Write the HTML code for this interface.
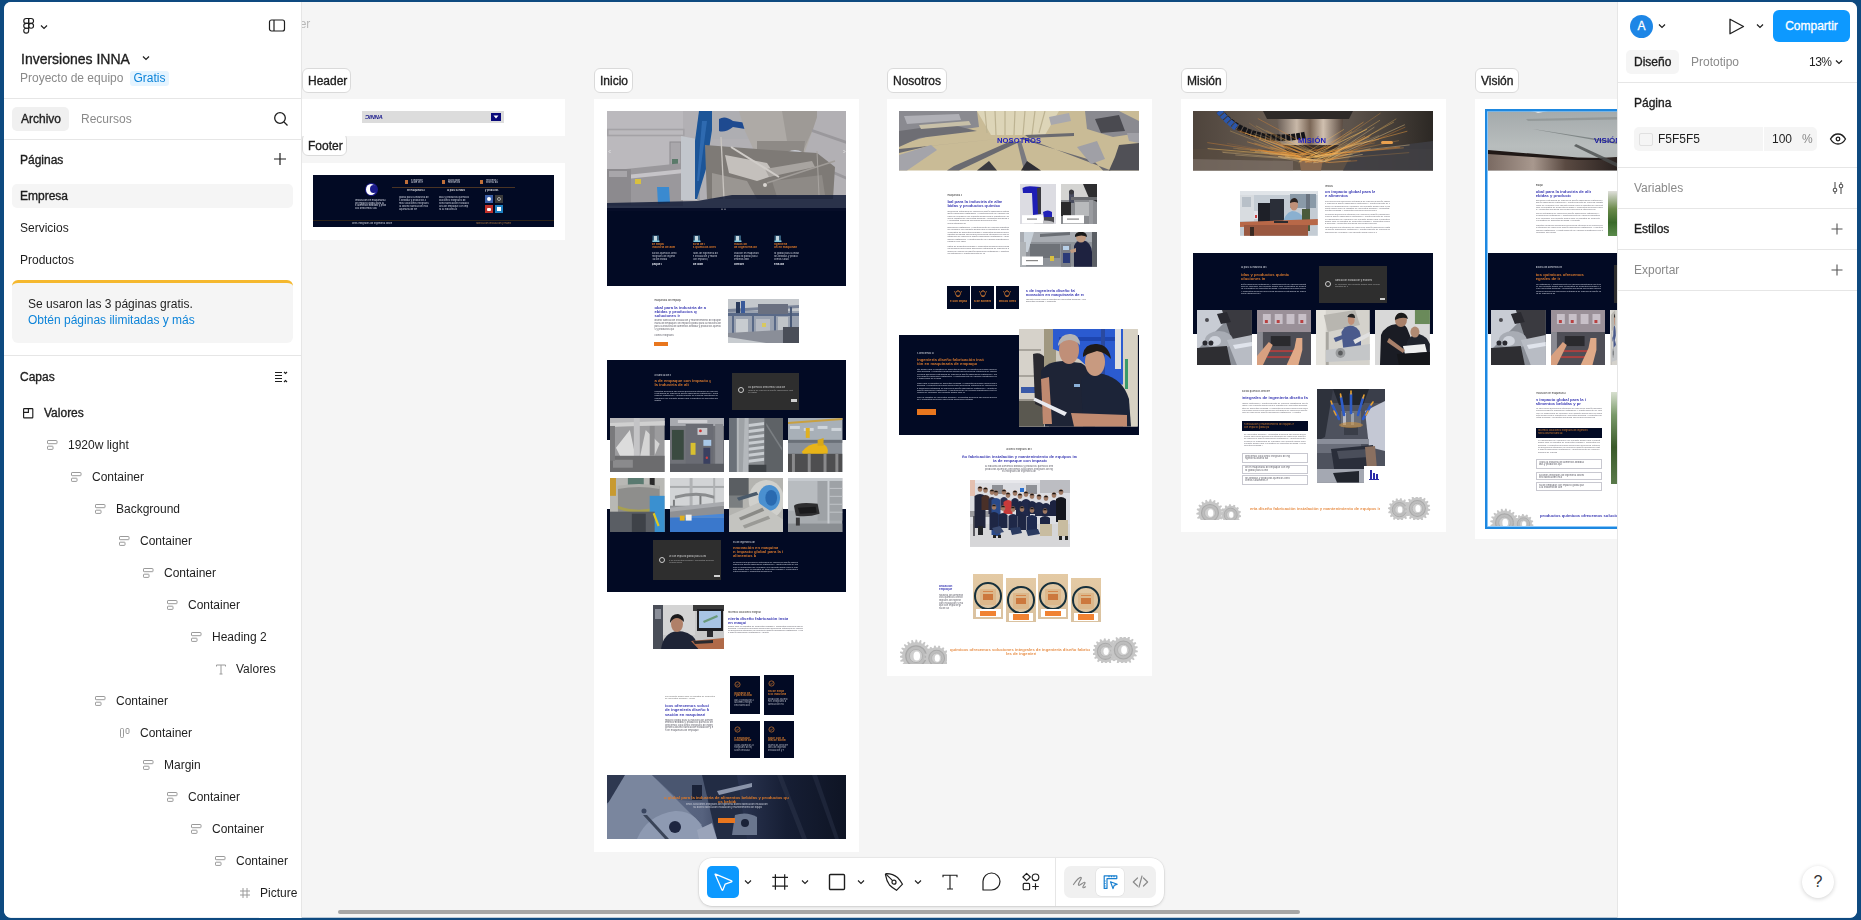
<!DOCTYPE html>
<html><head><meta charset="utf-8">
<style>
*{box-sizing:border-box;margin:0;padding:0}
html,body{width:1861px;height:920px;overflow:hidden;background:#0e4a80;font-family:"Liberation Sans",sans-serif;color:#1e1e1e}
.abs{position:absolute}
#win{position:absolute;left:0;top:0;width:1861px;height:920px;background:#f5f5f5;clip-path:inset(2px 4px 2.2px 4px round 7px)}
#left{position:absolute;left:0;top:0;width:302px;height:920px;background:#fff;border-right:1px solid #e6e6e6}
#right{position:absolute;left:1617px;top:0;width:244px;height:920px;background:#fff;border-left:1px solid #e6e6e6}
.t{position:absolute;white-space:nowrap;font-size:12px;line-height:16px;will-change:transform}
.sb{font-weight:normal!important;-webkit-text-stroke:0.35px currentColor}
.hl{position:absolute;height:1px;background:#e6e6e6}
.lab{position:absolute;height:25px;background:#fff;border:1px solid #d9d9d9;border-radius:6px;font-size:12px;font-weight:bold;line-height:23px;padding:0 6px;color:#222}
.frame{position:absolute;background:#fff;overflow:hidden}
.nv{position:absolute;background:#020b26}
.ph{position:absolute}
</style></head><body>
<div id="win">
<!-- canvas content -->
<div id="canvas" class="abs" style="left:0;top:0;width:1861px;height:920px;will-change:transform">
<div class="t" style="left:271.0px;top:18.0px;font-size:12px;line-height:13.8px;color:#b8b8b8;">Header</div>
<div class="abs" style="left:302px;top:68.4px;width:49px;height:24.39999999999999px;background:#fff;border:1px solid #dadada;border-radius:6px"></div>
<div class="t sb" style="left:308px;top:73.9px;font-size:12px;line-height:14px;color:#1e1e1e">Header</div>
<div class="abs" style="left:302px;top:133px;width:45px;height:23px;background:#fff;border:1px solid #dadada;border-radius:6px"></div>
<div class="t sb" style="left:308px;top:138.5px;font-size:12px;line-height:14px;color:#1e1e1e">Footer</div>
<div class="abs" style="left:594px;top:68.4px;width:39px;height:24.39999999999999px;background:#fff;border:1px solid #dadada;border-radius:6px"></div>
<div class="t sb" style="left:600px;top:73.9px;font-size:12px;line-height:14px;color:#1e1e1e">Inicio</div>
<div class="abs" style="left:887px;top:68.4px;width:60px;height:24.39999999999999px;background:#fff;border:1px solid #dadada;border-radius:6px"></div>
<div class="t sb" style="left:893px;top:73.9px;font-size:12px;line-height:14px;color:#1e1e1e">Nosotros</div>
<div class="abs" style="left:1181px;top:68.4px;width:46px;height:24.39999999999999px;background:#fff;border:1px solid #dadada;border-radius:6px"></div>
<div class="t sb" style="left:1187px;top:73.9px;font-size:12px;line-height:14px;color:#1e1e1e">Misión</div>
<div class="abs" style="left:1475px;top:68.4px;width:44px;height:24.39999999999999px;background:#fff;border:1px solid #dadada;border-radius:6px"></div>
<div class="t sb" style="left:1481px;top:73.9px;font-size:12px;line-height:14px;color:#1e1e1e">Visión</div>
<div class="abs" style="left:302.0px;top:98.7px;width:263.0px;height:37.3px;background:#fff;"></div>
<div class="abs" style="left:302.0px;top:163.0px;width:263.0px;height:77.0px;background:#fff;"></div>
<div class="abs" style="left:594.0px;top:98.7px;width:264.5px;height:753.1px;background:#fff;"></div>
<div class="abs" style="left:887.0px;top:98.7px;width:265.0px;height:577.3px;background:#fff;"></div>
<div class="abs" style="left:1181.0px;top:98.7px;width:265.0px;height:433.3px;background:#fff;"></div>
<div class="abs" style="left:1475.0px;top:98.7px;width:142.0px;height:440.3px;background:#fff;"></div>
<div class="abs" style="left:362.0px;top:111.0px;width:142.0px;height:12.0px;background:#dcdcdc;"></div>
<div class="t" style="left:365.0px;top:114.0px;font-size:6px;line-height:6.9px;color:#1a1a8c;font-weight:bold;letter-spacing:-0.3px"><i>ƆINNA</i></div>
<div class="abs" style="left:491.0px;top:113.0px;width:10.0px;height:8.0px;background:#0a0a7a;"></div>
<svg class="abs" style="left:493px;top:115px" width="6" height="4" viewBox="0 0 6 4"><path d="M0.5 0.5h5L3 3.5z" fill="#fff"/></svg>
<div class="abs" style="left:313.4px;top:175.2px;width:240.2px;height:52.1px;background:#020a24;"></div>
<div class="abs" style="left:365px;top:183px;width:12.5px;height:13px;border-radius:50%;background:#1a1a8a"></div><div class="abs" style="left:365.5px;top:184px;width:10px;height:11px;border-radius:50%;background:#fff"></div>
<div class="abs" style="left:369.5px;top:185px;width:7px;height:8px;border-radius:50%;background:#1a1a8a"></div>
<div class="abs" style="left:355.0px;top:198.9px;width:31.0px;height:3.12px;overflow:hidden;white-space:nowrap;font-size:2.60px;line-height:3.12px;font-weight:normal;color:#d8dce8;opacity:1.00">Innovación en maquinaria de empaque con impacto global para la industria de alimentos bebidas y productos químicos ofrecemos soluciones integrales de ingeniería</div>
<div class="abs" style="left:355.0px;top:201.5px;width:29.4px;height:3.12px;overflow:hidden;white-space:nowrap;font-size:2.60px;line-height:3.12px;font-weight:normal;color:#d8dce8;opacity:1.00">on impacto global para la industria de alimentos bebidas y productos químicos ofrecemos soluciones integrales de ingeniería diseño fabricación instalación y man</div>
<div class="abs" style="left:355.0px;top:204.1px;width:31.0px;height:3.12px;overflow:hidden;white-space:nowrap;font-size:2.60px;line-height:3.12px;font-weight:normal;color:#d8dce8;opacity:1.00">e alimentos bebidas y productos químicos ofrecemos soluciones integrales de ingeniería diseño fabricación instalación y mantenimiento de equipos industriales co</div>
<div class="abs" style="left:355.0px;top:206.7px;width:21.7px;height:3.12px;overflow:hidden;white-space:nowrap;font-size:2.60px;line-height:3.12px;font-weight:normal;color:#d8dce8;opacity:1.00">cos ofrecemos soluciones integrales de ingeniería diseño fabricación instalación y mantenimiento de equipos industriales con tecnología de vanguardia calidad ce</div>
<div class="abs" style="left:405.0px;top:180.0px;width:3.0px;height:4.0px;background:#c0703a;"></div>
<div class="abs" style="left:411.0px;top:178.9px;width:12.0px;height:3.12px;overflow:hidden;white-space:nowrap;font-size:2.60px;line-height:3.12px;font-weight:normal;color:#d8dce8;opacity:1.00">e ingeniería diseño fabricación instalación y mantenimiento de equipos industriales con tecnología de vanguardia calidad certificada y un equipo comprometido co</div>
<div class="abs" style="left:411.0px;top:181.4px;width:12.0px;height:3.12px;overflow:hidden;white-space:nowrap;font-size:2.60px;line-height:3.12px;font-weight:normal;color:#d8dce8;opacity:1.00">ación en maquinaria de empaque con impacto global para la industria de alimentos bebidas y productos químicos ofrecemos soluciones integrales de ingeniería dise</div>
<div class="abs" style="left:442.0px;top:180.0px;width:3.0px;height:4.0px;background:#c0703a;"></div>
<div class="abs" style="left:448.0px;top:178.9px;width:12.0px;height:3.12px;overflow:hidden;white-space:nowrap;font-size:2.60px;line-height:3.12px;font-weight:normal;color:#d8dce8;opacity:1.00">pacto global para la industria de alimentos bebidas y productos químicos ofrecemos soluciones integrales de ingeniería diseño fabricación instalación y mantenim</div>
<div class="abs" style="left:448.0px;top:181.4px;width:12.0px;height:3.12px;overflow:hidden;white-space:nowrap;font-size:2.60px;line-height:3.12px;font-weight:normal;color:#d8dce8;opacity:1.00">mentos bebidas y productos químicos ofrecemos soluciones integrales de ingeniería diseño fabricación instalación y mantenimiento de equipos industriales con tec</div>
<div class="abs" style="left:480.0px;top:180.0px;width:3.0px;height:4.0px;background:#c0703a;"></div>
<div class="abs" style="left:486.0px;top:178.9px;width:12.0px;height:3.12px;overflow:hidden;white-space:nowrap;font-size:2.60px;line-height:3.12px;font-weight:normal;color:#d8dce8;opacity:1.00">frecemos soluciones integrales de ingeniería diseño fabricación instalación y mantenimiento de equipos industriales con tecnología de vanguardia calidad certifi</div>
<div class="abs" style="left:486.0px;top:181.4px;width:12.0px;height:3.12px;overflow:hidden;white-space:nowrap;font-size:2.60px;line-height:3.12px;font-weight:normal;color:#d8dce8;opacity:1.00">eniería diseño fabricación instalación y mantenimiento de equipos industriales con tecnología de vanguardia calidad certificada y un equipo comprometido con la </div>
<div class="abs" style="left:392.0px;top:187.3px;width:123.0px;height:0.5px;background:#4a3424;"></div>
<div class="abs" style="left:407.0px;top:188.9px;width:18.0px;height:3.12px;overflow:hidden;white-space:nowrap;font-size:2.60px;line-height:3.12px;font-weight:normal;color:#ffffff;opacity:1.00"> en maquinaria de empaque con impacto global para la industria de alimentos bebidas y productos químicos ofrecemos soluciones integrales de ingeniería diseño fa</div>
<div class="abs" style="left:399.0px;top:195.9px;width:30.0px;height:3.12px;overflow:hidden;white-space:nowrap;font-size:2.60px;line-height:3.12px;font-weight:normal;color:#d8dce8;opacity:0.95"> global para la industria de alimentos bebidas y productos químicos ofrecemos soluciones integrales de ingeniería diseño fabricación instalación y mantenimiento</div>
<div class="abs" style="left:399.0px;top:198.9px;width:27.0px;height:3.12px;overflow:hidden;white-space:nowrap;font-size:2.60px;line-height:3.12px;font-weight:normal;color:#d8dce8;opacity:0.95">s bebidas y productos químicos ofrecemos soluciones integrales de ingeniería diseño fabricación instalación y mantenimiento de equipos industriales con tecnolog</div>
<div class="abs" style="left:399.0px;top:201.9px;width:30.0px;height:3.12px;overflow:hidden;white-space:nowrap;font-size:2.60px;line-height:3.12px;font-weight:normal;color:#d8dce8;opacity:0.95">mos soluciones integrales de ingeniería diseño fabricación instalación y mantenimiento de equipos industriales con tecnología de vanguardia calidad certificada </div>
<div class="abs" style="left:399.0px;top:204.9px;width:28.5px;height:3.12px;overflow:hidden;white-space:nowrap;font-size:2.60px;line-height:3.12px;font-weight:normal;color:#d8dce8;opacity:0.95">ía diseño fabricación instalación y mantenimiento de equipos industriales con tecnología de vanguardia calidad certificada y un equipo comprometido con la produ</div>
<div class="abs" style="left:399.0px;top:207.9px;width:18.0px;height:3.12px;overflow:hidden;white-space:nowrap;font-size:2.60px;line-height:3.12px;font-weight:normal;color:#d8dce8;opacity:0.95">aquinaria de empaque con impacto global para la industria de alimentos bebidas y productos químicos ofrecemos soluciones integrales de ingeniería diseño fabrica</div>
<div class="abs" style="left:447.0px;top:188.9px;width:18.0px;height:3.12px;overflow:hidden;white-space:nowrap;font-size:2.60px;line-height:3.12px;font-weight:normal;color:#ffffff;opacity:1.00">al para la industria de alimentos bebidas y productos químicos ofrecemos soluciones integrales de ingeniería diseño fabricación instalación y mantenimiento de e</div>
<div class="abs" style="left:439.0px;top:195.9px;width:30.0px;height:3.12px;overflow:hidden;white-space:nowrap;font-size:2.60px;line-height:3.12px;font-weight:normal;color:#d8dce8;opacity:0.95">idas y productos químicos ofrecemos soluciones integrales de ingeniería diseño fabricación instalación y mantenimiento de equipos industriales con tecnología de</div>
<div class="abs" style="left:439.0px;top:198.9px;width:27.0px;height:3.12px;overflow:hidden;white-space:nowrap;font-size:2.60px;line-height:3.12px;font-weight:normal;color:#d8dce8;opacity:0.95">oluciones integrales de ingeniería diseño fabricación instalación y mantenimiento de equipos industriales con tecnología de vanguardia calidad certificada y un </div>
<div class="abs" style="left:439.0px;top:201.9px;width:30.0px;height:3.12px;overflow:hidden;white-space:nowrap;font-size:2.60px;line-height:3.12px;font-weight:normal;color:#d8dce8;opacity:0.95">seño fabricación instalación y mantenimiento de equipos industriales con tecnología de vanguardia calidad certificada y un equipo comprometido con la productivi</div>
<div class="abs" style="left:439.0px;top:204.9px;width:28.5px;height:3.12px;overflow:hidden;white-space:nowrap;font-size:2.60px;line-height:3.12px;font-weight:normal;color:#d8dce8;opacity:0.95">aria de empaque con impacto global para la industria de alimentos bebidas y productos químicos ofrecemos soluciones integrales de ingeniería diseño fabricación </div>
<div class="abs" style="left:439.0px;top:207.9px;width:18.0px;height:3.12px;overflow:hidden;white-space:nowrap;font-size:2.60px;line-height:3.12px;font-weight:normal;color:#d8dce8;opacity:0.95">ra la industria de alimentos bebidas y productos químicos ofrecemos soluciones integrales de ingeniería diseño fabricación instalación y mantenimiento de equipo</div>
<div class="abs" style="left:485.0px;top:188.9px;width:14.0px;height:3.12px;overflow:hidden;white-space:nowrap;font-size:2.60px;line-height:3.12px;font-weight:normal;color:#ffffff;opacity:1.00">y productos químicos ofrecemos soluciones integrales de ingeniería diseño fabricación instalación y mantenimiento de equipos industriales con tecnología de vang</div>
<div class="abs" style="left:485.0px;top:195.0px;width:8.0px;height:8.0px;background:#3b5fa8;"></div>
<div class="abs" style="left:495.0px;top:195.0px;width:8.0px;height:8.0px;background:#3a3a3a;"></div>
<div class="abs" style="left:485.0px;top:205.0px;width:8.0px;height:8.0px;background:#c0302a;"></div>
<div class="abs" style="left:495.0px;top:205.0px;width:8.0px;height:8.0px;background:#1d7fc0;"></div>
<div class="abs" style="left:487px;top:197px;width:4px;height:4px;border-radius:50%;background:#fff"></div><div class="abs" style="left:497px;top:197px;width:4px;height:4px;border-radius:50%;border:1px solid #aaa"></div><div class="abs" style="left:487px;top:207.5px;width:4px;height:3px;border-radius:1px;background:#fff"></div><div class="abs" style="left:497px;top:207px;width:4px;height:4px;background:#fff"></div>
<div class="abs" style="left:313.4px;top:219.5px;width:240.2px;height:0.4px;background:#2e2418;"></div>
<div class="abs" style="left:352.0px;top:221.9px;width:40.0px;height:3.12px;overflow:hidden;white-space:nowrap;font-size:2.60px;line-height:3.12px;font-weight:normal;color:#d8dce8;opacity:0.95">ones integrales de ingeniería diseño fabricación instalación y mantenimiento de equipos industriales con tecnología de vanguardia calidad certificada y un equip</div>
<div class="abs" style="left:476.0px;top:221.9px;width:35.0px;height:3.12px;overflow:hidden;white-space:nowrap;font-size:2.60px;line-height:3.12px;font-weight:normal;color:#b07a40;opacity:0.95">fabricación instalación y mantenimiento de equipos industriales con tecnología de vanguardia calidad certificada y un equipo comprometido con la productividad d</div>
<svg class="abs" style="left:606.6px;top:111px;filter:blur(.3px)" width="239.8" height="100" viewBox="0 0 239.8 100" preserveAspectRatio="none">
<rect width="240" height="100" fill="#b2b0b4"/>
<rect x="0" y="0" width="76" height="60" fill="#bbb9bd"/>
<rect x="0.8" y="18.5" width="76" height="6" fill="none" stroke="#a4a2a6" stroke-width="1.6"/>
<rect x="63" y="31" width="11" height="24" fill="#a9a7ab" stroke="#8e8c90" stroke-width="1"/>
<rect x="65" y="48" width="6" height="6" fill="#5a7a6a"/>
<path d="M0 60 L76 52 L76 95 L0 95Z" fill="#9a989c"/>
<path d="M0 66 L77 58 L77 62 L0 70Z" fill="#c6c4c8"/>
<rect x="0" y="58" width="24" height="36" fill="#8c8a8e"/><rect x="2" y="60" width="18" height="6" fill="#a8a6aa"/>
<rect x="28" y="68" width="6" height="5" fill="#d8c040"/>
<path d="M50 76 L62 76 L63 92 L51 93Z" fill="#3a8ad0"/>
<path d="M74 25 L90 28 L92 89 L74 89Z" fill="#c2c6cc"/><path d="M88 28 L92 29 L93 89 L90 89Z" fill="#9ea2a8"/>
<path d="M92 0 L108 0 L99 58 L90 88 L88 88 L88 30Z" fill="#1c5598"/>
<path d="M95 10 L100 10 L92 70 L90 70Z" fill="#3a78c0" opacity=".6"/>
<rect x="105" y="0" width="37" height="28" fill="#aeaeb2"/>
<path d="M112 8 Q118 4 126 10 L140 12 L138 18 L126 16 Q118 22 112 20Z" fill="#1e4a90"/>
<path d="M132 0 L212 0 L206 18 L196 46 L150 46 L138 20Z" fill="#aeaaa6"/><path d="M175 0 L212 0 L206 18 L196 40 L180 30Z" fill="#9e9a96"/>
<path d="M150 30 L198 30 L196 46 L150 46Z" fill="#8e8a86"/>
<ellipse cx="188" cy="46" rx="10" ry="7" fill="#c8cad2"/>
<rect x="210" y="0" width="30" height="86" fill="#b2b0b4"/>
<path d="M205 18 L240 30 L240 33 L205 21Z" fill="#9a989c"/><path d="M215 55 L240 66 L240 69 L215 58Z" fill="#9a989c"/>
<path d="M98 34 L150 38 L210 42 L228 56 L226 88 L100 88Z" fill="#7e7a76"/>
<path d="M118 44 L160 52 L168 64 L150 70 L122 62Z" fill="#c4c0bc"/>
<path d="M158 58 L205 50 L208 56 L162 66Z" fill="#a8a4a0"/>
<path d="M105 62 L140 70 L150 88 L105 88Z" fill="#9a9692"/>
<path d="M165 70 L215 64 L218 84 L170 86Z" fill="#8e8a86"/>
<path d="M114 26 L117 88" stroke="#c8c4c0" stroke-width="1.3"/>
<path d="M124 36 L172 66" stroke="#d0ccc8" stroke-width="2"/>
<path d="M160 72 L228 50" stroke="#a09c98" stroke-width="1.4"/>
<path d="M210 40 L212 84" stroke="#a8a4a0" stroke-width="1"/>
<circle cx="158" cy="74" r="2" fill="#d8d4d0"/>
<path d="M0 92 L90 90 L125 84 L240 84 L240 100 L0 100Z" fill="#0c1632" opacity=".82"/>
<rect x="0" y="97" width="240" height="3" fill="#060d28"/>
<circle cx="115" cy="98.2" r=".6" fill="#ccc"/><circle cx="118" cy="98.2" r=".6" fill="#ccc"/>
<path d="M3.5 39 l-1.5 1.5 1.5 1.5M236.5 39 l1.5 1.5 -1.5 1.5" stroke="#eee" stroke-width=".8" fill="none"/>
</svg>
<div class="abs" style="left:606.6px;top:210.7px;width:239.8px;height:75.0px;background:#020a24;"></div>
<svg class="abs" style="left:651.6px;top:234.5px" width="8" height="7.5" viewBox="0 0 8 7.5"><rect x="0.5" y="0.5" width="6.5" height="6.5" fill="#6ab8d8" opacity=".5"/><rect x="2" y="1" width="3" height="5.5" fill="#e8f4f8" opacity=".8"/><rect x="0.5" y="5.5" width="7" height="1.5" fill="#7fc7dc"/></svg>
<div class="abs" style="left:651.6px;top:243.2px;width:12.7px;height:3.60px;overflow:hidden;white-space:nowrap;font-size:3.00px;line-height:3.60px;font-weight:bold;color:#e07a28;opacity:1.00">de empaque con impacto global para la industria de alimentos bebidas y productos químicos ofrecemos soluciones integrales de ingeniería diseño fabricación insta</div>
<div class="abs" style="left:651.6px;top:246.0px;width:23.0px;height:3.60px;overflow:hidden;white-space:nowrap;font-size:3.00px;line-height:3.60px;font-weight:bold;color:#e07a28;opacity:1.00"> industria de alimentos bebidas y productos químicos ofrecemos soluciones integrales de ingeniería diseño fabricación instalación y mantenimiento de equipos ind</div>
<div class="abs" style="left:651.6px;top:252.2px;width:25.0px;height:3.12px;overflow:hidden;white-space:nowrap;font-size:2.60px;line-height:3.12px;font-weight:normal;color:#c8ccd8;opacity:1.00">ductos químicos ofrecemos soluciones integrales de ingeniería diseño fabricación instalación y mantenimiento de equipos industriales con tecnología de vanguardi</div>
<div class="abs" style="left:651.6px;top:255.0px;width:23.8px;height:3.12px;overflow:hidden;white-space:nowrap;font-size:2.60px;line-height:3.12px;font-weight:normal;color:#c8ccd8;opacity:1.00">integrales de ingeniería diseño fabricación instalación y mantenimiento de equipos industriales con tecnología de vanguardia calidad certificada y un equipo com</div>
<div class="abs" style="left:651.6px;top:257.8px;width:15.0px;height:3.12px;overflow:hidden;white-space:nowrap;font-size:2.60px;line-height:3.12px;font-weight:normal;color:#c8ccd8;opacity:1.00">cación instalación y mantenimiento de equipos industriales con tecnología de vanguardia calidad certificada y un equipo comprometido con la productividad de su </div>
<div class="abs" style="left:651.6px;top:262.8px;width:10.0px;height:3.60px;overflow:hidden;white-space:nowrap;font-size:3.00px;line-height:3.60px;font-weight:bold;color:#e8ecf4;opacity:1.00">paque con impacto global para la industria de alimentos bebidas y productos químicos ofrecemos soluciones integrales de ingeniería diseño fabricación instalació</div>
<svg class="abs" style="left:692.8px;top:234.5px" width="8" height="7.5" viewBox="0 0 8 7.5"><rect x="0.5" y="0.5" width="6.5" height="6.5" fill="#6ab8d8" opacity=".5"/><rect x="2" y="1" width="3" height="5.5" fill="#e8f4f8" opacity=".8"/><rect x="0.5" y="5.5" width="7" height="1.5" fill="#7fc7dc"/></svg>
<div class="abs" style="left:692.8px;top:243.2px;width:12.7px;height:3.60px;overflow:hidden;white-space:nowrap;font-size:3.00px;line-height:3.60px;font-weight:bold;color:#e07a28;opacity:1.00">stria de alimentos bebidas y productos químicos ofrecemos soluciones integrales de ingeniería diseño fabricación instalación y mantenimiento de equipos industri</div>
<div class="abs" style="left:692.8px;top:246.0px;width:23.0px;height:3.60px;overflow:hidden;white-space:nowrap;font-size:3.00px;line-height:3.60px;font-weight:bold;color:#e07a28;opacity:1.00">s químicos ofrecemos soluciones integrales de ingeniería diseño fabricación instalación y mantenimiento de equipos industriales con tecnología de vanguardia cal</div>
<div class="abs" style="left:692.8px;top:252.2px;width:25.0px;height:3.12px;overflow:hidden;white-space:nowrap;font-size:2.60px;line-height:3.12px;font-weight:normal;color:#c8ccd8;opacity:1.00">rales de ingeniería diseño fabricación instalación y mantenimiento de equipos industriales con tecnología de vanguardia calidad certificada y un equipo comprome</div>
<div class="abs" style="left:692.8px;top:255.0px;width:23.8px;height:3.12px;overflow:hidden;white-space:nowrap;font-size:2.60px;line-height:3.12px;font-weight:normal;color:#c8ccd8;opacity:1.00">n instalación y mantenimiento de equipos industriales con tecnología de vanguardia calidad certificada y un equipo comprometido con la productividad de su plant</div>
<div class="abs" style="left:692.8px;top:257.8px;width:15.0px;height:3.12px;overflow:hidden;white-space:nowrap;font-size:2.60px;line-height:3.12px;font-weight:normal;color:#c8ccd8;opacity:1.00"> con impacto global para la industria de alimentos bebidas y productos químicos ofrecemos soluciones integrales de ingeniería diseño fabricación instalación y m</div>
<div class="abs" style="left:692.8px;top:262.8px;width:10.0px;height:3.60px;overflow:hidden;white-space:nowrap;font-size:3.00px;line-height:3.60px;font-weight:bold;color:#e8ecf4;opacity:1.00"> de alimentos bebidas y productos químicos ofrecemos soluciones integrales de ingeniería diseño fabricación instalación y mantenimiento de equipos industriales </div>
<svg class="abs" style="left:734px;top:234.5px" width="8" height="7.5" viewBox="0 0 8 7.5"><rect x="0.5" y="0.5" width="6.5" height="6.5" fill="#6ab8d8" opacity=".5"/><rect x="2" y="1" width="3" height="5.5" fill="#e8f4f8" opacity=".8"/><rect x="0.5" y="5.5" width="7" height="1.5" fill="#7fc7dc"/></svg>
<div class="abs" style="left:734.0px;top:243.2px;width:12.7px;height:3.60px;overflow:hidden;white-space:nowrap;font-size:3.00px;line-height:3.60px;font-weight:bold;color:#e07a28;opacity:1.00">micos ofrecemos soluciones integrales de ingeniería diseño fabricación instalación y mantenimiento de equipos industriales con tecnología de vanguardia calidad </div>
<div class="abs" style="left:734.0px;top:246.0px;width:23.0px;height:3.60px;overflow:hidden;white-space:nowrap;font-size:3.00px;line-height:3.60px;font-weight:bold;color:#e07a28;opacity:1.00"> de ingeniería diseño fabricación instalación y mantenimiento de equipos industriales con tecnología de vanguardia calidad certificada y un equipo comprometido </div>
<div class="abs" style="left:734.0px;top:252.2px;width:25.0px;height:3.12px;overflow:hidden;white-space:nowrap;font-size:2.60px;line-height:3.12px;font-weight:normal;color:#c8ccd8;opacity:1.00">ovación en maquinaria de empaque con impacto global para la industria de alimentos bebidas y productos químicos ofrecemos soluciones integrales de ingeniería di</div>
<div class="abs" style="left:734.0px;top:255.0px;width:23.8px;height:3.12px;overflow:hidden;white-space:nowrap;font-size:2.60px;line-height:3.12px;font-weight:normal;color:#c8ccd8;opacity:1.00">impacto global para la industria de alimentos bebidas y productos químicos ofrecemos soluciones integrales de ingeniería diseño fabricación instalación y manten</div>
<div class="abs" style="left:734.0px;top:257.8px;width:15.0px;height:3.12px;overflow:hidden;white-space:nowrap;font-size:2.60px;line-height:3.12px;font-weight:normal;color:#c8ccd8;opacity:1.00">limentos bebidas y productos químicos ofrecemos soluciones integrales de ingeniería diseño fabricación instalación y mantenimiento de equipos industriales con t</div>
<div class="abs" style="left:734.0px;top:262.8px;width:10.0px;height:3.60px;overflow:hidden;white-space:nowrap;font-size:3.00px;line-height:3.60px;font-weight:bold;color:#e8ecf4;opacity:1.00"> ofrecemos soluciones integrales de ingeniería diseño fabricación instalación y mantenimiento de equipos industriales con tecnología de vanguardia calidad certi</div>
<svg class="abs" style="left:774px;top:234.5px" width="8" height="7.5" viewBox="0 0 8 7.5"><rect x="0.5" y="0.5" width="6.5" height="6.5" fill="#6ab8d8" opacity=".5"/><rect x="2" y="1" width="3" height="5.5" fill="#e8f4f8" opacity=".8"/><rect x="0.5" y="5.5" width="7" height="1.5" fill="#7fc7dc"/></svg>
<div class="abs" style="left:774.0px;top:243.2px;width:12.7px;height:3.60px;overflow:hidden;white-space:nowrap;font-size:3.00px;line-height:3.60px;font-weight:bold;color:#e07a28;opacity:1.00">ngeniería diseño fabricación instalación y mantenimiento de equipos industriales con tecnología de vanguardia calidad certificada y un equipo comprometido con l</div>
<div class="abs" style="left:774.0px;top:246.0px;width:23.0px;height:3.60px;overflow:hidden;white-space:nowrap;font-size:3.00px;line-height:3.60px;font-weight:bold;color:#e07a28;opacity:1.00">ón en maquinaria de empaque con impacto global para la industria de alimentos bebidas y productos químicos ofrecemos soluciones integrales de ingeniería diseño </div>
<div class="abs" style="left:774.0px;top:252.2px;width:25.0px;height:3.12px;overflow:hidden;white-space:nowrap;font-size:2.60px;line-height:3.12px;font-weight:normal;color:#c8ccd8;opacity:1.00">to global para la industria de alimentos bebidas y productos químicos ofrecemos soluciones integrales de ingeniería diseño fabricación instalación y mantenimien</div>
<div class="abs" style="left:774.0px;top:255.0px;width:23.8px;height:3.12px;overflow:hidden;white-space:nowrap;font-size:2.60px;line-height:3.12px;font-weight:normal;color:#c8ccd8;opacity:1.00">tos bebidas y productos químicos ofrecemos soluciones integrales de ingeniería diseño fabricación instalación y mantenimiento de equipos industriales con tecnol</div>
<div class="abs" style="left:774.0px;top:257.8px;width:15.0px;height:3.12px;overflow:hidden;white-space:nowrap;font-size:2.60px;line-height:3.12px;font-weight:normal;color:#c8ccd8;opacity:1.00">cemos soluciones integrales de ingeniería diseño fabricación instalación y mantenimiento de equipos industriales con tecnología de vanguardia calidad certificad</div>
<div class="abs" style="left:774.0px;top:262.8px;width:10.0px;height:3.60px;overflow:hidden;white-space:nowrap;font-size:3.00px;line-height:3.60px;font-weight:bold;color:#e8ecf4;opacity:1.00">ería diseño fabricación instalación y mantenimiento de equipos industriales con tecnología de vanguardia calidad certificada y un equipo comprometido con la pro</div>
<div class="abs" style="left:654.4px;top:299.4px;width:27.0px;height:3.12px;overflow:hidden;white-space:nowrap;font-size:2.60px;line-height:3.12px;font-weight:normal;color:#333;opacity:1.00"> maquinaria de empaque con impacto global para la industria de alimentos bebidas y productos químicos ofrecemos soluciones integrales de ingeniería diseño fabri</div>
<div class="abs" style="left:654.4px;top:304.5px;width:52.0px;height:5.04px;overflow:hidden;white-space:nowrap;font-size:4.20px;line-height:5.04px;font-weight:bold;color:#3a3ab4;opacity:1.00">obal para la industria de alimentos bebidas y productos químicos ofrecemos soluciones integrales de ingeniería diseño fabricación instalación y mantenimiento de</div>
<div class="abs" style="left:654.4px;top:308.8px;width:42.6px;height:5.04px;overflow:hidden;white-space:nowrap;font-size:4.20px;line-height:5.04px;font-weight:bold;color:#3a3ab4;opacity:1.00">ebidas y productos químicos ofrecemos soluciones integrales de ingeniería diseño fabricación instalación y mantenimiento de equipos industriales con tecnología </div>
<div class="abs" style="left:654.4px;top:313.1px;width:26.0px;height:5.04px;overflow:hidden;white-space:nowrap;font-size:4.20px;line-height:5.04px;font-weight:bold;color:#3a3ab4;opacity:1.00"> soluciones integrales de ingeniería diseño fabricación instalación y mantenimiento de equipos industriales con tecnología de vanguardia calidad certificada y u</div>
<div class="abs" style="left:654.4px;top:319.4px;width:67.0px;height:3.12px;overflow:hidden;white-space:nowrap;font-size:2.60px;line-height:3.12px;font-weight:normal;color:#62626c;opacity:1.00">diseño fabricación instalación y mantenimiento de equipos industriales con tecnología de vanguardia calidad certificada y un equipo comprometido con la producti</div>
<div class="abs" style="left:654.4px;top:322.4px;width:67.0px;height:3.12px;overflow:hidden;white-space:nowrap;font-size:2.60px;line-height:3.12px;font-weight:normal;color:#62626c;opacity:1.00">inaria de empaque con impacto global para la industria de alimentos bebidas y productos químicos ofrecemos soluciones integrales de ingeniería diseño fabricació</div>
<div class="abs" style="left:654.4px;top:325.4px;width:67.0px;height:3.12px;overflow:hidden;white-space:nowrap;font-size:2.60px;line-height:3.12px;font-weight:normal;color:#62626c;opacity:1.00">para la industria de alimentos bebidas y productos químicos ofrecemos soluciones integrales de ingeniería diseño fabricación instalación y mantenimiento de equi</div>
<div class="abs" style="left:654.4px;top:328.4px;width:20.1px;height:3.12px;overflow:hidden;white-space:nowrap;font-size:2.60px;line-height:3.12px;font-weight:normal;color:#62626c;opacity:1.00">s y productos químicos ofrecemos soluciones integrales de ingeniería diseño fabricación instalación y mantenimiento de equipos industriales con tecnología de va</div>
<div class="abs" style="left:654.4px;top:333.7px;width:20.0px;height:3.12px;overflow:hidden;white-space:nowrap;font-size:2.60px;line-height:3.12px;font-weight:normal;color:#62626c;opacity:1.00">ciones integrales de ingeniería diseño fabricación instalación y mantenimiento de equipos industriales con tecnología de vanguardia calidad certificada y un equ</div>
<div class="abs" style="left:654.4px;top:341.5px;width:14.1px;height:4.8px;background:#e8761e;"></div>
<svg class="abs" style="left:728px;top:298.7px;filter:blur(.3px)" width="71.4" height="44.3" viewBox="0 0 71.4 44.3" preserveAspectRatio="none"><rect width="71.4" height="44.3" fill="#9aa2b0"/><rect width="71.4" height="12" fill="#c4c8cc"/>
<path d="M0 10 L71.4 6 L71.4 9 L0 13Z" fill="#7a8498"/>
<rect x="8" y="3" width="4" height="12" fill="#2a3a5a"/><rect x="13" y="2" width="4" height="13" fill="#3a5a9a"/>
<rect x="0" y="14" width="71.4" height="3" fill="#5a6a88"/>
<rect x="4" y="15" width="2" height="25" fill="#5a6a88"/><rect x="24" y="15" width="2" height="25" fill="#5a6a88"/><rect x="46" y="10" width="2" height="30" fill="#5a6a88"/><rect x="62" y="8" width="2" height="32" fill="#4a5a78"/>
<rect x="30" y="5" width="30" height="10" fill="#6a7080"/>
<rect x="8" y="20" width="12" height="14" fill="#c8ccd0"/><rect x="28" y="20" width="14" height="16" fill="#b8bcc4"/><rect x="50" y="18" width="10" height="18" fill="#c0c4c8"/>
<rect x="34" y="24" width="4" height="4" fill="#d8c860"/>
<path d="M0 34 L71.4 30 L71.4 44.3 L0 44.3Z" fill="#8a8e98"/><path d="M0 38 L40 44.3 L0 44.3Z" fill="#c8ccd0"/>
<rect x="55" y="28" width="16" height="16" fill="#4a4e58"/></svg>
<div class="abs" style="left:606.6px;top:360.0px;width:239.8px;height:80.4px;background:#020a24;"></div>
<div class="abs" style="left:654.4px;top:373.6px;width:17.0px;height:3.12px;overflow:hidden;white-space:nowrap;font-size:2.60px;line-height:3.12px;font-weight:normal;color:#d8dce4;opacity:1.00">o fabricación instalación y mantenimiento de equipos industriales con tecnología de vanguardia calidad certificada y un equipo comprometido con la productividad</div>
<div class="abs" style="left:654.4px;top:377.5px;width:57.0px;height:5.04px;overflow:hidden;white-space:nowrap;font-size:4.20px;line-height:5.04px;font-weight:bold;color:#d8782e;opacity:1.00">a de empaque con impacto global para la industria de alimentos bebidas y productos químicos ofrecemos soluciones integrales de ingeniería diseño fabricación ins</div>
<div class="abs" style="left:654.4px;top:381.7px;width:34.2px;height:5.04px;overflow:hidden;white-space:nowrap;font-size:4.20px;line-height:5.04px;font-weight:bold;color:#d8782e;opacity:1.00">la industria de alimentos bebidas y productos químicos ofrecemos soluciones integrales de ingeniería diseño fabricación instalación y mantenimiento de equipos i</div>
<div class="abs" style="left:654.4px;top:389.6px;width:64.0px;height:2.76px;overflow:hidden;white-space:nowrap;font-size:2.30px;line-height:2.76px;font-weight:normal;color:#d4d8e4;opacity:1.00">roductos químicos ofrecemos soluciones integrales de ingeniería diseño fabricación instalación y mantenimiento de equipos industriales con tecnología de vanguar</div>
<div class="abs" style="left:654.4px;top:391.9px;width:64.0px;height:2.76px;overflow:hidden;white-space:nowrap;font-size:2.30px;line-height:2.76px;font-weight:normal;color:#d4d8e4;opacity:1.00">s integrales de ingeniería diseño fabricación instalación y mantenimiento de equipos industriales con tecnología de vanguardia calidad certificada y un equipo c</div>
<div class="abs" style="left:654.4px;top:394.2px;width:64.0px;height:2.76px;overflow:hidden;white-space:nowrap;font-size:2.30px;line-height:2.76px;font-weight:normal;color:#d4d8e4;opacity:1.00">ricación instalación y mantenimiento de equipos industriales con tecnología de vanguardia calidad certificada y un equipo comprometido con la productividad de s</div>
<div class="abs" style="left:654.4px;top:396.5px;width:64.0px;height:2.76px;overflow:hidden;white-space:nowrap;font-size:2.30px;line-height:2.76px;font-weight:normal;color:#d4d8e4;opacity:1.00">empaque con impacto global para la industria de alimentos bebidas y productos químicos ofrecemos soluciones integrales de ingeniería diseño fabricación instalac</div>
<div class="abs" style="left:654.4px;top:398.8px;width:6.4px;height:2.76px;overflow:hidden;white-space:nowrap;font-size:2.30px;line-height:2.76px;font-weight:normal;color:#d4d8e4;opacity:1.00">dustria de alimentos bebidas y productos químicos ofrecemos soluciones integrales de ingeniería diseño fabricación instalación y mantenimiento de equipos indust</div>
<div class="abs" style="left:732.0px;top:372.6px;width:67.4px;height:37.0px;background:#2e2e2e;"></div>
<div class="abs" style="left:738px;top:387px;width:6px;height:6px;border-radius:50%;border:1px solid #ccc"></div>
<div class="abs" style="left:747.5px;top:385.9px;width:37.0px;height:3.12px;overflow:hidden;white-space:nowrap;font-size:2.60px;line-height:3.12px;font-weight:normal;color:#d0d0d0;opacity:1.00">tos químicos ofrecemos soluciones integrales de ingeniería diseño fabricación instalación y mantenimiento de equipos industriales con tecnología de vanguardia c</div>
<div class="abs" style="left:747.5px;top:389.1px;width:45.0px;height:2.76px;overflow:hidden;white-space:nowrap;font-size:2.30px;line-height:2.76px;font-weight:normal;color:#a8a8a8;opacity:1.00">egrales de ingeniería diseño fabricación instalación y mantenimiento de equipos industriales con tecnología de vanguardia calidad certificada y un equipo compro</div>
<div class="abs" style="left:747.5px;top:391.3px;width:9.0px;height:2.76px;overflow:hidden;white-space:nowrap;font-size:2.30px;line-height:2.76px;font-weight:normal;color:#a8a8a8;opacity:1.00">ión instalación y mantenimiento de equipos industriales con tecnología de vanguardia calidad certificada y un equipo comprometido con la productividad de su pla</div>
<div class="abs" style="left:791.0px;top:398.5px;width:6.0px;height:3.8px;background:#d0d0d0;"></div>
<svg class="abs" style="left:610px;top:417.7px;filter:blur(.3px)" width="54.6" height="54.7" viewBox="0 0 55 55" preserveAspectRatio="none"><rect width="100%" height="100%" fill="#9c9c9e"/><rect y="0" width="55" height="8" fill="#b8b8ba"/>
<path d="M0 5 L55 3 L55 7 L0 9Z" fill="#d0d0d0"/>
<path d="M6 30 L20 12 L26 40 L12 42Z" fill="#dcdcdc"/><path d="M30 40 L36 12 L50 26 L44 40Z" fill="#d4d4d4"/>
<rect x="24" y="0" width="6" height="55" fill="#c4c4c6"/><rect x="40" y="8" width="5" height="30" fill="#8a8a8c"/>
<rect x="0" y="38" width="55" height="17" fill="#6c6c6e"/><rect x="3" y="42" width="20" height="8" fill="#8a8a8c"/>
<rect x="0" y="8" width="5" height="35" fill="#7a7a7c"/></svg>
<svg class="abs" style="left:670px;top:417.7px;filter:blur(.3px)" width="54" height="54.7" viewBox="0 0 55 55" preserveAspectRatio="none"><rect width="100%" height="100%" fill="#707278"/><rect width="55" height="8" fill="#a8aab0"/>
<rect x="8" y="2" width="30" height="3" fill="#d0d0d4"/>
<rect x="2" y="12" width="12" height="30" fill="#3a4a40"/>
<rect x="16" y="6" width="28" height="49" fill="#6a6c74"/>
<rect x="28" y="10" width="10" height="7" fill="#c8c8cc"/><circle cx="31" cy="13" r="1.4" fill="#d03030"/>
<rect x="34" y="22" width="8" height="6" fill="#a8c8e8"/>
<rect x="21" y="25" width="5" height="12" fill="#d8c030"/>
<rect x="34" y="30" width="7" height="18" fill="#3a4060"/><circle cx="37.5" cy="40" r="1.2" fill="#d04040"/>
<rect x="46" y="6" width="8" height="49" fill="#8a8c92"/>
<rect x="0" y="46" width="55" height="9" fill="#5a5c62"/></svg>
<svg class="abs" style="left:729px;top:417.7px;filter:blur(.3px)" width="54" height="54.7" viewBox="0 0 55 55" preserveAspectRatio="none"><rect width="100%" height="100%" fill="#8a8e92"/><rect x="0" y="0" width="8" height="55" fill="#6a7078"/>
<rect x="8" y="0" width="12" height="55" fill="#b4b8bc"/><path d="M10 0 L16 0 L14 55 L10 55Z" fill="#9ea2a6"/>
<g fill="#c8ccd0"><path d="M20 6 L36 4 L36 7 L20 9Z"/><path d="M20 12 L36 10 L36 13 L20 15Z"/><path d="M20 18 L36 16 L36 19 L20 21Z"/><path d="M20 24 L36 22 L36 25 L20 27Z"/><path d="M20 30 L36 28 L36 31 L20 33Z"/><path d="M20 36 L36 34 L36 37 L20 39Z"/><path d="M20 42 L36 40 L36 43 L20 45Z"/></g>
<rect x="36" y="0" width="19" height="55" fill="#5e6266"/><path d="M38 5 L54 30 L54 33 L38 8Z" fill="#7a7e82"/>
<rect x="20" y="47" width="18" height="8" fill="#3e4246"/></svg>
<svg class="abs" style="left:788.4px;top:417.7px;filter:blur(.3px)" width="54.3" height="54.7" viewBox="0 0 55 55" preserveAspectRatio="none"><rect width="100%" height="100%" fill="#8a9098"/><rect width="55" height="22" fill="#a8b0b8"/>
<path d="M0 4 L55 0 L55 2 L0 6Z" fill="#c8a040"/>
<g fill="#d0d6dc"><rect x="2" y="8" width="10" height="3"/><rect x="16" y="10" width="10" height="3"/><rect x="30" y="8" width="10" height="3"/><rect x="44" y="10" width="10" height="3"/></g>
<rect x="18" y="10" width="4" height="10" fill="#e0b020"/>
<rect x="0" y="22" width="55" height="3" fill="#6a7078"/>
<path d="M14 34 Q22 24 34 26 Q42 28 40 36 L16 38Z" fill="#e8b418"/><path d="M30 22 L36 20 L36 28 L30 28Z" fill="#d8a818"/>
<rect x="0" y="36" width="55" height="19" fill="#4e4e50"/>
<g fill="#8a8a8c"><rect x="4" y="36" width="3" height="19"/><rect x="20" y="36" width="3" height="19"/><rect x="36" y="36" width="3" height="19"/><rect x="48" y="36" width="3" height="19"/></g></svg>
<div class="abs" style="left:606.6px;top:509.0px;width:239.8px;height:82.7px;background:#020a24;"></div>
<svg class="abs" style="left:610px;top:477.9px;filter:blur(.3px)" width="54.6" height="54.5" viewBox="0 0 55 55" preserveAspectRatio="none"><rect width="100%" height="100%" fill="#b8b8b4"/><rect x="0" y="0" width="6" height="18" fill="#c89a30"/><rect x="18" y="0" width="16" height="10" fill="#5a7a70"/>
<rect x="40" y="0" width="5" height="8" fill="#2a2a2a"/>
<rect x="8" y="8" width="42" height="28" fill="#8e8e8c"/><path d="M8 8 Q29 4 50 8 L50 11 Q29 7 8 11Z" fill="#b0b0ac"/>
<path d="M8 28 Q29 36 50 28 L50 31 Q29 39 8 31Z" fill="#a8a050"/>
<rect x="40" y="18" width="15" height="37" fill="#3a90d0"/>
<rect x="0" y="34" width="45" height="21" fill="#5a5e64"/><rect x="22" y="36" width="14" height="19" fill="#3e4248"/>
<path d="M45 35 L50 48 L48 49 L43 36Z" fill="#e0c820"/></svg>
<svg class="abs" style="left:670px;top:477.9px;filter:blur(.3px)" width="54" height="54.5" viewBox="0 0 55 55" preserveAspectRatio="none"><rect width="100%" height="100%" fill="#d2d4d6"/><rect x="0" y="8" width="55" height="2" fill="#a8aaac"/>
<rect x="20" y="0" width="3" height="40" fill="#b0b2b4"/><rect x="44" y="0" width="2" height="40" fill="#b0b2b4"/>
<path d="M5 18 Q28 12 45 18 L45 21 Q28 15 5 21Z" fill="#8a8c8e"/>
<rect x="3" y="22" width="2" height="20" fill="#7a7c7e"/><rect x="30" y="18" width="2" height="24" fill="#7a7c7e"/>
<rect x="0" y="28" width="55" height="14" fill="#8e9094"/><path d="M0 30 L55 24 L55 28 L0 34Z" fill="#a8aaae"/>
<rect x="0" y="40" width="55" height="15" fill="#3a78cc"/><path d="M0 40 L55 36 L55 40Z" fill="#4a88d8"/>
<rect x="10" y="38" width="5" height="5" fill="#e0b020"/><rect x="16" y="37" width="6" height="6" fill="#f0f0f0"/></svg>
<svg class="abs" style="left:729px;top:477.9px;filter:blur(.3px)" width="54" height="54.5" viewBox="0 0 55 55" preserveAspectRatio="none"><rect width="100%" height="100%" fill="#b4b4b0"/><rect x="0" y="0" width="20" height="18" fill="#5a5e62"/>
<rect x="0" y="18" width="14" height="12" fill="#7a7e80"/>
<ellipse cx="38" cy="22" rx="18" ry="20" fill="#d0d0cc"/><ellipse cx="41" cy="20" rx="11" ry="13" fill="#4a90d0"/><ellipse cx="43" cy="20" rx="6" ry="8" fill="#2a6ab0"/>
<path d="M8 20 L28 14 L30 17 L10 23Z" fill="#4a5a6a"/>
<path d="M0 38 L30 25 L55 42 L55 55 L0 55Z" fill="#c4c4c0"/>
<path d="M10 40 L34 30 L36 33 L12 43Z" fill="#8a8a86"/><path d="M14 48 L40 38 L42 41 L16 51Z" fill="#9a9a96"/></svg>
<svg class="abs" style="left:788.4px;top:477.9px;filter:blur(.3px)" width="54.3" height="54.5" viewBox="0 0 55 55" preserveAspectRatio="none"><rect width="100%" height="100%" fill="#a8acb0"/><rect x="0" y="0" width="55" height="3" fill="#c8ccd0"/>
<rect x="0" y="3" width="30" height="30" fill="#b8bcc0"/><rect x="30" y="3" width="25" height="40" fill="#9ea2a6"/>
<rect x="40" y="3" width="2" height="52" fill="#c8ccd0"/><g fill="#c0c4c8"><rect x="42" y="10" width="13" height="1"/><rect x="42" y="18" width="13" height="1"/><rect x="42" y="26" width="13" height="1"/><rect x="42" y="34" width="13" height="1"/></g>
<path d="M6 28 Q10 24 30 26 L32 36 Q20 40 8 38Z" fill="#2e2e30"/><path d="M10 30 L28 29 L29 35 L12 36Z" fill="#1a1a1c"/>
<rect x="0" y="46" width="55" height="9" fill="#8a8e92"/><rect x="8" y="40" width="4" height="8" fill="#3a3a3c"/></svg>
<div class="abs" style="left:653.0px;top:540.0px;width:68.0px;height:39.8px;background:#2e2e2e;"></div>
<div class="abs" style="left:659px;top:557px;width:6px;height:6px;border-radius:50%;border:1px solid #ccc"></div>
<div class="abs" style="left:668.5px;top:554.9px;width:37.0px;height:3.12px;overflow:hidden;white-space:nowrap;font-size:2.60px;line-height:3.12px;font-weight:normal;color:#d0d0d0;opacity:1.00">ue con impacto global para la industria de alimentos bebidas y productos químicos ofrecemos soluciones integrales de ingeniería diseño fabricación instalación y</div>
<div class="abs" style="left:668.5px;top:559.1px;width:45.0px;height:2.76px;overflow:hidden;white-space:nowrap;font-size:2.30px;line-height:2.76px;font-weight:normal;color:#a8a8a8;opacity:1.00">ia de alimentos bebidas y productos químicos ofrecemos soluciones integrales de ingeniería diseño fabricación instalación y mantenimiento de equipos industriale</div>
<div class="abs" style="left:668.5px;top:561.3px;width:13.5px;height:2.76px;overflow:hidden;white-space:nowrap;font-size:2.30px;line-height:2.76px;font-weight:normal;color:#a8a8a8;opacity:1.00">uímicos ofrecemos soluciones integrales de ingeniería diseño fabricación instalación y mantenimiento de equipos industriales con tecnología de vanguardia calida</div>
<div class="abs" style="left:714.0px;top:574.5px;width:6.0px;height:2.8px;background:#d0d0d0;"></div>
<div class="abs" style="left:733.0px;top:540.9px;width:22.0px;height:3.12px;overflow:hidden;white-space:nowrap;font-size:2.60px;line-height:3.12px;font-weight:normal;color:#d8dce4;opacity:1.00">es de ingeniería diseño fabricación instalación y mantenimiento de equipos industriales con tecnología de vanguardia calidad certificada y un equipo comprometid</div>
<div class="abs" style="left:733.0px;top:545.0px;width:45.0px;height:5.04px;overflow:hidden;white-space:nowrap;font-size:4.20px;line-height:5.04px;font-weight:bold;color:#d8782e;opacity:1.00">nnovación en maquinaria de empaque con impacto global para la industria de alimentos bebidas y productos químicos ofrecemos soluciones integrales de ingeniería </div>
<div class="abs" style="left:733.0px;top:549.2px;width:50.0px;height:5.04px;overflow:hidden;white-space:nowrap;font-size:4.20px;line-height:5.04px;font-weight:bold;color:#d8782e;opacity:1.00">n impacto global para la industria de alimentos bebidas y productos químicos ofrecemos soluciones integrales de ingeniería diseño fabricación instalación y mant</div>
<div class="abs" style="left:733.0px;top:553.4px;width:22.5px;height:5.04px;overflow:hidden;white-space:nowrap;font-size:4.20px;line-height:5.04px;font-weight:bold;color:#d8782e;opacity:1.00"> alimentos bebidas y productos químicos ofrecemos soluciones integrales de ingeniería diseño fabricación instalación y mantenimiento de equipos industriales con</div>
<div class="abs" style="left:733.0px;top:561.1px;width:65.0px;height:2.76px;overflow:hidden;white-space:nowrap;font-size:2.30px;line-height:2.76px;font-weight:normal;color:#d4d8e4;opacity:1.00">os ofrecemos soluciones integrales de ingeniería diseño fabricación instalación y mantenimiento de equipos industriales con tecnología de vanguardia calidad cer</div>
<div class="abs" style="left:733.0px;top:563.3px;width:65.0px;height:2.76px;overflow:hidden;white-space:nowrap;font-size:2.30px;line-height:2.76px;font-weight:normal;color:#d4d8e4;opacity:1.00"> ingeniería diseño fabricación instalación y mantenimiento de equipos industriales con tecnología de vanguardia calidad certificada y un equipo comprometido con</div>
<div class="abs" style="left:733.0px;top:565.5px;width:65.0px;height:2.76px;overflow:hidden;white-space:nowrap;font-size:2.30px;line-height:2.76px;font-weight:normal;color:#d4d8e4;opacity:1.00">ción en maquinaria de empaque con impacto global para la industria de alimentos bebidas y productos químicos ofrecemos soluciones integrales de ingeniería diseñ</div>
<div class="abs" style="left:733.0px;top:567.7px;width:65.0px;height:2.76px;overflow:hidden;white-space:nowrap;font-size:2.30px;line-height:2.76px;font-weight:normal;color:#d4d8e4;opacity:1.00">acto global para la industria de alimentos bebidas y productos químicos ofrecemos soluciones integrales de ingeniería diseño fabricación instalación y mantenimi</div>
<div class="abs" style="left:733.0px;top:569.9px;width:39.0px;height:2.76px;overflow:hidden;white-space:nowrap;font-size:2.30px;line-height:2.76px;font-weight:normal;color:#d4d8e4;opacity:1.00">entos bebidas y productos químicos ofrecemos soluciones integrales de ingeniería diseño fabricación instalación y mantenimiento de equipos industriales con tecn</div>
<svg class="abs" style="left:653px;top:604.8px;filter:blur(.3px)" width="71.4" height="44.5" viewBox="0 0 71.4 44.5" preserveAspectRatio="none"><rect width="71.4" height="44.5" fill="#c8c8c8"/><rect x="0" y="0" width="10" height="44.5" fill="#4a4e58"/>
<rect x="10" y="0" width="32" height="30" fill="#d4d4d4"/><rect x="2" y="4" width="6" height="10" fill="#8a8e98"/>
<rect x="40" y="0" width="31.4" height="6" fill="#3a3a3a"/>
<rect x="44" y="4" width="26" height="22" fill="#1e1e22"/><rect x="46" y="6" width="22" height="17" fill="#a8c4e4"/><path d="M50 16 L64 10 L65 12 L51 18Z" fill="#6a9a7a"/>
<rect x="54" y="26" width="6" height="6" fill="#2a2a2e"/>
<path d="M8 44.5 Q10 28 24 26 Q36 26 42 34 L46 44.5Z" fill="#1e2436"/>
<ellipse cx="24" cy="19" rx="6" ry="8" fill="#b08068"/><path d="M17 16 Q18 9 25 9 Q31 10 31 17 Q27 13 24 13 Q20 13 17 18Z" fill="#1a1a1c"/>
<path d="M38 36 L71.4 33 L71.4 44.5 L46 44.5Z" fill="#b06a48"/>
<path d="M40 36 L60 35 L60 38 L42 39Z" fill="#2a2a2e"/></svg>
<div class="abs" style="left:728.0px;top:611.4px;width:33.0px;height:3.12px;overflow:hidden;white-space:nowrap;font-size:2.60px;line-height:3.12px;font-weight:normal;color:#333;opacity:1.00">recemos soluciones integrales de ingeniería diseño fabricación instalación y mantenimiento de equipos industriales con tecnología de vanguardia calidad certific</div>
<div class="abs" style="left:728.0px;top:615.5px;width:60.0px;height:5.04px;overflow:hidden;white-space:nowrap;font-size:4.20px;line-height:5.04px;font-weight:bold;color:#3a3ab4;opacity:1.00">niería diseño fabricación instalación y mantenimiento de equipos industriales con tecnología de vanguardia calidad certificada y un equipo comprometido con la p</div>
<div class="abs" style="left:728.0px;top:619.7px;width:18.0px;height:5.04px;overflow:hidden;white-space:nowrap;font-size:4.20px;line-height:5.04px;font-weight:bold;color:#3a3ab4;opacity:1.00">en maquinaria de empaque con impacto global para la industria de alimentos bebidas y productos químicos ofrecemos soluciones integrales de ingeniería diseño fab</div>
<div class="abs" style="left:728.0px;top:624.6px;width:75.0px;height:2.76px;overflow:hidden;white-space:nowrap;font-size:2.30px;line-height:2.76px;font-weight:normal;color:#62626c;opacity:1.00">global para la industria de alimentos bebidas y productos químicos ofrecemos soluciones integrales de ingeniería diseño fabricación instalación y mantenimiento </div>
<div class="abs" style="left:728.0px;top:626.8px;width:75.0px;height:2.76px;overflow:hidden;white-space:nowrap;font-size:2.30px;line-height:2.76px;font-weight:normal;color:#62626c;opacity:1.00"> bebidas y productos químicos ofrecemos soluciones integrales de ingeniería diseño fabricación instalación y mantenimiento de equipos industriales con tecnologí</div>
<div class="abs" style="left:728.0px;top:629.0px;width:75.0px;height:2.76px;overflow:hidden;white-space:nowrap;font-size:2.30px;line-height:2.76px;font-weight:normal;color:#62626c;opacity:1.00">os soluciones integrales de ingeniería diseño fabricación instalación y mantenimiento de equipos industriales con tecnología de vanguardia calidad certificada y</div>
<div class="abs" style="left:728.0px;top:631.2px;width:41.2px;height:2.76px;overflow:hidden;white-space:nowrap;font-size:2.30px;line-height:2.76px;font-weight:normal;color:#62626c;opacity:1.00">a diseño fabricación instalación y mantenimiento de equipos industriales con tecnología de vanguardia calidad certificada y un equipo comprometido con la produc</div>
<div class="abs" style="left:730.3px;top:675.9px;width:29.6px;height:37.8px;background:#020a24;"></div>
<svg class="abs" style="left:733.8px;top:680.9px" width="7" height="7" viewBox="0 0 7 7" fill="none" stroke="#d07830" stroke-width=".7"><circle cx="3.5" cy="3.5" r="2.6"/><path d="M2 3.5l1 1 2-2"/></svg>
<div class="abs" style="left:734.3px;top:691.7px;width:16.2px;height:3.60px;overflow:hidden;white-space:nowrap;font-size:3.00px;line-height:3.60px;font-weight:bold;color:#d0782e;opacity:1.00">quinaria de empaque con impacto global para la industria de alimentos bebidas y productos químicos ofrecemos soluciones integrales de ingeniería diseño fabricac</div>
<div class="abs" style="left:734.3px;top:694.2px;width:18.0px;height:3.60px;overflow:hidden;white-space:nowrap;font-size:3.00px;line-height:3.60px;font-weight:bold;color:#d0782e;opacity:1.00">l para la industria de alimentos bebidas y productos químicos ofrecemos soluciones integrales de ingeniería diseño fabricación instalación y mantenimiento de eq</div>
<div class="abs" style="left:734.3px;top:698.8px;width:20.0px;height:3.12px;overflow:hidden;white-space:nowrap;font-size:2.60px;line-height:3.12px;font-weight:normal;color:#b0b4c0;opacity:1.00">das y productos químicos ofrecemos soluciones integrales de ingeniería diseño fabricación instalación y mantenimiento de equipos industriales con tecnología de </div>
<div class="abs" style="left:734.3px;top:701.3px;width:18.0px;height:3.12px;overflow:hidden;white-space:nowrap;font-size:2.60px;line-height:3.12px;font-weight:normal;color:#b0b4c0;opacity:1.00">luciones integrales de ingeniería diseño fabricación instalación y mantenimiento de equipos industriales con tecnología de vanguardia calidad certificada y un e</div>
<div class="abs" style="left:734.3px;top:703.8px;width:16.0px;height:3.12px;overflow:hidden;white-space:nowrap;font-size:2.60px;line-height:3.12px;font-weight:normal;color:#b0b4c0;opacity:1.00">eño fabricación instalación y mantenimiento de equipos industriales con tecnología de vanguardia calidad certificada y un equipo comprometido con la productivid</div>
<div class="abs" style="left:764.0px;top:674.6px;width:29.6px;height:40.8px;background:#020a24;"></div>
<svg class="abs" style="left:767.5px;top:679.6px" width="7" height="7" viewBox="0 0 7 7" fill="none" stroke="#d07830" stroke-width=".7"><circle cx="3.5" cy="3.5" r="2.6"/><path d="M2 3.5l1 1 2-2"/></svg>
<div class="abs" style="left:768.0px;top:690.4px;width:16.2px;height:3.60px;overflow:hidden;white-space:nowrap;font-size:3.00px;line-height:3.60px;font-weight:bold;color:#d0782e;opacity:1.00">ria de empaque con impacto global para la industria de alimentos bebidas y productos químicos ofrecemos soluciones integrales de ingeniería diseño fabricación i</div>
<div class="abs" style="left:768.0px;top:692.9px;width:18.0px;height:3.60px;overflow:hidden;white-space:nowrap;font-size:3.00px;line-height:3.60px;font-weight:bold;color:#d0782e;opacity:1.00">a la industria de alimentos bebidas y productos químicos ofrecemos soluciones integrales de ingeniería diseño fabricación instalación y mantenimiento de equipos</div>
<div class="abs" style="left:768.0px;top:697.5px;width:20.0px;height:3.12px;overflow:hidden;white-space:nowrap;font-size:2.60px;line-height:3.12px;font-weight:normal;color:#b0b4c0;opacity:1.00"> productos químicos ofrecemos soluciones integrales de ingeniería diseño fabricación instalación y mantenimiento de equipos industriales con tecnología de vangu</div>
<div class="abs" style="left:768.0px;top:700.0px;width:18.0px;height:3.12px;overflow:hidden;white-space:nowrap;font-size:2.60px;line-height:3.12px;font-weight:normal;color:#b0b4c0;opacity:1.00">nes integrales de ingeniería diseño fabricación instalación y mantenimiento de equipos industriales con tecnología de vanguardia calidad certificada y un equipo</div>
<div class="abs" style="left:768.0px;top:702.5px;width:16.0px;height:3.12px;overflow:hidden;white-space:nowrap;font-size:2.60px;line-height:3.12px;font-weight:normal;color:#b0b4c0;opacity:1.00">abricación instalación y mantenimiento de equipos industriales con tecnología de vanguardia calidad certificada y un equipo comprometido con la productividad de</div>
<div class="abs" style="left:730.3px;top:720.9px;width:29.6px;height:37.4px;background:#020a24;"></div>
<svg class="abs" style="left:733.8px;top:725.9px" width="7" height="7" viewBox="0 0 7 7" fill="none" stroke="#d07830" stroke-width=".7"><circle cx="3.5" cy="3.5" r="2.6"/><path d="M2 3.5l1 1 2-2"/></svg>
<div class="abs" style="left:734.3px;top:736.7px;width:16.2px;height:3.60px;overflow:hidden;white-space:nowrap;font-size:3.00px;line-height:3.60px;font-weight:bold;color:#d0782e;opacity:1.00">e empaque con impacto global para la industria de alimentos bebidas y productos químicos ofrecemos soluciones integrales de ingeniería diseño fabricación instal</div>
<div class="abs" style="left:734.3px;top:739.2px;width:18.0px;height:3.60px;overflow:hidden;white-space:nowrap;font-size:3.00px;line-height:3.60px;font-weight:bold;color:#d0782e;opacity:1.00">industria de alimentos bebidas y productos químicos ofrecemos soluciones integrales de ingeniería diseño fabricación instalación y mantenimiento de equipos indu</div>
<div class="abs" style="left:734.3px;top:743.8px;width:20.0px;height:3.12px;overflow:hidden;white-space:nowrap;font-size:2.60px;line-height:3.12px;font-weight:normal;color:#b0b4c0;opacity:1.00">uctos químicos ofrecemos soluciones integrales de ingeniería diseño fabricación instalación y mantenimiento de equipos industriales con tecnología de vanguardia</div>
<div class="abs" style="left:734.3px;top:746.3px;width:18.0px;height:3.12px;overflow:hidden;white-space:nowrap;font-size:2.60px;line-height:3.12px;font-weight:normal;color:#b0b4c0;opacity:1.00">ntegrales de ingeniería diseño fabricación instalación y mantenimiento de equipos industriales con tecnología de vanguardia calidad certificada y un equipo comp</div>
<div class="abs" style="left:734.3px;top:748.8px;width:16.0px;height:3.12px;overflow:hidden;white-space:nowrap;font-size:2.60px;line-height:3.12px;font-weight:normal;color:#b0b4c0;opacity:1.00">ación instalación y mantenimiento de equipos industriales con tecnología de vanguardia calidad certificada y un equipo comprometido con la productividad de su p</div>
<div class="abs" style="left:764.0px;top:721.0px;width:29.6px;height:37.3px;background:#020a24;"></div>
<svg class="abs" style="left:767.5px;top:726.0px" width="7" height="7" viewBox="0 0 7 7" fill="none" stroke="#d07830" stroke-width=".7"><circle cx="3.5" cy="3.5" r="2.6"/><path d="M2 3.5l1 1 2-2"/></svg>
<div class="abs" style="left:768.0px;top:736.8px;width:16.2px;height:3.60px;overflow:hidden;white-space:nowrap;font-size:3.00px;line-height:3.60px;font-weight:bold;color:#d0782e;opacity:1.00">aque con impacto global para la industria de alimentos bebidas y productos químicos ofrecemos soluciones integrales de ingeniería diseño fabricación instalación</div>
<div class="abs" style="left:768.0px;top:739.3px;width:18.0px;height:3.60px;overflow:hidden;white-space:nowrap;font-size:3.00px;line-height:3.60px;font-weight:bold;color:#d0782e;opacity:1.00">tria de alimentos bebidas y productos químicos ofrecemos soluciones integrales de ingeniería diseño fabricación instalación y mantenimiento de equipos industria</div>
<div class="abs" style="left:768.0px;top:743.9px;width:20.0px;height:3.12px;overflow:hidden;white-space:nowrap;font-size:2.60px;line-height:3.12px;font-weight:normal;color:#b0b4c0;opacity:1.00"> químicos ofrecemos soluciones integrales de ingeniería diseño fabricación instalación y mantenimiento de equipos industriales con tecnología de vanguardia cali</div>
<div class="abs" style="left:768.0px;top:746.4px;width:18.0px;height:3.12px;overflow:hidden;white-space:nowrap;font-size:2.60px;line-height:3.12px;font-weight:normal;color:#b0b4c0;opacity:1.00">ales de ingeniería diseño fabricación instalación y mantenimiento de equipos industriales con tecnología de vanguardia calidad certificada y un equipo compromet</div>
<div class="abs" style="left:768.0px;top:748.9px;width:16.0px;height:3.12px;overflow:hidden;white-space:nowrap;font-size:2.60px;line-height:3.12px;font-weight:normal;color:#b0b4c0;opacity:1.00"> instalación y mantenimiento de equipos industriales con tecnología de vanguardia calidad certificada y un equipo comprometido con la productividad de su planta</div>
<div class="abs" style="left:665.0px;top:695.1px;width:50.0px;height:2.76px;overflow:hidden;white-space:nowrap;font-size:2.30px;line-height:2.76px;font-weight:normal;color:#666;opacity:0.95">con impacto global para la industria de alimentos bebidas y productos químicos ofrecemos soluciones integrales de ingeniería diseño fabricación instalación y ma</div>
<div class="abs" style="left:665.0px;top:696.7px;width:30.0px;height:2.76px;overflow:hidden;white-space:nowrap;font-size:2.30px;line-height:2.76px;font-weight:normal;color:#666;opacity:0.95">de alimentos bebidas y productos químicos ofrecemos soluciones integrales de ingeniería diseño fabricación instalación y mantenimiento de equipos industriales c</div>
<div class="abs" style="left:665.0px;top:703.2px;width:44.0px;height:5.04px;overflow:hidden;white-space:nowrap;font-size:4.20px;line-height:5.04px;font-weight:bold;color:#3a3ab4;opacity:1.00">icos ofrecemos soluciones integrales de ingeniería diseño fabricación instalación y mantenimiento de equipos industriales con tecnología de vanguardia calidad c</div>
<div class="abs" style="left:665.0px;top:707.4px;width:44.0px;height:5.04px;overflow:hidden;white-space:nowrap;font-size:4.20px;line-height:5.04px;font-weight:bold;color:#3a3ab4;opacity:1.00">de ingeniería diseño fabricación instalación y mantenimiento de equipos industriales con tecnología de vanguardia calidad certificada y un equipo comprometido c</div>
<div class="abs" style="left:665.0px;top:711.6px;width:39.6px;height:5.04px;overflow:hidden;white-space:nowrap;font-size:4.20px;line-height:5.04px;font-weight:bold;color:#3a3ab4;opacity:1.00">vación en maquinaria de empaque con impacto global para la industria de alimentos bebidas y productos químicos ofrecemos soluciones integrales de ingeniería dis</div>
<div class="abs" style="left:665.0px;top:718.9px;width:48.0px;height:3.12px;overflow:hidden;white-space:nowrap;font-size:2.60px;line-height:3.12px;font-weight:normal;color:#62626c;opacity:1.00">mpacto global para la industria de alimentos bebidas y productos químicos ofrecemos soluciones integrales de ingeniería diseño fabricación instalación y manteni</div>
<div class="abs" style="left:665.0px;top:721.3px;width:48.0px;height:3.12px;overflow:hidden;white-space:nowrap;font-size:2.60px;line-height:3.12px;font-weight:normal;color:#62626c;opacity:1.00">imentos bebidas y productos químicos ofrecemos soluciones integrales de ingeniería diseño fabricación instalación y mantenimiento de equipos industriales con te</div>
<div class="abs" style="left:665.0px;top:723.7px;width:48.0px;height:3.12px;overflow:hidden;white-space:nowrap;font-size:2.60px;line-height:3.12px;font-weight:normal;color:#62626c;opacity:1.00">ofrecemos soluciones integrales de ingeniería diseño fabricación instalación y mantenimiento de equipos industriales con tecnología de vanguardia calidad certif</div>
<div class="abs" style="left:665.0px;top:726.1px;width:48.0px;height:3.12px;overflow:hidden;white-space:nowrap;font-size:2.60px;line-height:3.12px;font-weight:normal;color:#62626c;opacity:1.00">geniería diseño fabricación instalación y mantenimiento de equipos industriales con tecnología de vanguardia calidad certificada y un equipo comprometido con la</div>
<div class="abs" style="left:665.0px;top:728.5px;width:33.6px;height:3.12px;overflow:hidden;white-space:nowrap;font-size:2.60px;line-height:3.12px;font-weight:normal;color:#62626c;opacity:1.00">n en maquinaria de empaque con impacto global para la industria de alimentos bebidas y productos químicos ofrecemos soluciones integrales de ingeniería diseño f</div>
<svg class="abs" style="left:606.8px;top:774.8px;filter:blur(.3px)" width="239.4" height="64" viewBox="0 0 239.4 64" preserveAspectRatio="none">
<defs><linearGradient id="bn1" x1="0" y1="0" x2="1" y2="0"><stop offset="0" stop-color="#63708c"/><stop offset=".4" stop-color="#56627e"/><stop offset=".55" stop-color="#2a3450"/><stop offset=".75" stop-color="#161e34"/><stop offset="1" stop-color="#0e1424"/></linearGradient></defs>
<rect width="239.4" height="64" fill="url(#bn1)"/>
<path d="M0 0 L18 0 L18 22 L0 28Z" fill="#2e3850"/>
<path d="M18 0 L45 0 L95 50 L60 64 L0 64 L0 30Z" fill="#7a869e"/>
<path d="M45 0 L108 0 L105 28 L72 25Z" fill="#4a5670"/>
<path d="M30 64 Q40 40 68 36 Q92 35 100 64Z" fill="#8e9ab2"/>
<circle cx="68" cy="52" r="6" fill="#1e2640"/><circle cx="37" cy="36" r="2.5" fill="#3a4660"/>
<path d="M36 40 L58 64 L62 64 L40 40Z" fill="#3a4458"/>
<path d="M85 10 L95 10 L95 25 L85 25Z" fill="#1a2238"/>
<path d="M95 0 L130 0 L140 64 L110 64Z" fill="#222c44"/>
<path d="M110 16 L145 8 L145 12 L112 20Z" fill="#8a94aa"/>
<path d="M128 40 Q140 36 150 42 L150 60 L125 60Z" fill="#6a768e"/>
<circle cx="138" cy="48" r="4" fill="#1a2238"/>
<path d="M90 55 L105 48 L110 64 L92 64Z" fill="#9aa4ba"/>
<path d="M170 0 L175 0 L200 64 L195 64Z" fill="#2a3248" opacity=".6"/>
<path d="M205 0 L210 0 L232 64 L228 64Z" fill="#2a3248" opacity=".5"/>
</svg>
<div class="abs" style="left:664.0px;top:794.5px;width:125.0px;height:5.04px;overflow:hidden;white-space:nowrap;font-size:4.20px;line-height:5.04px;font-weight:bold;color:#e07a28;opacity:1.00">o global para la industria de alimentos bebidas y productos químicos ofrecemos soluciones integrales de ingeniería diseño fabricación instalación y mantenimient</div>
<div class="abs" style="left:718.0px;top:798.8px;width:18.0px;height:5.04px;overflow:hidden;white-space:nowrap;font-size:4.20px;line-height:5.04px;font-weight:bold;color:#e07a28;opacity:1.00">os bebidas y productos químicos ofrecemos soluciones integrales de ingeniería diseño fabricación instalación y mantenimiento de equipos industriales con tecnolo</div>
<div class="abs" style="left:686.0px;top:803.4px;width:82.0px;height:3.12px;overflow:hidden;white-space:nowrap;font-size:2.60px;line-height:3.12px;font-weight:normal;color:#c8ccd8;opacity:1.00">emos soluciones integrales de ingeniería diseño fabricación instalación y mantenimiento de equipos industriales con tecnología de vanguardia calidad certificada</div>
<div class="abs" style="left:693.0px;top:805.7px;width:69.0px;height:3.12px;overflow:hidden;white-space:nowrap;font-size:2.60px;line-height:3.12px;font-weight:normal;color:#c8ccd8;opacity:1.00">ría diseño fabricación instalación y mantenimiento de equipos industriales con tecnología de vanguardia calidad certificada y un equipo comprometido con la prod</div>
<div class="abs" style="left:718.0px;top:817.6px;width:17.0px;height:5.4px;background:#e8761e;"></div>
<svg class="abs" style="left:899.4px;top:111px;filter:blur(.3px)" width="239.9" height="59.5" viewBox="0 0 239.9 59.5" preserveAspectRatio="none">
<rect width="240" height="59.5" fill="#c9bb96"/>
<path d="M0 0 L78 0 L80 16 L40 22 L0 34Z" fill="#8a8a90"/>
<path d="M5 5 L60 3 L62 9 L8 13Z" fill="#b0b0b6"/>
<path d="M0 20 L50 13 L78 20 L20 27 L0 36Z" fill="#6e6e74"/>
<path d="M20 14 L70 10 L72 14 L22 18Z" fill="#c8c0a8"/>
<path d="M78 0 L160 0 L146 24 L92 24Z" fill="#ddd5b8"/>
<path d="M86 0 L88 22 M96 0 L97 24 M106 0 L106 24 M116 0 L115 24 M126 0 L124 24 M136 0 L133 24 M146 0 L140 22" stroke="#bdb392" stroke-width="1.2"/>
<path d="M118 26 L0 38 L0 42 L30 35Z" fill="#6a6a70"/>
<path d="M0 44 L32 34 L38 39 L8 59.5 L0 59.5Z" fill="#a4a4aa"/>
<path d="M112 30 L55 55 L48 59.5 L60 59.5 L118 32Z" fill="#6a6a70"/>
<path d="M90 50 L78 59.5 L98 59.5Z" fill="#3a3a40"/>
<path d="M118 30 L125 59.5 L131 59.5 L122 30Z" fill="#7a7a80"/>
<path d="M128 50 L122 59.5 L142 59.5Z" fill="#2e2e34"/>
<path d="M122 28 L195 50 L204 59.5 L212 59.5 L124 26Z" fill="#6a6a70"/>
<path d="M178 36 L198 30 L206 48 L192 53Z" fill="#a0a0a6"/>
<path d="M126 24 L175 22 L175 25 L130 27Z" fill="#6a6a70"/>
<path d="M150 6 L170 2 L172 10 L152 14Z" fill="#a8a8ae"/>
<path d="M186 0 L220 0 L240 10 L240 22 L214 26 L188 18Z" fill="#8a8a90"/>
<path d="M196 8 L220 4 L226 20 L202 22Z" fill="#4a4a50"/>
<path d="M220 34 L240 32 L240 59.5 L210 59.5 L216 46Z" fill="#505056"/>
<path d="M228 22 L240 22 L240 32 L230 30Z" fill="#a0a0a6"/>
</svg>
<div class="t" style="left:996.5px;top:136.5px;font-size:7.6px;line-height:8.7px;color:#1c1cc0;font-weight:bold;letter-spacing:0.1px">NOSOTROS</div>
<div class="abs" style="left:947.4px;top:194.4px;width:15.0px;height:3.12px;overflow:hidden;white-space:nowrap;font-size:2.60px;line-height:3.12px;font-weight:normal;color:#333;opacity:1.00">maquinaria de empaque con impacto global para la industria de alimentos bebidas y productos químicos ofrecemos soluciones integrales de ingeniería diseño fabric</div>
<div class="abs" style="left:947.4px;top:198.5px;width:55.0px;height:5.04px;overflow:hidden;white-space:nowrap;font-size:4.20px;line-height:5.04px;font-weight:bold;color:#3a3ab4;opacity:1.00">bal para la industria de alimentos bebidas y productos químicos ofrecemos soluciones integrales de ingeniería diseño fabricación instalación y mantenimiento de </div>
<div class="abs" style="left:947.4px;top:202.8px;width:52.2px;height:5.04px;overflow:hidden;white-space:nowrap;font-size:4.20px;line-height:5.04px;font-weight:bold;color:#3a3ab4;opacity:1.00">bidas y productos químicos ofrecemos soluciones integrales de ingeniería diseño fabricación instalación y mantenimiento de equipos industriales con tecnología d</div>
<div class="abs" style="left:947.4px;top:210.1px;width:62.0px;height:2.76px;overflow:hidden;white-space:nowrap;font-size:2.30px;line-height:2.76px;font-weight:normal;color:#62626c;opacity:1.00">soluciones integrales de ingeniería diseño fabricación instalación y mantenimiento de equipos industriales con tecnología de vanguardia calidad certificada y un</div>
<div class="abs" style="left:947.4px;top:212.4px;width:62.0px;height:2.76px;overflow:hidden;white-space:nowrap;font-size:2.30px;line-height:2.76px;font-weight:normal;color:#62626c;opacity:1.00">iseño fabricación instalación y mantenimiento de equipos industriales con tecnología de vanguardia calidad certificada y un equipo comprometido con la productiv</div>
<div class="abs" style="left:947.4px;top:214.7px;width:62.0px;height:2.76px;overflow:hidden;white-space:nowrap;font-size:2.30px;line-height:2.76px;font-weight:normal;color:#62626c;opacity:1.00">naria de empaque con impacto global para la industria de alimentos bebidas y productos químicos ofrecemos soluciones integrales de ingeniería diseño fabricación</div>
<div class="abs" style="left:947.4px;top:217.0px;width:62.0px;height:2.76px;overflow:hidden;white-space:nowrap;font-size:2.30px;line-height:2.76px;font-weight:normal;color:#62626c;opacity:1.00">ara la industria de alimentos bebidas y productos químicos ofrecemos soluciones integrales de ingeniería diseño fabricación instalación y mantenimiento de equip</div>
<div class="abs" style="left:947.4px;top:219.3px;width:49.6px;height:2.76px;overflow:hidden;white-space:nowrap;font-size:2.30px;line-height:2.76px;font-weight:normal;color:#62626c;opacity:1.00"> y productos químicos ofrecemos soluciones integrales de ingeniería diseño fabricación instalación y mantenimiento de equipos industriales con tecnología de van</div>
<div class="abs" style="left:947.4px;top:221.6px;width:18.6px;height:2.76px;overflow:hidden;white-space:nowrap;font-size:2.30px;line-height:2.76px;font-weight:normal;color:#62626c;opacity:1.00">iones integrales de ingeniería diseño fabricación instalación y mantenimiento de equipos industriales con tecnología de vanguardia calidad certificada y un equi</div>
<div class="abs" style="left:947.4px;top:226.1px;width:62.0px;height:2.76px;overflow:hidden;white-space:nowrap;font-size:2.30px;line-height:2.76px;font-weight:normal;color:#62626c;opacity:1.00"> fabricación instalación y mantenimiento de equipos industriales con tecnología de vanguardia calidad certificada y un equipo comprometido con la productividad </div>
<div class="abs" style="left:947.4px;top:228.4px;width:62.0px;height:2.76px;overflow:hidden;white-space:nowrap;font-size:2.30px;line-height:2.76px;font-weight:normal;color:#62626c;opacity:1.00"> de empaque con impacto global para la industria de alimentos bebidas y productos químicos ofrecemos soluciones integrales de ingeniería diseño fabricación inst</div>
<div class="abs" style="left:947.4px;top:230.7px;width:62.0px;height:2.76px;overflow:hidden;white-space:nowrap;font-size:2.30px;line-height:2.76px;font-weight:normal;color:#62626c;opacity:1.00">a industria de alimentos bebidas y productos químicos ofrecemos soluciones integrales de ingeniería diseño fabricación instalación y mantenimiento de equipos in</div>
<div class="abs" style="left:947.4px;top:233.0px;width:62.0px;height:2.76px;overflow:hidden;white-space:nowrap;font-size:2.30px;line-height:2.76px;font-weight:normal;color:#62626c;opacity:1.00">oductos químicos ofrecemos soluciones integrales de ingeniería diseño fabricación instalación y mantenimiento de equipos industriales con tecnología de vanguard</div>
<div class="abs" style="left:947.4px;top:235.3px;width:62.0px;height:2.76px;overflow:hidden;white-space:nowrap;font-size:2.30px;line-height:2.76px;font-weight:normal;color:#62626c;opacity:1.00"> integrales de ingeniería diseño fabricación instalación y mantenimiento de equipos industriales con tecnología de vanguardia calidad certificada y un equipo co</div>
<div class="abs" style="left:947.4px;top:237.6px;width:62.0px;height:2.76px;overflow:hidden;white-space:nowrap;font-size:2.30px;line-height:2.76px;font-weight:normal;color:#62626c;opacity:1.00">icación instalación y mantenimiento de equipos industriales con tecnología de vanguardia calidad certificada y un equipo comprometido con la productividad de su</div>
<div class="abs" style="left:947.4px;top:239.9px;width:18.6px;height:2.76px;overflow:hidden;white-space:nowrap;font-size:2.30px;line-height:2.76px;font-weight:normal;color:#62626c;opacity:1.00">mpaque con impacto global para la industria de alimentos bebidas y productos químicos ofrecemos soluciones integrales de ingeniería diseño fabricación instalaci</div>
<div class="abs" style="left:947.4px;top:245.1px;width:62.0px;height:2.76px;overflow:hidden;white-space:nowrap;font-size:2.30px;line-height:2.76px;font-weight:normal;color:#62626c;opacity:1.00">ustria de alimentos bebidas y productos químicos ofrecemos soluciones integrales de ingeniería diseño fabricación instalación y mantenimiento de equipos industr</div>
<div class="abs" style="left:947.4px;top:247.4px;width:62.0px;height:2.76px;overflow:hidden;white-space:nowrap;font-size:2.30px;line-height:2.76px;font-weight:normal;color:#62626c;opacity:1.00">os químicos ofrecemos soluciones integrales de ingeniería diseño fabricación instalación y mantenimiento de equipos industriales con tecnología de vanguardia ca</div>
<div class="abs" style="left:947.4px;top:249.7px;width:62.0px;height:2.76px;overflow:hidden;white-space:nowrap;font-size:2.30px;line-height:2.76px;font-weight:normal;color:#62626c;opacity:1.00">grales de ingeniería diseño fabricación instalación y mantenimiento de equipos industriales con tecnología de vanguardia calidad certificada y un equipo comprom</div>
<div class="abs" style="left:947.4px;top:252.0px;width:37.2px;height:2.76px;overflow:hidden;white-space:nowrap;font-size:2.30px;line-height:2.76px;font-weight:normal;color:#62626c;opacity:1.00">ón instalación y mantenimiento de equipos industriales con tecnología de vanguardia calidad certificada y un equipo comprometido con la productividad de su plan</div>
<svg class="abs" style="left:1020.1px;top:183.6px;filter:blur(.3px)" width="36.3" height="40.9" viewBox="0 0 36.3 40.9" preserveAspectRatio="none"><rect width="36.3" height="40.9" fill="#dcdce2"/>
<path d="M2.5 4 Q6 1.5 14 2.5 L20 3 L21 30 L13 31 L12 9 L3 9Z" fill="#1e1eb4"/><path d="M17 4 L21 3 L21 30 L18 30Z" fill="#3a3a40"/>
<path d="M23 28 Q28 25 32 28 L32 33 L24 34Z" fill="#2222b8"/><rect x="24" y="33" width="10" height="6" fill="#4a4a50"/>
<ellipse cx="24" cy="39" rx="10" ry="2.5" fill="#c0c0c4"/>
<rect x="2" y="31.2" width="21" height="8.2" fill="#fff"/><rect x="7" y="34.5" width="10" height="1.2" fill="#888"/></svg>
<svg class="abs" style="left:1061px;top:183.6px;filter:blur(.3px)" width="36.2" height="40.9" viewBox="0 0 36.2 40.9" preserveAspectRatio="none"><rect width="36.2" height="40.9" fill="#8a8c90"/><rect width="36.2" height="16" fill="#d4d4d2"/>
<path d="M22 0 L36.2 0 L36.2 18 L28 14Z" fill="#2e2e30"/><rect x="8" y="7" width="5" height="12" fill="#4a4e60"/><ellipse cx="10.5" cy="8" rx="2.5" ry="2.5" fill="#3a3a3e"/>
<rect x="10" y="13" width="26.2" height="3" fill="#6a6c70"/>
<rect x="0" y="18" width="10" height="14" fill="#2a2a2c"/><rect x="14" y="18" width="14" height="14" fill="#b8babc"/><rect x="28" y="16" width="4" height="25" fill="#9a9ca0"/>
<rect x="2" y="31.2" width="21" height="8.2" fill="#fff"/><rect x="6" y="34.5" width="12" height="1.2" fill="#888"/></svg>
<svg class="abs" style="left:1020.1px;top:232.1px;filter:blur(.3px)" width="77.1" height="34.8" viewBox="0 0 77.1 34.8" preserveAspectRatio="none"><rect width="77.1" height="34.8" fill="#8e9298"/><rect width="77.1" height="10" fill="#a8acb2"/>
<path d="M4 0 L14 0 L8 20 L4 20Z" fill="#c8d0d8"/><path d="M20 2 L50 0 L50 3 L20 5Z" fill="#6a6e74"/>
<rect x="10" y="12" width="30" height="14" fill="#6e7278"/><rect x="0" y="10" width="6" height="24.8" fill="#b0b4b8"/>
<rect x="41" y="12" width="10" height="22.8" fill="#7a7e86"/><rect x="43" y="14" width="6" height="4" fill="#b8d0e8"/><rect x="43" y="21" width="7" height="10" fill="#2a3a78"/>
<rect x="30" y="24" width="4" height="5" fill="#d8c040"/>
<path d="M54 34.8 L54 14 Q56 8 63 8 Q71 10 72 20 L72 34.8Z" fill="#1e2240"/><ellipse cx="61" cy="5" rx="5" ry="5.5" fill="#c09a80"/><path d="M55 3 Q57 -1 63 0 Q67 1 67 5 Q62 2 55 5Z" fill="#1a1a1a"/>
<path d="M50 18 L56 16 L56 20 L51 21Z" fill="#c09a80"/><rect x="72" y="0" width="5.1" height="34.8" fill="#5a5e64"/>
<rect x="2" y="24.5" width="21" height="8.5" fill="#fff"/><rect x="6" y="28" width="12" height="1.2" fill="#888"/></svg>
<div class="abs" style="left:947.0px;top:286.0px;width:22.8px;height:22.7px;background:#020a24;"></div>
<svg class="abs" style="left:954.4px;top:290px" width="8" height="8" viewBox="0 0 8 8" fill="none" stroke="#d07830" stroke-width=".8"><circle cx="4" cy="3.5" r="2.5"/><path d="M2.5 6.5h3M4 1v-1M1 2l-1-.5M7 2l1-.5"/></svg>
<div class="abs" style="left:950.0px;top:300.3px;width:16.8px;height:3.60px;overflow:hidden;white-space:nowrap;font-size:3.00px;line-height:3.60px;font-weight:bold;color:#e08030;opacity:1.00">e con impacto global para la industria de alimentos bebidas y productos químicos ofrecemos soluciones integrales de ingeniería diseño fabricación instalación y </div>
<div class="abs" style="left:971.0px;top:286.0px;width:23.4px;height:22.7px;background:#020a24;"></div>
<svg class="abs" style="left:978.7px;top:290px" width="8" height="8" viewBox="0 0 8 8" fill="none" stroke="#d07830" stroke-width=".8"><circle cx="4" cy="3.5" r="2.5"/><path d="M2.5 6.5h3M4 1v-1M1 2l-1-.5M7 2l1-.5"/></svg>
<div class="abs" style="left:974.0px;top:300.3px;width:17.4px;height:3.60px;overflow:hidden;white-space:nowrap;font-size:3.00px;line-height:3.60px;font-weight:bold;color:#e08030;opacity:1.00">a de alimentos bebidas y productos químicos ofrecemos soluciones integrales de ingeniería diseño fabricación instalación y mantenimiento de equipos industriales</div>
<div class="abs" style="left:995.7px;top:286.0px;width:23.0px;height:22.7px;background:#020a24;"></div>
<svg class="abs" style="left:1003.2px;top:290px" width="8" height="8" viewBox="0 0 8 8" fill="none" stroke="#d07830" stroke-width=".8"><circle cx="4" cy="3.5" r="2.5"/><path d="M2.5 6.5h3M4 1v-1M1 2l-1-.5M7 2l1-.5"/></svg>
<div class="abs" style="left:998.7px;top:300.3px;width:17.0px;height:3.60px;overflow:hidden;white-space:nowrap;font-size:3.00px;line-height:3.60px;font-weight:bold;color:#e08030;opacity:1.00">ímicos ofrecemos soluciones integrales de ingeniería diseño fabricación instalación y mantenimiento de equipos industriales con tecnología de vanguardia calidad</div>
<div class="abs" style="left:1025.7px;top:288.0px;width:49.3px;height:5.04px;overflow:hidden;white-space:nowrap;font-size:4.20px;line-height:5.04px;font-weight:bold;color:#3a3ab4;opacity:1.00">s de ingeniería diseño fabricación instalación y mantenimiento de equipos industriales con tecnología de vanguardia calidad certificada y un equipo comprometido</div>
<div class="abs" style="left:1025.7px;top:292.2px;width:58.0px;height:5.04px;overflow:hidden;white-space:nowrap;font-size:4.20px;line-height:5.04px;font-weight:bold;color:#3a3ab4;opacity:1.00">novación en maquinaria de empaque con impacto global para la industria de alimentos bebidas y productos químicos ofrecemos soluciones integrales de ingeniería d</div>
<div class="abs" style="left:1025.7px;top:298.1px;width:60.0px;height:2.76px;overflow:hidden;white-space:nowrap;font-size:2.30px;line-height:2.76px;font-weight:normal;color:#62626c;opacity:1.00"> impacto global para la industria de alimentos bebidas y productos químicos ofrecemos soluciones integrales de ingeniería diseño fabricación instalación y mante</div>
<div class="abs" style="left:1025.7px;top:300.4px;width:30.0px;height:2.76px;overflow:hidden;white-space:nowrap;font-size:2.30px;line-height:2.76px;font-weight:normal;color:#62626c;opacity:1.00">alimentos bebidas y productos químicos ofrecemos soluciones integrales de ingeniería diseño fabricación instalación y mantenimiento de equipos industriales con </div>
<div class="abs" style="left:899.4px;top:335.0px;width:239.9px;height:100.0px;background:#020a24;"></div>
<svg class="abs" style="left:1019.4px;top:329px;filter:blur(.3px)" width="118.7" height="97.5" viewBox="0 0 118.7 97.5" preserveAspectRatio="none">
<rect width="118.7" height="97.5" fill="#cfcac0"/>
<rect x="0" y="0" width="30" height="97.5" fill="#d6d2ca"/>
<rect x="0" y="20" width="22" height="2" fill="#a8a49c"/><rect x="0" y="46" width="22" height="2" fill="#a8a49c"/><rect x="0" y="70" width="22" height="2" fill="#9a968e"/>
<rect x="0" y="72" width="25" height="25.5" fill="#5a5850"/>
<rect x="2" y="58" width="18" height="6" fill="#3a5aa8"/>
<path d="M14 25 Q22 22 27 30 L27 80 L16 75Z" fill="#2a2a30"/>
<rect x="25" y="0" width="12" height="40" fill="#a09880"/>
<path d="M34 0 L106 0 L106 55 L90 58 L60 30 L34 20Z" fill="#2b5bd0"/>
<path d="M40 8 L100 8 L100 12 L40 12Z" fill="#1e46b0"/>
<rect x="82" y="0" width="4" height="70" fill="#2a4aa0"/>
<rect x="104" y="0" width="14.7" height="97.5" fill="#d8d2c4"/>
<rect x="106" y="30" width="3" height="30" fill="#3a9a6a"/>
<rect x="96" y="0" width="6" height="40" fill="#e0e0e0"/>
<path d="M22 42 Q28 32 45 32 L62 34 Q74 40 76 60 L76 97.5 L26 97.5 L22 70Z" fill="#1e2436"/>
<path d="M22 50 L30 48 L33 95 L24 95Z" fill="#c08a70"/>
<ellipse cx="50" cy="21" rx="10" ry="14" fill="#c08f78"/>
<path d="M39 15 Q42 4 52 5 Q61 6 61 16 Q56 11 50 11 Q44 11 39 17Z" fill="#b4b4b4"/>
<path d="M62 50 Q70 42 84 45 Q104 50 110 70 L112 97.5 L64 97.5Z" fill="#1c2438"/>
<ellipse cx="76" cy="33" rx="10" ry="14" fill="#c89a80"/>
<path d="M64 25 Q66 14 78 15 Q90 16 92 30 Q86 23 78 22 Q70 24 64 28Z" fill="#1e1a18"/>
<path d="M52 84 L108 86 L108 97.5 L55 97.5Z" fill="#c08a70"/>
<path d="M15.6 68.5 L48 83.5 L45.6 87 L14.4 71.5Z" fill="#e8eaf0"/>
<path d="M55 55 l6 0 l0 3 l-6 0z" fill="#8ab0d8"/>
</svg>
<div class="abs" style="left:917.0px;top:352.4px;width:17.0px;height:3.12px;overflow:hidden;white-space:nowrap;font-size:2.60px;line-height:3.12px;font-weight:normal;color:#d8dce4;opacity:1.00">s ofrecemos soluciones integrales de ingeniería diseño fabricación instalación y mantenimiento de equipos industriales con tecnología de vanguardia calidad cert</div>
<div class="abs" style="left:917.0px;top:356.5px;width:67.0px;height:5.04px;overflow:hidden;white-space:nowrap;font-size:4.20px;line-height:5.04px;font-weight:bold;color:#d8782e;opacity:1.00">ingeniería diseño fabricación instalación y mantenimiento de equipos industriales con tecnología de vanguardia calidad certificada y un equipo comprometido con </div>
<div class="abs" style="left:917.0px;top:360.8px;width:60.3px;height:5.04px;overflow:hidden;white-space:nowrap;font-size:4.20px;line-height:5.04px;font-weight:bold;color:#d8782e;opacity:1.00">ión en maquinaria de empaque con impacto global para la industria de alimentos bebidas y productos químicos ofrecemos soluciones integrales de ingeniería diseño</div>
<div class="abs" style="left:917.0px;top:368.1px;width:80.0px;height:2.76px;overflow:hidden;white-space:nowrap;font-size:2.30px;line-height:2.76px;font-weight:normal;color:#d4d8e4;opacity:1.00">cto global para la industria de alimentos bebidas y productos químicos ofrecemos soluciones integrales de ingeniería diseño fabricación instalación y mantenimie</div>
<div class="abs" style="left:917.0px;top:370.4px;width:80.0px;height:2.76px;overflow:hidden;white-space:nowrap;font-size:2.30px;line-height:2.76px;font-weight:normal;color:#d4d8e4;opacity:1.00">ntos bebidas y productos químicos ofrecemos soluciones integrales de ingeniería diseño fabricación instalación y mantenimiento de equipos industriales con tecno</div>
<div class="abs" style="left:917.0px;top:372.7px;width:80.0px;height:2.76px;overflow:hidden;white-space:nowrap;font-size:2.30px;line-height:2.76px;font-weight:normal;color:#d4d8e4;opacity:1.00">ecemos soluciones integrales de ingeniería diseño fabricación instalación y mantenimiento de equipos industriales con tecnología de vanguardia calidad certifica</div>
<div class="abs" style="left:917.0px;top:375.0px;width:80.0px;height:2.76px;overflow:hidden;white-space:nowrap;font-size:2.30px;line-height:2.76px;font-weight:normal;color:#d4d8e4;opacity:1.00">iería diseño fabricación instalación y mantenimiento de equipos industriales con tecnología de vanguardia calidad certificada y un equipo comprometido con la pr</div>
<div class="abs" style="left:917.0px;top:377.3px;width:24.0px;height:2.76px;overflow:hidden;white-space:nowrap;font-size:2.30px;line-height:2.76px;font-weight:normal;color:#d4d8e4;opacity:1.00">n maquinaria de empaque con impacto global para la industria de alimentos bebidas y productos químicos ofrecemos soluciones integrales de ingeniería diseño fabr</div>
<div class="abs" style="left:917.0px;top:382.1px;width:80.0px;height:2.76px;overflow:hidden;white-space:nowrap;font-size:2.30px;line-height:2.76px;font-weight:normal;color:#d4d8e4;opacity:1.00">lobal para la industria de alimentos bebidas y productos químicos ofrecemos soluciones integrales de ingeniería diseño fabricación instalación y mantenimiento d</div>
<div class="abs" style="left:917.0px;top:384.4px;width:80.0px;height:2.76px;overflow:hidden;white-space:nowrap;font-size:2.30px;line-height:2.76px;font-weight:normal;color:#d4d8e4;opacity:1.00">bebidas y productos químicos ofrecemos soluciones integrales de ingeniería diseño fabricación instalación y mantenimiento de equipos industriales con tecnología</div>
<div class="abs" style="left:917.0px;top:386.7px;width:80.0px;height:2.76px;overflow:hidden;white-space:nowrap;font-size:2.30px;line-height:2.76px;font-weight:normal;color:#d4d8e4;opacity:1.00">s soluciones integrales de ingeniería diseño fabricación instalación y mantenimiento de equipos industriales con tecnología de vanguardia calidad certificada y </div>
<div class="abs" style="left:917.0px;top:389.0px;width:80.0px;height:2.76px;overflow:hidden;white-space:nowrap;font-size:2.30px;line-height:2.76px;font-weight:normal;color:#d4d8e4;opacity:1.00"> diseño fabricación instalación y mantenimiento de equipos industriales con tecnología de vanguardia calidad certificada y un equipo comprometido con la product</div>
<div class="abs" style="left:917.0px;top:391.3px;width:48.0px;height:2.76px;overflow:hidden;white-space:nowrap;font-size:2.30px;line-height:2.76px;font-weight:normal;color:#d4d8e4;opacity:1.00">uinaria de empaque con impacto global para la industria de alimentos bebidas y productos químicos ofrecemos soluciones integrales de ingeniería diseño fabricaci</div>
<div class="abs" style="left:917.0px;top:396.1px;width:80.0px;height:2.76px;overflow:hidden;white-space:nowrap;font-size:2.30px;line-height:2.76px;font-weight:normal;color:#d4d8e4;opacity:1.00"> para la industria de alimentos bebidas y productos químicos ofrecemos soluciones integrales de ingeniería diseño fabricación instalación y mantenimiento de equ</div>
<div class="abs" style="left:917.0px;top:398.4px;width:56.0px;height:2.76px;overflow:hidden;white-space:nowrap;font-size:2.30px;line-height:2.76px;font-weight:normal;color:#d4d8e4;opacity:1.00">as y productos químicos ofrecemos soluciones integrales de ingeniería diseño fabricación instalación y mantenimiento de equipos industriales con tecnología de v</div>
<div class="abs" style="left:917.0px;top:409.0px;width:18.6px;height:6.0px;background:#e8761e;"></div>
<div class="abs" style="left:1006.0px;top:448.2px;width:26.0px;height:3.12px;overflow:hidden;white-space:nowrap;font-size:2.60px;line-height:3.12px;font-weight:normal;color:#333;opacity:1.00">uciones integrales de ingeniería diseño fabricación instalación y mantenimiento de equipos industriales con tecnología de vanguardia calidad certificada y un eq</div>
<div class="abs" style="left:962.0px;top:453.5px;width:115.0px;height:5.04px;overflow:hidden;white-space:nowrap;font-size:4.20px;line-height:5.04px;font-weight:bold;color:#3a3ab4;opacity:1.00">ño fabricación instalación y mantenimiento de equipos industriales con tecnología de vanguardia calidad certificada y un equipo comprometido con la productivida</div>
<div class="abs" style="left:993.0px;top:457.7px;width:54.0px;height:5.04px;overflow:hidden;white-space:nowrap;font-size:4.20px;line-height:5.04px;font-weight:bold;color:#3a3ab4;opacity:1.00">ia de empaque con impacto global para la industria de alimentos bebidas y productos químicos ofrecemos soluciones integrales de ingeniería diseño fabricación in</div>
<div class="abs" style="left:1002px;top:459.5px;width:0;height:0"></div>
<div class="abs" style="left:985.0px;top:465.4px;width:68.0px;height:3.12px;overflow:hidden;white-space:nowrap;font-size:2.60px;line-height:3.12px;font-weight:normal;color:#62626c;opacity:1.00"> la industria de alimentos bebidas y productos químicos ofrecemos soluciones integrales de ingeniería diseño fabricación instalación y mantenimiento de equipos </div>
<div class="abs" style="left:985.0px;top:467.9px;width:68.0px;height:3.12px;overflow:hidden;white-space:nowrap;font-size:2.60px;line-height:3.12px;font-weight:normal;color:#62626c;opacity:1.00">productos químicos ofrecemos soluciones integrales de ingeniería diseño fabricación instalación y mantenimiento de equipos industriales con tecnología de vangua</div>
<div class="abs" style="left:1002.0px;top:470.4px;width:34.0px;height:3.12px;overflow:hidden;white-space:nowrap;font-size:2.60px;line-height:3.12px;font-weight:normal;color:#62626c;opacity:1.00">es integrales de ingeniería diseño fabricación instalación y mantenimiento de equipos industriales con tecnología de vanguardia calidad certificada y un equipo </div>
<svg class="abs" style="left:969.5px;top:480px;filter:blur(.3px)" width="100" height="66.8" viewBox="0 0 100 66.8" preserveAspectRatio="none"><rect width="100" height="66.8" fill="#dcdde2"/>
<rect x="70" y="0" width="30" height="13" fill="#bcbdc2"/><rect x="0" y="0" width="70" height="3" fill="#e8e8ec"/>
<rect x="22" y="5" width="11" height="9" fill="#8e9096"/><rect x="56" y="5" width="11" height="9" fill="#8e9096"/>
<rect x="50" y="8" width="4" height="4" fill="#2a70d0"/><rect x="0" y="0" width="5" height="16" fill="#e4c0b0"/>
<rect x="0" y="44" width="100" height="22.8" fill="#d6d6d8"/>
<rect x="0" y="31" width="20" height="6" fill="#9a9a9e"/><rect x="3" y="36" width="2" height="20" fill="#5a5a60"/>
<path d="M4.5 48 L4.5 16 Q10 12 15.5 16 L15.5 48Z" fill="#20243a"/><path d="M11.5 30 L11.5 17 Q15.5 13 19.5 17 L19.5 30Z" fill="#4a3028"/><path d="M18.5 34 L18.5 19 Q22 15 25.5 19 L25.5 34Z" fill="#2a2e48"/><path d="M21.5 55 L21.5 20 Q26 16 30.5 20 L30.5 55Z" fill="#2a4a8a"/><path d="M30.5 30 L30.5 19 Q34 15 37.5 19 L37.5 30Z" fill="#2a3050"/><path d="M33.5 34 L33.5 22 Q38 18 42.5 22 L42.5 34Z" fill="#c83a3a"/><path d="M41.5 30 L41.5 20 Q45 16 48.5 20 L48.5 30Z" fill="#1e2644"/><path d="M46.0 36 L46.0 23 Q50 19 54.0 23 L54.0 36Z" fill="#1e2644"/><path d="M52.0 36 L52.0 21 Q56 17 60.0 21 L60.0 36Z" fill="#20284a"/><path d="M58.0 34 L58.0 23 Q62 19 66.0 23 L66.0 34Z" fill="#1e2644"/><path d="M65.0 36 L65.0 24 Q69 20 73.0 24 L73.0 36Z" fill="#222a48"/><path d="M72.0 36 L72.0 25 Q76 21 80.0 25 L80.0 36Z" fill="#1e2644"/><path d="M80.0 36 L80.0 22 Q84 18 88.0 22 L88.0 36Z" fill="#1c2240"/><path d="M86.0 42 L86.0 19 Q91 15 96.0 19 L96.0 42Z" fill="#15161e"/>
<rect x="24" y="40" width="6" height="16" fill="#2a4a8a"/><rect x="23" y="55" width="3" height="3" fill="#222"/><rect x="28" y="55" width="3" height="3" fill="#222"/>
<path d="M19.5 50 L19.5 34 Q24 30 28.5 34 L28.5 50Z" fill="#1e2644"/><path d="M28.5 48 L28.5 35 Q33 31 37.5 35 L37.5 48Z" fill="#1e2644"/><path d="M38.5 50 L38.5 36 Q43 32 47.5 36 L47.5 50Z" fill="#1f2848"/><path d="M47.5 50 L47.5 36 Q52 32 56.5 36 L56.5 50Z" fill="#1e2644"/><path d="M57.0 52 L57.0 37 Q62 33 67.0 37 L67.0 52Z" fill="#1e2a50"/><path d="M70.0 52 L70.0 38 Q75 34 80.0 38 L80.0 52Z" fill="#1e2644"/>
<path d="M22 48 L30 46 L34 52 L26 54Z" fill="#3a4a70"/><path d="M40 48 L50 47 L52 53 L42 55Z" fill="#2a3a60"/><path d="M56 50 L68 49 L70 54 L58 56Z" fill="#2a3a60"/>
<rect x="70" y="44" width="12" height="12" fill="#c8bca0"/><rect x="88" y="40" width="10" height="16" fill="#c8bca0"/><rect x="89" y="56" width="3" height="4" fill="#222"/><rect x="95" y="56" width="3" height="4" fill="#222"/>
<rect x="8" y="46" width="5" height="9" fill="#222428"/>
<ellipse cx="10" cy="9" rx="2.3" ry="2.8" fill="#a07a64"/><path d="M7.7 8.2 Q10 5.4 12.3 8.2Z" fill="#1a1614"/><ellipse cx="15.5" cy="10" rx="2.3" ry="2.8" fill="#a07a64"/><path d="M13.2 9.2 Q15.5 6.4 17.8 9.2Z" fill="#1a1614"/><ellipse cx="22" cy="12" rx="2.3" ry="2.8" fill="#a07a64"/><path d="M19.7 11.2 Q22 8.4 24.3 11.2Z" fill="#1a1614"/><ellipse cx="26" cy="13" rx="2.3" ry="2.8" fill="#a07a64"/><path d="M23.7 12.2 Q26 9.4 28.3 12.2Z" fill="#1a1614"/><ellipse cx="34" cy="12" rx="2.3" ry="2.8" fill="#a07a64"/><path d="M31.7 11.2 Q34 8.4 36.3 11.2Z" fill="#1a1614"/><ellipse cx="38" cy="15" rx="2.3" ry="2.8" fill="#a07a64"/><path d="M35.7 14.2 Q38 11.4 40.3 14.2Z" fill="#1a1614"/><ellipse cx="45" cy="13" rx="2.3" ry="2.8" fill="#a07a64"/><path d="M42.7 12.2 Q45 9.4 47.3 12.2Z" fill="#1a1614"/><ellipse cx="50" cy="16" rx="2.3" ry="2.8" fill="#a07a64"/><path d="M47.7 15.2 Q50 12.4 52.3 15.2Z" fill="#1a1614"/><ellipse cx="56" cy="14" rx="2.3" ry="2.8" fill="#a07a64"/><path d="M53.7 13.2 Q56 10.4 58.3 13.2Z" fill="#1a1614"/><ellipse cx="62" cy="16" rx="2.3" ry="2.8" fill="#a07a64"/><path d="M59.7 15.2 Q62 12.4 64.3 15.2Z" fill="#1a1614"/><ellipse cx="69" cy="17" rx="2.3" ry="2.8" fill="#a07a64"/><path d="M66.7 16.2 Q69 13.4 71.3 16.2Z" fill="#1a1614"/><ellipse cx="76" cy="18" rx="2.3" ry="2.8" fill="#a07a64"/><path d="M73.7 17.2 Q76 14.4 78.3 17.2Z" fill="#1a1614"/><ellipse cx="84" cy="15" rx="2.3" ry="2.8" fill="#a07a64"/><path d="M81.7 14.2 Q84 11.4 86.3 14.2Z" fill="#1a1614"/><ellipse cx="91" cy="12" rx="2.3" ry="2.8" fill="#a07a64"/><path d="M88.7 11.2 Q91 8.4 93.3 11.2Z" fill="#1a1614"/><ellipse cx="24" cy="27" rx="2.3" ry="2.8" fill="#a07a64"/><path d="M21.7 26.2 Q24 23.4 26.3 26.2Z" fill="#1a1614"/><ellipse cx="33" cy="28" rx="2.3" ry="2.8" fill="#a07a64"/><path d="M30.7 27.2 Q33 24.4 35.3 27.2Z" fill="#1a1614"/><ellipse cx="43" cy="29" rx="2.3" ry="2.8" fill="#a07a64"/><path d="M40.7 28.2 Q43 25.4 45.3 28.2Z" fill="#1a1614"/><ellipse cx="52" cy="29" rx="2.3" ry="2.8" fill="#a07a64"/><path d="M49.7 28.2 Q52 25.4 54.3 28.2Z" fill="#1a1614"/><ellipse cx="62" cy="30" rx="2.3" ry="2.8" fill="#a07a64"/><path d="M59.7 29.2 Q62 26.4 64.3 29.2Z" fill="#1a1614"/><ellipse cx="75" cy="31" rx="2.3" ry="2.8" fill="#a07a64"/><path d="M72.7 30.2 Q75 27.4 77.3 30.2Z" fill="#1a1614"/>
</svg>
<div class="abs" style="left:939.0px;top:584.8px;width:14.0px;height:3.60px;overflow:hidden;white-space:nowrap;font-size:3.00px;line-height:3.60px;font-weight:bold;color:#3a3ab4;opacity:1.00">bricación instalación y mantenimiento de equipos industriales con tecnología de vanguardia calidad certificada y un equipo comprometido con la productividad de </div>
<div class="abs" style="left:939.0px;top:587.8px;width:14.0px;height:3.60px;overflow:hidden;white-space:nowrap;font-size:3.00px;line-height:3.60px;font-weight:bold;color:#3a3ab4;opacity:1.00"> empaque con impacto global para la industria de alimentos bebidas y productos químicos ofrecemos soluciones integrales de ingeniería diseño fabricación instala</div>
<div class="abs" style="left:939.0px;top:593.5px;width:24.0px;height:3.12px;overflow:hidden;white-space:nowrap;font-size:2.60px;line-height:3.12px;font-weight:normal;color:#62626c;opacity:1.00">ndustria de alimentos bebidas y productos químicos ofrecemos soluciones integrales de ingeniería diseño fabricación instalación y mantenimiento de equipos indus</div>
<div class="abs" style="left:939.0px;top:596.2px;width:24.0px;height:3.12px;overflow:hidden;white-space:nowrap;font-size:2.60px;line-height:3.12px;font-weight:normal;color:#62626c;opacity:1.00">ctos químicos ofrecemos soluciones integrales de ingeniería diseño fabricación instalación y mantenimiento de equipos industriales con tecnología de vanguardia </div>
<div class="abs" style="left:939.0px;top:598.9px;width:21.6px;height:3.12px;overflow:hidden;white-space:nowrap;font-size:2.60px;line-height:3.12px;font-weight:normal;color:#62626c;opacity:1.00">tegrales de ingeniería diseño fabricación instalación y mantenimiento de equipos industriales con tecnología de vanguardia calidad certificada y un equipo compr</div>
<div class="abs" style="left:939.0px;top:601.6px;width:24.0px;height:3.12px;overflow:hidden;white-space:nowrap;font-size:2.60px;line-height:3.12px;font-weight:normal;color:#62626c;opacity:1.00">ción instalación y mantenimiento de equipos industriales con tecnología de vanguardia calidad certificada y un equipo comprometido con la productividad de su pl</div>
<div class="abs" style="left:939.0px;top:604.3px;width:21.6px;height:3.12px;overflow:hidden;white-space:nowrap;font-size:2.60px;line-height:3.12px;font-weight:normal;color:#62626c;opacity:1.00">que con impacto global para la industria de alimentos bebidas y productos químicos ofrecemos soluciones integrales de ingeniería diseño fabricación instalación </div>
<div class="abs" style="left:939.0px;top:607.0px;width:9.6px;height:3.12px;overflow:hidden;white-space:nowrap;font-size:2.60px;line-height:3.12px;font-weight:normal;color:#62626c;opacity:1.00">ria de alimentos bebidas y productos químicos ofrecemos soluciones integrales de ingeniería diseño fabricación instalación y mantenimiento de equipos industrial</div>
<div class="abs" style="left:973px;top:574px;width:30.0px;height:45.0px;background:linear-gradient(180deg,#e4caa4,#dac2a0)"></div>
<div class="abs" style="left:980.0px;top:589.0px;width:16.0px;height:15.5px;background:#dcb88c;"></div>
<div class="abs" style="left:983.0px;top:594.0px;width:10.0px;height:6.0px;background:#c8682a;opacity:.8"></div>
<div class="abs" style="left:983.0px;top:590.5px;width:10.0px;height:1.7px;background:#d07030;opacity:.7"></div>
<div class="abs" style="left:974.2px;top:582.2px;width:27.6px;height:27.6px;border-radius:50%;border:2.7px solid #16303c"></div>
<div class="abs" style="left:975.5px;top:609.3px;width:25.0px;height:8.2px;background:#fff;"></div>
<div class="abs" style="left:979.8px;top:610.6px;width:16.4px;height:5.5px;background:#f08232;"></div>
<div class="abs" style="left:1006px;top:578px;width:29.6px;height:44.4px;background:linear-gradient(180deg,#e4caa4,#dac2a0)"></div>
<div class="abs" style="left:1012.8px;top:593.0px;width:16.0px;height:15.5px;background:#dcb88c;"></div>
<div class="abs" style="left:1015.8px;top:598.0px;width:10.0px;height:6.0px;background:#c8682a;opacity:.8"></div>
<div class="abs" style="left:1015.8px;top:594.5px;width:10.0px;height:1.7px;background:#d07030;opacity:.7"></div>
<div class="abs" style="left:1007.0px;top:586.2px;width:27.6px;height:27.6px;border-radius:50%;border:2.7px solid #16303c"></div>
<div class="abs" style="left:1008.5px;top:612.7px;width:24.6px;height:8.2px;background:#fff;"></div>
<div class="abs" style="left:1012.8px;top:614.0px;width:16.0px;height:5.5px;background:#f08232;"></div>
<div class="abs" style="left:1038px;top:574px;width:30.0px;height:45.0px;background:linear-gradient(180deg,#e4caa4,#dac2a0)"></div>
<div class="abs" style="left:1045.0px;top:589.0px;width:16.0px;height:15.5px;background:#dcb88c;"></div>
<div class="abs" style="left:1048.0px;top:594.0px;width:10.0px;height:6.0px;background:#c8682a;opacity:.8"></div>
<div class="abs" style="left:1048.0px;top:590.5px;width:10.0px;height:1.7px;background:#d07030;opacity:.7"></div>
<div class="abs" style="left:1039.2px;top:582.2px;width:27.6px;height:27.6px;border-radius:50%;border:2.7px solid #16303c"></div>
<div class="abs" style="left:1040.5px;top:609.3px;width:25.0px;height:8.2px;background:#fff;"></div>
<div class="abs" style="left:1044.8px;top:610.6px;width:16.4px;height:5.5px;background:#f08232;"></div>
<div class="abs" style="left:1071px;top:578px;width:29.6px;height:44.4px;background:linear-gradient(180deg,#e4caa4,#dac2a0)"></div>
<div class="abs" style="left:1077.8px;top:593.0px;width:16.0px;height:15.5px;background:#dcb88c;"></div>
<div class="abs" style="left:1080.8px;top:598.0px;width:10.0px;height:6.0px;background:#c8682a;opacity:.8"></div>
<div class="abs" style="left:1080.8px;top:594.5px;width:10.0px;height:1.7px;background:#d07030;opacity:.7"></div>
<div class="abs" style="left:1072.0px;top:586.2px;width:27.6px;height:27.6px;border-radius:50%;border:2.7px solid #16303c"></div>
<div class="abs" style="left:1073.5px;top:612.7px;width:24.6px;height:8.2px;background:#fff;"></div>
<div class="abs" style="left:1077.8px;top:614.0px;width:16.0px;height:5.5px;background:#f08232;"></div>
<svg class="abs" style="left:900px;top:637.5px" width="47" height="26.5" viewBox="0 0 47 26.5"><path d="M29.78,18.02 L32.39,18.83 L32.26,20.26 L29.54,20.57 L29.27,21.74 L31.56,23.23 L31.05,24.57 L28.35,24.13 L27.77,25.19 L29.58,27.24 L28.72,28.39 L26.24,27.25 L25.40,28.11 L26.59,30.56 L25.45,31.44 L23.38,29.67 L22.33,30.27 L22.81,32.96 L21.48,33.50 L19.96,31.24 L18.79,31.53 L18.53,34.25 L17.10,34.41 L16.24,31.82 L15.04,31.79 L14.05,34.34 L12.64,34.11 L12.51,31.38 L11.36,31.02 L9.72,33.21 L8.42,32.61 L9.04,29.95 L8.02,29.30 L5.86,30.96 L4.77,30.03 L6.08,27.63 L5.27,26.73 L2.74,27.75 L1.94,26.56 L3.85,24.60 L3.32,23.52 L0.61,23.82 L0.16,22.45 L2.52,21.09 L2.31,19.90 L-0.39,19.45 L-0.45,18.02 L2.20,17.34 L2.31,16.14 L-0.17,14.99 L0.16,13.59 L2.89,13.65 L3.32,12.52 L1.25,10.74 L1.94,9.48 L4.55,10.28 L5.27,9.31 L3.76,7.04 L4.77,6.01 L7.07,7.48 L8.02,6.74 L7.18,4.15 L8.42,3.43 L10.24,5.47 L11.36,5.02 L11.25,2.29 L12.64,1.93 L13.84,4.39 L15.04,4.25 L15.67,1.59 L17.10,1.63 L17.60,4.31 L18.79,4.51 L20.11,2.12 L21.48,2.54 L21.24,5.26 L22.33,5.77 L24.25,3.82 L25.45,4.60 L24.48,7.15 L25.40,7.93 L27.77,6.58 L28.72,7.65 L27.10,9.85 L27.77,10.85 L30.42,10.18 L31.05,11.47 L28.89,13.15 L29.27,14.30 L32.00,14.37 L32.26,15.78 L29.73,16.82Z" fill="#c6c6c6"/><circle cx="15.98" cy="18.02" r="10.19" fill="#bdbdbd" stroke="#a9a9a9" stroke-width="1.31"/><circle cx="15.98" cy="18.02" r="6.57" fill="#cfcfcf" stroke="#b0b0b0" stroke-width="0.99"/><ellipse cx="16.80" cy="18.02" rx="3.29" ry="4.60" fill="#fff"/><path d="M47.34,20.14 L49.35,20.99 L49.16,22.48 L47.01,22.80 L46.62,24.00 L48.19,25.51 L47.47,26.84 L45.35,26.36 L44.56,27.34 L45.47,29.32 L44.33,30.29 L42.52,29.08 L41.42,29.70 L41.56,31.88 L40.14,32.37 L38.89,30.59 L37.65,30.78 L36.99,32.86 L35.49,32.81 L34.97,30.69 L33.74,30.42 L32.37,32.12 L30.99,31.53 L31.27,29.37 L30.22,28.67 L28.34,29.76 L27.26,28.71 L28.30,26.80 L27.58,25.76 L25.42,26.10 L24.80,24.73 L26.46,23.33 L26.16,22.10 L24.03,21.64 L23.94,20.14 L26.00,19.43 L26.16,18.18 L24.34,16.98 L24.80,15.55 L26.98,15.63 L27.58,14.52 L26.31,12.74 L27.26,11.57 L29.26,12.43 L30.22,11.61 L29.69,9.50 L30.99,8.75 L32.54,10.28 L33.74,9.86 L34.00,7.70 L35.49,7.47 L36.38,9.46 L37.65,9.50 L38.67,7.58 L40.14,7.91 L40.26,10.08 L41.42,10.58 L43.07,9.16 L44.33,9.99 L43.65,12.06 L44.56,12.94 L46.61,12.21 L47.47,13.44 L46.10,15.13 L46.62,16.28 L48.80,16.34 L49.16,17.80 L47.27,18.88Z" fill="#c6c6c6"/><circle cx="36.660000000000004" cy="20.14" r="7.89" fill="#bdbdbd" stroke="#a9a9a9" stroke-width="1.02"/><circle cx="36.660000000000004" cy="20.14" r="5.09" fill="#cfcfcf" stroke="#b0b0b0" stroke-width="0.76"/><ellipse cx="37.30" cy="20.14" rx="2.54" ry="3.56" fill="#fff"/></svg>
<svg class="abs" style="left:1093px;top:637px" width="46" height="26" viewBox="0 0 46 26"><path d="M23.34,14.30 L25.39,15.12 L25.22,16.56 L23.03,16.87 L22.68,18.03 L24.33,19.50 L23.68,20.80 L21.52,20.34 L20.79,21.32 L21.83,23.27 L20.78,24.26 L18.90,23.09 L17.88,23.76 L18.20,25.94 L16.87,26.52 L15.50,24.78 L14.32,25.05 L13.87,27.22 L12.42,27.30 L11.73,25.20 L10.52,25.05 L9.36,26.94 L7.97,26.52 L8.05,24.31 L6.96,23.76 L5.23,25.13 L4.06,24.26 L4.89,22.21 L4.05,21.32 L1.96,22.01 L1.16,20.80 L2.64,19.16 L2.16,18.03 L-0.05,17.97 L-0.38,16.56 L1.57,15.52 L1.50,14.30 L-0.55,13.48 L-0.38,12.04 L1.81,11.73 L2.16,10.57 L0.51,9.10 L1.16,7.80 L3.32,8.26 L4.05,7.28 L3.01,5.33 L4.06,4.34 L5.94,5.51 L6.96,4.84 L6.64,2.66 L7.97,2.08 L9.34,3.82 L10.52,3.55 L10.97,1.38 L12.42,1.30 L13.11,3.40 L14.32,3.55 L15.48,1.66 L16.87,2.08 L16.79,4.29 L17.88,4.84 L19.61,3.47 L20.78,4.34 L19.95,6.39 L20.79,7.28 L22.88,6.59 L23.68,7.80 L22.20,9.44 L22.68,10.57 L24.89,10.63 L25.22,12.04 L23.27,13.08Z" fill="#c6c6c6"/><circle cx="12.420000000000002" cy="14.3" r="8.06" fill="#bdbdbd" stroke="#a9a9a9" stroke-width="1.04"/><circle cx="12.420000000000002" cy="14.3" r="5.20" fill="#cfcfcf" stroke="#b0b0b0" stroke-width="0.78"/><ellipse cx="13.07" cy="14.3" rx="2.60" ry="3.64" fill="#fff"/><path d="M42.59,13.00 L44.90,13.82 L44.74,15.28 L42.31,15.59 L41.99,16.78 L43.93,18.27 L43.33,19.61 L40.93,19.16 L40.25,20.19 L41.64,22.21 L40.66,23.30 L38.51,22.12 L37.55,22.89 L38.24,25.24 L36.97,25.97 L35.29,24.19 L34.14,24.63 L34.07,27.08 L32.64,27.38 L31.59,25.17 L30.36,25.23 L29.54,27.54 L28.08,27.38 L27.77,24.95 L26.58,24.63 L25.09,26.57 L23.75,25.97 L24.20,23.57 L23.17,22.89 L21.15,24.28 L20.06,23.30 L21.24,21.15 L20.47,20.19 L18.12,20.88 L17.39,19.61 L19.17,17.93 L18.73,16.78 L16.28,16.71 L15.98,15.28 L18.19,14.23 L18.13,13.00 L15.82,12.18 L15.98,10.72 L18.41,10.41 L18.73,9.22 L16.79,7.73 L17.39,6.39 L19.79,6.84 L20.47,5.81 L19.08,3.79 L20.06,2.70 L22.21,3.88 L23.17,3.11 L22.48,0.76 L23.75,0.03 L25.43,1.81 L26.58,1.37 L26.65,-1.08 L28.08,-1.38 L29.13,0.83 L30.36,0.77 L31.18,-1.54 L32.64,-1.38 L32.95,1.05 L34.14,1.37 L35.63,-0.57 L36.97,0.03 L36.52,2.43 L37.55,3.11 L39.57,1.72 L40.66,2.70 L39.48,4.85 L40.25,5.81 L42.60,5.12 L43.33,6.39 L41.55,8.07 L41.99,9.22 L44.44,9.29 L44.74,10.72 L42.53,11.77Z" fill="#c6c6c6"/><circle cx="30.360000000000003" cy="13.0" r="9.03" fill="#bdbdbd" stroke="#a9a9a9" stroke-width="1.16"/><circle cx="30.360000000000003" cy="13.0" r="5.82" fill="#cfcfcf" stroke="#b0b0b0" stroke-width="0.87"/><ellipse cx="31.09" cy="13.0" rx="2.91" ry="4.08" fill="#fff"/></svg>
<div class="abs" style="left:950.0px;top:646.5px;width:140.0px;height:5.04px;overflow:hidden;white-space:nowrap;font-size:4.20px;line-height:5.04px;font-weight:bold;color:#e8904a;opacity:1.00">químicos ofrecemos soluciones integrales de ingeniería diseño fabricación instalación y mantenimiento de equipos industriales con tecnología de vanguardia calid</div>
<div class="abs" style="left:1006.0px;top:651.0px;width:30.0px;height:5.04px;overflow:hidden;white-space:nowrap;font-size:4.20px;line-height:5.04px;font-weight:bold;color:#e8904a;opacity:1.00">les de ingeniería diseño fabricación instalación y mantenimiento de equipos industriales con tecnología de vanguardia calidad certificada y un equipo comprometi</div>
<svg class="abs" style="left:1193.4px;top:111px;filter:blur(.3px)" width="240" height="59.5" viewBox="0 0 240 59.5" preserveAspectRatio="none">
<defs><linearGradient id="mh1" x1="0" y1="0" x2="1" y2="0"><stop offset="0" stop-color="#4e443c"/><stop offset=".35" stop-color="#6a5e54"/><stop offset=".65" stop-color="#5e544c"/><stop offset="1" stop-color="#2c2824"/></linearGradient>
<linearGradient id="mh2" x1="0" y1="0" x2="1" y2="0"><stop offset="0" stop-color="#6a5e56"/><stop offset=".3" stop-color="#c8b8a8"/><stop offset=".5" stop-color="#7a6656"/><stop offset=".7" stop-color="#d0c0b0"/><stop offset="1" stop-color="#5a4a40"/></linearGradient></defs>
<rect width="240" height="59.5" fill="url(#mh1)"/>
<rect x="0" y="38" width="240" height="21.5" fill="#5a4c40" opacity=".55"/>
<path d="M70 0 L160 0 L156 8 L74 8Z" fill="#2e2a28"/>
<path d="M84 8 L150 8 L148 34 L88 34Z" fill="url(#mh2)"/>
<path d="M90 34 L146 34 L138 48 L98 48Z" fill="#3a302a"/>
<path d="M106 48 L130 48 L128 59.5 L108 59.5Z" fill="#8a6a50"/>
<path d="M26 0 Q45 22 75 26 Q95 28 112 24" stroke="#141418" stroke-width="6.5" fill="none" stroke-dasharray="4 1"/>
<path d="M26 0 Q34 10 44 17" stroke="#2c56a8" stroke-width="6.5" fill="none" stroke-dasharray="4 1"/>
<path d="M160 40 L240 30 L240 59.5 L150 59.5Z" fill="#3e3e44" opacity=".85"/>
<path d="M0 48 L100 50 L100 59.5 L0 59.5Z" fill="#8a7e76" opacity=".5"/>
<rect x="188" y="30" width="12" height="3" rx="1.5" fill="#e8a050"/>
<line x1="114.7" y1="43.5" x2="57.1" y2="39.1" stroke="#e88a30" stroke-width="0.53" opacity="0.95"/><line x1="111.4" y1="42.9" x2="133.6" y2="41.2" stroke="#ffd890" stroke-width="0.32" opacity="0.78"/><line x1="133.4" y1="48.3" x2="91.4" y2="32.9" stroke="#f8c060" stroke-width="0.32" opacity="0.93"/><line x1="113.7" y1="43.4" x2="59.8" y2="23.9" stroke="#f8c060" stroke-width="0.34" opacity="0.79"/><line x1="110.6" y1="43.0" x2="52.4" y2="22.1" stroke="#ffd890" stroke-width="0.57" opacity="0.71"/><line x1="114.4" y1="47.9" x2="147.7" y2="40.0" stroke="#f8c060" stroke-width="0.58" opacity="0.62"/><line x1="122.2" y1="47.3" x2="154.4" y2="32.1" stroke="#f0a040" stroke-width="0.35" opacity="0.71"/><line x1="127.7" y1="43.5" x2="214.3" y2="20.2" stroke="#f0a040" stroke-width="0.61" opacity="0.79"/><line x1="131.3" y1="45.1" x2="186.1" y2="24.4" stroke="#ffd890" stroke-width="0.33" opacity="0.55"/><line x1="113.1" y1="49.0" x2="42.3" y2="44.0" stroke="#ffd890" stroke-width="0.41" opacity="0.69"/><line x1="125.1" y1="42.2" x2="186.1" y2="28.1" stroke="#ffd890" stroke-width="0.32" opacity="0.88"/><line x1="108.9" y1="44.5" x2="151.0" y2="18.3" stroke="#f8c060" stroke-width="0.48" opacity="0.77"/><line x1="131.5" y1="50.2" x2="211.8" y2="13.7" stroke="#ffd890" stroke-width="0.68" opacity="0.58"/><line x1="110.3" y1="44.3" x2="28.9" y2="40.7" stroke="#f8c060" stroke-width="0.41" opacity="0.50"/><line x1="117.6" y1="45.7" x2="170.5" y2="11.1" stroke="#f0a040" stroke-width="0.48" opacity="0.94"/><line x1="133.6" y1="48.8" x2="177.6" y2="37.5" stroke="#ffd890" stroke-width="0.55" opacity="0.53"/><line x1="107.0" y1="44.1" x2="44.5" y2="38.1" stroke="#f0a040" stroke-width="0.30" opacity="0.58"/><line x1="108.0" y1="45.6" x2="76.6" y2="43.3" stroke="#ffd890" stroke-width="0.36" opacity="0.63"/><line x1="115.4" y1="45.6" x2="61.8" y2="40.4" stroke="#ffd890" stroke-width="0.49" opacity="0.66"/><line x1="109.3" y1="49.5" x2="174.5" y2="29.7" stroke="#f0a040" stroke-width="0.38" opacity="0.98"/><line x1="115.9" y1="48.9" x2="83.4" y2="32.9" stroke="#f0a040" stroke-width="0.58" opacity="0.63"/><line x1="116.0" y1="43.7" x2="45.5" y2="19.9" stroke="#e88a30" stroke-width="0.55" opacity="0.81"/><line x1="128.7" y1="49.6" x2="62.9" y2="14.8" stroke="#f8c060" stroke-width="0.38" opacity="0.75"/><line x1="126.9" y1="51.9" x2="155.2" y2="43.4" stroke="#e88a30" stroke-width="0.48" opacity="0.97"/><line x1="134.6" y1="51.6" x2="157.7" y2="49.7" stroke="#ffd890" stroke-width="0.38" opacity="0.60"/><line x1="123.7" y1="51.0" x2="61.4" y2="32.0" stroke="#f0a040" stroke-width="0.63" opacity="0.56"/><line x1="116.7" y1="49.1" x2="89.5" y2="40.9" stroke="#e88a30" stroke-width="0.33" opacity="0.97"/><line x1="126.7" y1="46.6" x2="102.4" y2="35.3" stroke="#f8c060" stroke-width="0.31" opacity="0.80"/><line x1="119.0" y1="48.6" x2="156.5" y2="32.8" stroke="#f8c060" stroke-width="0.31" opacity="0.90"/><line x1="126.8" y1="43.0" x2="47.3" y2="21.0" stroke="#f8c060" stroke-width="0.31" opacity="0.61"/><line x1="120.0" y1="49.6" x2="167.3" y2="41.3" stroke="#f8c060" stroke-width="0.32" opacity="0.87"/><line x1="131.9" y1="48.6" x2="200.9" y2="11.0" stroke="#f8c060" stroke-width="0.51" opacity="0.76"/><line x1="105.6" y1="46.4" x2="37.0" y2="19.9" stroke="#f8c060" stroke-width="0.37" opacity="0.74"/><line x1="126.8" y1="47.6" x2="176.4" y2="25.9" stroke="#ffd890" stroke-width="0.61" opacity="0.55"/><line x1="121.8" y1="44.5" x2="144.6" y2="43.1" stroke="#ffd890" stroke-width="0.52" opacity="0.88"/><line x1="132.4" y1="46.4" x2="88.3" y2="26.9" stroke="#ffd890" stroke-width="0.50" opacity="0.62"/><line x1="120.7" y1="50.8" x2="187.0" y2="9.2" stroke="#f8c060" stroke-width="0.64" opacity="0.57"/><line x1="108.6" y1="46.4" x2="65.9" y2="28.1" stroke="#f8c060" stroke-width="0.57" opacity="0.89"/><line x1="131.9" y1="43.5" x2="216.6" y2="33.9" stroke="#ffd890" stroke-width="0.39" opacity="0.98"/><line x1="116.9" y1="46.9" x2="68.1" y2="40.8" stroke="#ffd890" stroke-width="0.44" opacity="0.60"/><line x1="114.6" y1="49.2" x2="65.0" y2="38.3" stroke="#f0a040" stroke-width="0.45" opacity="0.76"/><line x1="113.9" y1="51.6" x2="56.2" y2="12.1" stroke="#f0a040" stroke-width="0.33" opacity="0.64"/><line x1="132.2" y1="43.8" x2="64.8" y2="7.5" stroke="#e88a30" stroke-width="0.46" opacity="0.77"/><line x1="120.4" y1="46.9" x2="139.9" y2="45.3" stroke="#f8c060" stroke-width="0.47" opacity="0.54"/><line x1="133.2" y1="48.3" x2="216.2" y2="41.6" stroke="#f0a040" stroke-width="0.41" opacity="0.56"/><line x1="105.3" y1="51.9" x2="133.2" y2="34.4" stroke="#f8c060" stroke-width="0.32" opacity="0.85"/><line x1="133.1" y1="51.7" x2="164.2" y2="49.7" stroke="#e88a30" stroke-width="0.55" opacity="0.77"/><line x1="111.2" y1="46.5" x2="34.1" y2="32.4" stroke="#e88a30" stroke-width="0.31" opacity="0.51"/><line x1="120.2" y1="51.8" x2="169.7" y2="43.4" stroke="#ffd890" stroke-width="0.56" opacity="0.77"/><line x1="131.7" y1="51.7" x2="212.3" y2="16.1" stroke="#e88a30" stroke-width="0.38" opacity="0.94"/><line x1="126.9" y1="43.4" x2="187.5" y2="2.1" stroke="#f0a040" stroke-width="0.33" opacity="0.87"/><line x1="112.7" y1="43.6" x2="73.1" y2="26.8" stroke="#e88a30" stroke-width="0.54" opacity="0.85"/><line x1="106.4" y1="43.9" x2="140.1" y2="34.3" stroke="#e88a30" stroke-width="0.69" opacity="0.77"/><line x1="112.3" y1="51.7" x2="141.4" y2="47.2" stroke="#e88a30" stroke-width="0.45" opacity="0.74"/><line x1="120.1" y1="44.0" x2="40.2" y2="37.2" stroke="#f8c060" stroke-width="0.46" opacity="0.52"/><line x1="105.7" y1="45.0" x2="14.6" y2="37.6" stroke="#f8c060" stroke-width="0.56" opacity="0.86"/><line x1="131.4" y1="45.9" x2="177.7" y2="24.4" stroke="#e88a30" stroke-width="0.59" opacity="0.82"/><line x1="106.3" y1="50.4" x2="173.9" y2="18.3" stroke="#f8c060" stroke-width="0.66" opacity="0.88"/><line x1="122.1" y1="50.1" x2="72.1" y2="22.9" stroke="#f8c060" stroke-width="0.33" opacity="0.52"/><line x1="124.1" y1="51.6" x2="172.2" y2="25.0" stroke="#f0a040" stroke-width="0.55" opacity="0.84"/><line x1="119.7" y1="42.0" x2="73.3" y2="19.5" stroke="#f0a040" stroke-width="0.56" opacity="0.53"/><line x1="127.1" y1="44.5" x2="100.1" y2="29.3" stroke="#f8c060" stroke-width="0.39" opacity="0.82"/><line x1="118.8" y1="50.5" x2="54.2" y2="30.8" stroke="#f0a040" stroke-width="0.55" opacity="0.82"/><line x1="107.3" y1="43.5" x2="168.9" y2="17.9" stroke="#f8c060" stroke-width="0.30" opacity="0.53"/><line x1="113.1" y1="48.7" x2="79.9" y2="34.4" stroke="#e88a30" stroke-width="0.49" opacity="0.73"/><line x1="108.6" y1="50.9" x2="87.5" y2="46.6" stroke="#ffd890" stroke-width="0.31" opacity="0.73"/><line x1="129.6" y1="51.7" x2="163.3" y2="28.3" stroke="#f8c060" stroke-width="0.33" opacity="0.55"/><line x1="127.4" y1="44.6" x2="207.2" y2="36.0" stroke="#e88a30" stroke-width="0.65" opacity="0.85"/><line x1="111.9" y1="51.0" x2="138.2" y2="44.3" stroke="#ffd890" stroke-width="0.57" opacity="0.70"/><line x1="126.8" y1="46.2" x2="206.0" y2="29.6" stroke="#f0a040" stroke-width="0.43" opacity="0.67"/><line x1="116.9" y1="51.4" x2="42.6" y2="17.3" stroke="#e88a30" stroke-width="0.40" opacity="0.53"/><line x1="116.7" y1="50.7" x2="69.7" y2="39.7" stroke="#e88a30" stroke-width="0.64" opacity="0.64"/><line x1="106.5" y1="48.6" x2="71.2" y2="42.6" stroke="#e88a30" stroke-width="0.38" opacity="0.69"/><line x1="133.7" y1="50.8" x2="203.3" y2="7.8" stroke="#f8c060" stroke-width="0.59" opacity="0.52"/><line x1="127.0" y1="46.5" x2="93.7" y2="32.9" stroke="#f0a040" stroke-width="0.66" opacity="0.78"/><line x1="110.1" y1="46.1" x2="181.8" y2="31.9" stroke="#e88a30" stroke-width="0.46" opacity="0.62"/><line x1="119.5" y1="48.7" x2="92.0" y2="45.2" stroke="#f8c060" stroke-width="0.50" opacity="0.91"/><line x1="121.5" y1="46.5" x2="158.9" y2="20.5" stroke="#f8c060" stroke-width="0.52" opacity="0.62"/><line x1="110.2" y1="47.6" x2="145.1" y2="41.8" stroke="#f8c060" stroke-width="0.65" opacity="0.87"/><line x1="117.4" y1="46.1" x2="77.4" y2="36.4" stroke="#f0a040" stroke-width="0.50" opacity="0.79"/><line x1="115.8" y1="48.9" x2="29.6" y2="41.4" stroke="#ffd890" stroke-width="0.46" opacity="0.72"/><line x1="133.6" y1="50.5" x2="85.1" y2="45.4" stroke="#ffd890" stroke-width="0.69" opacity="0.74"/><line x1="107.2" y1="51.3" x2="133.2" y2="33.8" stroke="#f0a040" stroke-width="0.39" opacity="0.58"/><line x1="134.2" y1="43.1" x2="210.8" y2="36.8" stroke="#f0a040" stroke-width="0.61" opacity="0.62"/><line x1="132.6" y1="48.5" x2="181.4" y2="16.1" stroke="#ffd890" stroke-width="0.58" opacity="0.56"/><line x1="107.1" y1="47.2" x2="75.9" y2="39.4" stroke="#f0a040" stroke-width="0.30" opacity="0.65"/><line x1="118.8" y1="51.6" x2="87.5" y2="42.1" stroke="#f8c060" stroke-width="0.31" opacity="0.71"/><line x1="124.5" y1="42.6" x2="60.9" y2="22.5" stroke="#ffd890" stroke-width="0.33" opacity="0.61"/><line x1="117.7" y1="45.7" x2="159.7" y2="43.4" stroke="#ffd890" stroke-width="0.44" opacity="0.70"/><line x1="105.2" y1="44.9" x2="14.3" y2="31.6" stroke="#e88a30" stroke-width="0.61" opacity="0.60"/>
</svg>
<div class="t" style="left:1298.0px;top:136.5px;font-size:7.6px;line-height:8.7px;color:#1c1cc0;font-weight:bold;letter-spacing:0.2px">MISIÓN</div>
<svg class="abs" style="left:1240px;top:190.8px;filter:blur(.3px)" width="77.8" height="44.8" viewBox="0 0 77.8 44.8" preserveAspectRatio="none"><rect width="77.8" height="44.8" fill="#c4ccd4"/><rect x="0" y="0" width="77.8" height="4" fill="#e0e4e8"/>
<rect x="0" y="4" width="14" height="26" fill="#d8dce0"/><rect x="2" y="6" width="9" height="10" fill="#b8c0c8"/>
<rect x="50" y="3" width="26" height="14" fill="#8a9aa8"/><rect x="66" y="3" width="4" height="30" fill="#6a7480"/>
<rect x="18" y="12" width="12" height="20" fill="#1e2028"/><rect x="30" y="8" width="14" height="22" fill="#2a2e38"/>
<rect x="14" y="20" width="4" height="8" fill="#e0e0e8"/><rect x="15" y="24" width="2" height="3" fill="#c84040"/>
<path d="M42 36 Q44 22 52 20 Q60 20 64 28 L64 36Z" fill="#8ab0d0"/>
<ellipse cx="54" cy="14" rx="4" ry="5.5" fill="#c09078"/><path d="M50 11 Q51 7 55 7 Q58 8 58 12 Q55 10 50 12Z" fill="#2a2220"/>
<rect x="62" y="18" width="8" height="22" fill="#4a5a3a"/>
<path d="M0 31 L77.8 28 L77.8 34 L0 36Z" fill="#b86848"/><rect x="4" y="34" width="64" height="10.8" fill="#9a5840"/><rect x="10" y="36" width="4" height="8.8" fill="#3a2a22"/>
<rect x="34" y="30" width="14" height="2" fill="#2a2a2e"/></svg>
<div class="abs" style="left:1325.0px;top:185.4px;width:8.0px;height:3.12px;overflow:hidden;white-space:nowrap;font-size:2.60px;line-height:3.12px;font-weight:normal;color:#333;opacity:1.00">Innovación en maquinaria de empaque con impacto global para la industria de alimentos bebidas y productos químicos ofrecemos soluciones integrales de ingeniería</div>
<div class="abs" style="left:1325.0px;top:189.0px;width:50.0px;height:5.04px;overflow:hidden;white-space:nowrap;font-size:4.20px;line-height:5.04px;font-weight:bold;color:#3a3ab4;opacity:1.00">on impacto global para la industria de alimentos bebidas y productos químicos ofrecemos soluciones integrales de ingeniería diseño fabricación instalación y man</div>
<div class="abs" style="left:1325.0px;top:193.3px;width:22.5px;height:5.04px;overflow:hidden;white-space:nowrap;font-size:4.20px;line-height:5.04px;font-weight:bold;color:#3a3ab4;opacity:1.00">e alimentos bebidas y productos químicos ofrecemos soluciones integrales de ingeniería diseño fabricación instalación y mantenimiento de equipos industriales co</div>
<div class="abs" style="left:1325.0px;top:200.1px;width:65.0px;height:2.76px;overflow:hidden;white-space:nowrap;font-size:2.30px;line-height:2.76px;font-weight:normal;color:#62626c;opacity:0.95">cos ofrecemos soluciones integrales de ingeniería diseño fabricación instalación y mantenimiento de equipos industriales con tecnología de vanguardia calidad ce</div>
<div class="abs" style="left:1325.0px;top:202.4px;width:65.0px;height:2.76px;overflow:hidden;white-space:nowrap;font-size:2.30px;line-height:2.76px;font-weight:normal;color:#62626c;opacity:0.95">e ingeniería diseño fabricación instalación y mantenimiento de equipos industriales con tecnología de vanguardia calidad certificada y un equipo comprometido co</div>
<div class="abs" style="left:1325.0px;top:204.7px;width:65.0px;height:2.76px;overflow:hidden;white-space:nowrap;font-size:2.30px;line-height:2.76px;font-weight:normal;color:#62626c;opacity:0.95">ación en maquinaria de empaque con impacto global para la industria de alimentos bebidas y productos químicos ofrecemos soluciones integrales de ingeniería dise</div>
<div class="abs" style="left:1325.0px;top:207.0px;width:65.0px;height:2.76px;overflow:hidden;white-space:nowrap;font-size:2.30px;line-height:2.76px;font-weight:normal;color:#62626c;opacity:0.95">pacto global para la industria de alimentos bebidas y productos químicos ofrecemos soluciones integrales de ingeniería diseño fabricación instalación y mantenim</div>
<div class="abs" style="left:1325.0px;top:209.3px;width:52.0px;height:2.76px;overflow:hidden;white-space:nowrap;font-size:2.30px;line-height:2.76px;font-weight:normal;color:#62626c;opacity:0.95">mentos bebidas y productos químicos ofrecemos soluciones integrales de ingeniería diseño fabricación instalación y mantenimiento de equipos industriales con tec</div>
<div class="abs" style="left:1325.0px;top:213.1px;width:65.0px;height:2.76px;overflow:hidden;white-space:nowrap;font-size:2.30px;line-height:2.76px;font-weight:normal;color:#62626c;opacity:0.95">frecemos soluciones integrales de ingeniería diseño fabricación instalación y mantenimiento de equipos industriales con tecnología de vanguardia calidad certifi</div>
<div class="abs" style="left:1325.0px;top:215.4px;width:65.0px;height:2.76px;overflow:hidden;white-space:nowrap;font-size:2.30px;line-height:2.76px;font-weight:normal;color:#62626c;opacity:0.95">eniería diseño fabricación instalación y mantenimiento de equipos industriales con tecnología de vanguardia calidad certificada y un equipo comprometido con la </div>
<div class="abs" style="left:1325.0px;top:217.7px;width:65.0px;height:2.76px;overflow:hidden;white-space:nowrap;font-size:2.30px;line-height:2.76px;font-weight:normal;color:#62626c;opacity:0.95"> en maquinaria de empaque con impacto global para la industria de alimentos bebidas y productos químicos ofrecemos soluciones integrales de ingeniería diseño fa</div>
<div class="abs" style="left:1325.0px;top:220.0px;width:65.0px;height:2.76px;overflow:hidden;white-space:nowrap;font-size:2.30px;line-height:2.76px;font-weight:normal;color:#62626c;opacity:0.95"> global para la industria de alimentos bebidas y productos químicos ofrecemos soluciones integrales de ingeniería diseño fabricación instalación y mantenimiento</div>
<div class="abs" style="left:1325.0px;top:222.3px;width:52.0px;height:2.76px;overflow:hidden;white-space:nowrap;font-size:2.30px;line-height:2.76px;font-weight:normal;color:#62626c;opacity:0.95">s bebidas y productos químicos ofrecemos soluciones integrales de ingeniería diseño fabricación instalación y mantenimiento de equipos industriales con tecnolog</div>
<div class="abs" style="left:1325.0px;top:226.1px;width:65.0px;height:2.76px;overflow:hidden;white-space:nowrap;font-size:2.30px;line-height:2.76px;font-weight:normal;color:#62626c;opacity:0.95">mos soluciones integrales de ingeniería diseño fabricación instalación y mantenimiento de equipos industriales con tecnología de vanguardia calidad certificada </div>
<div class="abs" style="left:1325.0px;top:228.4px;width:65.0px;height:2.76px;overflow:hidden;white-space:nowrap;font-size:2.30px;line-height:2.76px;font-weight:normal;color:#62626c;opacity:0.95">ía diseño fabricación instalación y mantenimiento de equipos industriales con tecnología de vanguardia calidad certificada y un equipo comprometido con la produ</div>
<div class="abs" style="left:1325.0px;top:230.7px;width:52.0px;height:2.76px;overflow:hidden;white-space:nowrap;font-size:2.30px;line-height:2.76px;font-weight:normal;color:#62626c;opacity:0.95">aquinaria de empaque con impacto global para la industria de alimentos bebidas y productos químicos ofrecemos soluciones integrales de ingeniería diseño fabrica</div>
<div class="abs" style="left:1193.4px;top:253.0px;width:240.0px;height:81.0px;background:#020a24;"></div>
<div class="abs" style="left:1241.0px;top:266.4px;width:26.0px;height:3.12px;overflow:hidden;white-space:nowrap;font-size:2.60px;line-height:3.12px;font-weight:normal;color:#d8dce4;opacity:1.00">al para la industria de alimentos bebidas y productos químicos ofrecemos soluciones integrales de ingeniería diseño fabricación instalación y mantenimiento de e</div>
<div class="abs" style="left:1241.0px;top:271.5px;width:48.0px;height:5.04px;overflow:hidden;white-space:nowrap;font-size:4.20px;line-height:5.04px;font-weight:bold;color:#d8782e;opacity:1.00">idas y productos químicos ofrecemos soluciones integrales de ingeniería diseño fabricación instalación y mantenimiento de equipos industriales con tecnología de</div>
<div class="abs" style="left:1241.0px;top:275.8px;width:24.0px;height:5.04px;overflow:hidden;white-space:nowrap;font-size:4.20px;line-height:5.04px;font-weight:bold;color:#d8782e;opacity:1.00">oluciones integrales de ingeniería diseño fabricación instalación y mantenimiento de equipos industriales con tecnología de vanguardia calidad certificada y un </div>
<div class="abs" style="left:1241.0px;top:282.6px;width:65.0px;height:2.76px;overflow:hidden;white-space:nowrap;font-size:2.30px;line-height:2.76px;font-weight:normal;color:#d4d8e4;opacity:1.00">seño fabricación instalación y mantenimiento de equipos industriales con tecnología de vanguardia calidad certificada y un equipo comprometido con la productivi</div>
<div class="abs" style="left:1241.0px;top:284.9px;width:65.0px;height:2.76px;overflow:hidden;white-space:nowrap;font-size:2.30px;line-height:2.76px;font-weight:normal;color:#d4d8e4;opacity:1.00">aria de empaque con impacto global para la industria de alimentos bebidas y productos químicos ofrecemos soluciones integrales de ingeniería diseño fabricación </div>
<div class="abs" style="left:1241.0px;top:287.2px;width:65.0px;height:2.76px;overflow:hidden;white-space:nowrap;font-size:2.30px;line-height:2.76px;font-weight:normal;color:#d4d8e4;opacity:1.00">ra la industria de alimentos bebidas y productos químicos ofrecemos soluciones integrales de ingeniería diseño fabricación instalación y mantenimiento de equipo</div>
<div class="abs" style="left:1241.0px;top:289.5px;width:65.0px;height:2.76px;overflow:hidden;white-space:nowrap;font-size:2.30px;line-height:2.76px;font-weight:normal;color:#d4d8e4;opacity:1.00">y productos químicos ofrecemos soluciones integrales de ingeniería diseño fabricación instalación y mantenimiento de equipos industriales con tecnología de vang</div>
<div class="abs" style="left:1241.0px;top:291.8px;width:19.5px;height:2.76px;overflow:hidden;white-space:nowrap;font-size:2.30px;line-height:2.76px;font-weight:normal;color:#d4d8e4;opacity:1.00">ones integrales de ingeniería diseño fabricación instalación y mantenimiento de equipos industriales con tecnología de vanguardia calidad certificada y un equip</div>
<div class="abs" style="left:1319.0px;top:265.5px;width:67.7px;height:37.5px;background:#2e2e2e;"></div>
<div class="abs" style="left:1325px;top:281px;width:6px;height:6px;border-radius:50%;border:1px solid #ccc"></div>
<div class="abs" style="left:1334.5px;top:278.9px;width:37.0px;height:3.12px;overflow:hidden;white-space:nowrap;font-size:2.60px;line-height:3.12px;font-weight:normal;color:#d0d0d0;opacity:1.00">fabricación instalación y mantenimiento de equipos industriales con tecnología de vanguardia calidad certificada y un equipo comprometido con la productividad d</div>
<div class="abs" style="left:1334.5px;top:283.1px;width:45.0px;height:2.76px;overflow:hidden;white-space:nowrap;font-size:2.30px;line-height:2.76px;font-weight:normal;color:#a8a8a8;opacity:1.00">de empaque con impacto global para la industria de alimentos bebidas y productos químicos ofrecemos soluciones integrales de ingeniería diseño fabricación insta</div>
<div class="abs" style="left:1334.5px;top:285.3px;width:13.5px;height:2.76px;overflow:hidden;white-space:nowrap;font-size:2.30px;line-height:2.76px;font-weight:normal;color:#a8a8a8;opacity:1.00"> industria de alimentos bebidas y productos químicos ofrecemos soluciones integrales de ingeniería diseño fabricación instalación y mantenimiento de equipos ind</div>
<div class="abs" style="left:1380.0px;top:297.5px;width:5.0px;height:2.8px;background:#d0d0d0;"></div>
<svg class="abs" style="left:1197.1px;top:309.9px;filter:blur(.3px)" width="54.9" height="55.1" viewBox="0 0 55 55" preserveAspectRatio="none"><rect width="100%" height="100%" fill="#8a8e96"/><path d="M0 0 L30 0 L30 10 L0 40Z" fill="#c8ccd4"/><path d="M25 0 L55 0 L55 35 L35 30Z" fill="#3a3a40"/>
<circle cx="10" cy="10" r="2" fill="#4a4a50"/><path d="M20 4 L30 2 L34 12 L24 14Z" fill="#2a2a30"/>
<ellipse cx="22" cy="30" rx="14" ry="9" fill="#a8acb4"/><ellipse cx="18" cy="31" rx="6" ry="5" fill="#d0d4dc"/><circle cx="8" cy="33" r="2.5" fill="#2a2a30"/><circle cx="14" cy="33" r="2.5" fill="#2a2a30"/>
<path d="M0 38 L30 36 L34 55 L0 55Z" fill="#2e2e32"/><path d="M30 30 L55 25 L55 55 L40 55Z" fill="#b8bcc4"/><path d="M36 35 L55 32 L55 36 L38 39Z" fill="#e0e4ec"/></svg>
<svg class="abs" style="left:1256.8px;top:309.9px;filter:blur(.3px)" width="54.2" height="55.1" viewBox="0 0 55 55" preserveAspectRatio="none"><rect width="100%" height="100%" fill="#7e7880"/><rect width="55" height="22" fill="#9a9098"/>
<g fill="#c8c0c8"><rect x="6" y="4" width="8" height="10"/><rect x="18" y="4" width="8" height="10"/><rect x="30" y="4" width="8" height="10"/><rect x="42" y="4" width="8" height="10"/></g>
<g fill="#b84040"><rect x="8" y="10" width="3" height="3"/><rect x="20" y="10" width="3" height="3"/><rect x="44" y="10" width="3" height="3"/></g>
<rect x="0" y="22" width="55" height="33" fill="#4e4e56"/><rect x="0" y="22" width="6" height="33" fill="#8a8a92"/>
<rect x="14" y="26" width="20" height="10" fill="#2a2a2e"/><g fill="#a84040"><rect x="10" y="40" width="30" height="2"/><rect x="10" y="46" width="30" height="2"/></g>
<path d="M0 55 L0 46 L12 32 L16 35 L6 55Z" fill="#d8a080"/><path d="M30 55 L38 38 L40 28 L46 28 L46 40 L42 55Z" fill="#e0aa88"/></svg>
<svg class="abs" style="left:1316.2px;top:309.9px;filter:blur(.3px)" width="53.8" height="55.1" viewBox="0 0 55 55" preserveAspectRatio="none"><rect width="100%" height="100%" fill="#d4d2cc"/><rect x="0" y="0" width="10" height="55" fill="#e4e2dc"/>
<path d="M8 5 L40 0 L45 15 L12 22Z" fill="#b8b6b0"/><rect x="10" y="22" width="3" height="33" fill="#a8a6a0"/>
<path d="M26 22 Q30 14 38 16 Q46 18 46 30 L46 38 L28 40Z" fill="#4a5a8c"/><path d="M18 28 L30 24 L30 28 L20 32Z" fill="#4a5a8c"/>
<ellipse cx="36" cy="10" rx="3.5" ry="5" fill="#c09078"/><path d="M32 7 Q34 3 38 4 Q40 5 40 8Z" fill="#222"/>
<path d="M10 40 L55 34 L55 50 L10 52Z" fill="#c4c6c8"/><circle cx="25" cy="43" r="5" fill="#9a9c9e"/><circle cx="25" cy="43" r="2.5" fill="#5a5c5e"/>
<path d="M38 30 L55 22 L55 26 L40 34Z" fill="#e0e0e0"/></svg>
<svg class="abs" style="left:1375.1px;top:309.9px;filter:blur(.3px)" width="54.9" height="55.1" viewBox="0 0 55 55" preserveAspectRatio="none"><rect width="100%" height="100%" fill="#d8d8d8"/><rect x="40" y="0" width="15" height="14" fill="#6a8a5a"/>
<path d="M5 55 L6 25 Q10 15 22 14 Q28 12 32 18 L36 28 L40 55Z" fill="#1a1c24"/>
<ellipse cx="26" cy="10" rx="6" ry="7" fill="#a8806a"/><path d="M20 8 Q22 2 28 3 Q32 4 33 9 Q28 6 20 10Z" fill="#1a1a1a"/>
<path d="M30 55 L32 32 Q36 24 44 24 Q52 26 55 34 L55 55Z" fill="#20232c"/><ellipse cx="40" cy="22" rx="4.5" ry="5.5" fill="#b08a72"/>
<path d="M28 36 L50 34 L52 42 L30 44Z" fill="#eeeeee"/><path d="M22 44 L55 42 L55 55 L24 55Z" fill="#15161a"/>
<path d="M14 28 L30 40 L28 43 L12 32Z" fill="#a8806a"/></svg>
<div class="abs" style="left:1241.5px;top:389.9px;width:28.0px;height:3.12px;overflow:hidden;white-space:nowrap;font-size:2.60px;line-height:3.12px;font-weight:normal;color:#333;opacity:1.00">ductos químicos ofrecemos soluciones integrales de ingeniería diseño fabricación instalación y mantenimiento de equipos industriales con tecnología de vanguardi</div>
<div class="abs" style="left:1241.5px;top:394.5px;width:66.0px;height:5.04px;overflow:hidden;white-space:nowrap;font-size:4.20px;line-height:5.04px;font-weight:bold;color:#3a3ab4;opacity:1.00">integrales de ingeniería diseño fabricación instalación y mantenimiento de equipos industriales con tecnología de vanguardia calidad certificada y un equipo com</div>
<div class="abs" style="left:1241.5px;top:402.1px;width:66.0px;height:2.76px;overflow:hidden;white-space:nowrap;font-size:2.30px;line-height:2.76px;font-weight:normal;color:#62626c;opacity:0.95">cación instalación y mantenimiento de equipos industriales con tecnología de vanguardia calidad certificada y un equipo comprometido con la productividad de su </div>
<div class="abs" style="left:1241.5px;top:404.4px;width:66.0px;height:2.76px;overflow:hidden;white-space:nowrap;font-size:2.30px;line-height:2.76px;font-weight:normal;color:#62626c;opacity:0.95">paque con impacto global para la industria de alimentos bebidas y productos químicos ofrecemos soluciones integrales de ingeniería diseño fabricación instalació</div>
<div class="abs" style="left:1241.5px;top:406.7px;width:66.0px;height:2.76px;overflow:hidden;white-space:nowrap;font-size:2.30px;line-height:2.76px;font-weight:normal;color:#62626c;opacity:0.95">stria de alimentos bebidas y productos químicos ofrecemos soluciones integrales de ingeniería diseño fabricación instalación y mantenimiento de equipos industri</div>
<div class="abs" style="left:1241.5px;top:409.0px;width:66.0px;height:2.76px;overflow:hidden;white-space:nowrap;font-size:2.30px;line-height:2.76px;font-weight:normal;color:#62626c;opacity:0.95">s químicos ofrecemos soluciones integrales de ingeniería diseño fabricación instalación y mantenimiento de equipos industriales con tecnología de vanguardia cal</div>
<div class="abs" style="left:1241.5px;top:411.3px;width:59.4px;height:2.76px;overflow:hidden;white-space:nowrap;font-size:2.30px;line-height:2.76px;font-weight:normal;color:#62626c;opacity:0.95">rales de ingeniería diseño fabricación instalación y mantenimiento de equipos industriales con tecnología de vanguardia calidad certificada y un equipo comprome</div>
<div class="abs" style="left:1241.5px;top:421.3px;width:66.5px;height:9.9px;background:#020a24;"></div>
<div class="abs" style="left:1244.0px;top:422.9px;width:50.0px;height:3.12px;overflow:hidden;white-space:nowrap;font-size:2.60px;line-height:3.12px;font-weight:normal;color:#c8782e;opacity:1.00">n instalación y mantenimiento de equipos industriales con tecnología de vanguardia calidad certificada y un equipo comprometido con la productividad de su plant</div>
<div class="abs" style="left:1244.0px;top:425.5px;width:25.0px;height:3.12px;overflow:hidden;white-space:nowrap;font-size:2.60px;line-height:3.12px;font-weight:normal;color:#c8782e;opacity:1.00"> con impacto global para la industria de alimentos bebidas y productos químicos ofrecemos soluciones integrales de ingeniería diseño fabricación instalación y m</div>
<div class="abs" style="left:1244.0px;top:432.6px;width:62.0px;height:2.76px;overflow:hidden;white-space:nowrap;font-size:2.30px;line-height:2.76px;font-weight:normal;color:#62626c;opacity:0.95"> de alimentos bebidas y productos químicos ofrecemos soluciones integrales de ingeniería diseño fabricación instalación y mantenimiento de equipos industriales </div>
<div class="abs" style="left:1244.0px;top:434.9px;width:62.0px;height:2.76px;overflow:hidden;white-space:nowrap;font-size:2.30px;line-height:2.76px;font-weight:normal;color:#62626c;opacity:0.95">micos ofrecemos soluciones integrales de ingeniería diseño fabricación instalación y mantenimiento de equipos industriales con tecnología de vanguardia calidad </div>
<div class="abs" style="left:1244.0px;top:437.2px;width:62.0px;height:2.76px;overflow:hidden;white-space:nowrap;font-size:2.30px;line-height:2.76px;font-weight:normal;color:#62626c;opacity:0.95"> de ingeniería diseño fabricación instalación y mantenimiento de equipos industriales con tecnología de vanguardia calidad certificada y un equipo comprometido </div>
<div class="abs" style="left:1244.0px;top:439.5px;width:62.0px;height:2.76px;overflow:hidden;white-space:nowrap;font-size:2.30px;line-height:2.76px;font-weight:normal;color:#62626c;opacity:0.95">ovación en maquinaria de empaque con impacto global para la industria de alimentos bebidas y productos químicos ofrecemos soluciones integrales de ingeniería di</div>
<div class="abs" style="left:1244.0px;top:441.8px;width:62.0px;height:2.76px;overflow:hidden;white-space:nowrap;font-size:2.30px;line-height:2.76px;font-weight:normal;color:#62626c;opacity:0.95">impacto global para la industria de alimentos bebidas y productos químicos ofrecemos soluciones integrales de ingeniería diseño fabricación instalación y manten</div>
<div class="abs" style="left:1244.0px;top:444.1px;width:18.6px;height:2.76px;overflow:hidden;white-space:nowrap;font-size:2.30px;line-height:2.76px;font-weight:normal;color:#62626c;opacity:0.95">limentos bebidas y productos químicos ofrecemos soluciones integrales de ingeniería diseño fabricación instalación y mantenimiento de equipos industriales con t</div>
<div class="abs" style="left:1241.5px;top:452.6px;width:66.5px;height:10.4px;border:0.5px solid #c8c8d0;background:#fff"></div>
<div class="abs" style="left:1245.0px;top:454.5px;width:45.0px;height:3.12px;overflow:hidden;white-space:nowrap;font-size:2.60px;line-height:3.12px;font-weight:normal;color:#62626c;opacity:1.00"> ofrecemos soluciones integrales de ingeniería diseño fabricación instalación y mantenimiento de equipos industriales con tecnología de vanguardia calidad certi</div>
<div class="abs" style="left:1245.0px;top:457.0px;width:22.5px;height:3.12px;overflow:hidden;white-space:nowrap;font-size:2.60px;line-height:3.12px;font-weight:normal;color:#62626c;opacity:1.00">ngeniería diseño fabricación instalación y mantenimiento de equipos industriales con tecnología de vanguardia calidad certificada y un equipo comprometido con l</div>
<div class="abs" style="left:1241.5px;top:464.5px;width:66.5px;height:9.5px;border:0.5px solid #c8c8d0;background:#fff"></div>
<div class="abs" style="left:1245.0px;top:466.4px;width:45.0px;height:3.12px;overflow:hidden;white-space:nowrap;font-size:2.60px;line-height:3.12px;font-weight:normal;color:#62626c;opacity:1.00">ón en maquinaria de empaque con impacto global para la industria de alimentos bebidas y productos químicos ofrecemos soluciones integrales de ingeniería diseño </div>
<div class="abs" style="left:1245.0px;top:468.9px;width:22.5px;height:3.12px;overflow:hidden;white-space:nowrap;font-size:2.60px;line-height:3.12px;font-weight:normal;color:#62626c;opacity:1.00">to global para la industria de alimentos bebidas y productos químicos ofrecemos soluciones integrales de ingeniería diseño fabricación instalación y mantenimien</div>
<div class="abs" style="left:1241.5px;top:475px;width:66.5px;height:9.5px;border:0.5px solid #c8c8d0;background:#fff"></div>
<div class="abs" style="left:1245.0px;top:476.9px;width:45.0px;height:3.12px;overflow:hidden;white-space:nowrap;font-size:2.60px;line-height:3.12px;font-weight:normal;color:#62626c;opacity:1.00">tos bebidas y productos químicos ofrecemos soluciones integrales de ingeniería diseño fabricación instalación y mantenimiento de equipos industriales con tecnol</div>
<div class="abs" style="left:1245.0px;top:479.4px;width:22.5px;height:3.12px;overflow:hidden;white-space:nowrap;font-size:2.60px;line-height:3.12px;font-weight:normal;color:#62626c;opacity:1.00">cemos soluciones integrales de ingeniería diseño fabricación instalación y mantenimiento de equipos industriales con tecnología de vanguardia calidad certificad</div>
<svg class="abs" style="left:1317px;top:389px;filter:blur(.3px)" width="68" height="93.6" viewBox="0 0 68 93.6" preserveAspectRatio="none"><rect width="68" height="93.6" fill="#4e525e"/><rect width="68" height="14" fill="#3a3e4a"/>
<path d="M0 0 L16 0 L8 48 L0 52Z" fill="#2e323c"/><path d="M48 22 L68 12 L68 62 L52 58Z" fill="#c4c8d4"/>
<path d="M16 0 L52 0 L46 16 L22 16Z" fill="#22262e"/>
<rect x="24" y="22" width="20" height="16" fill="#6a6e78"/><rect x="26" y="24" width="3" height="12" fill="#b8bcc8"/><rect x="34" y="24" width="3" height="12" fill="#9aa0aa"/>
<rect x="27" y="38" width="14" height="8" fill="#3a3e48"/><ellipse cx="34" cy="36" rx="12" ry="3" fill="#c89040" opacity=".6"/>
<g stroke-width="2.6" stroke-linecap="round"><path d="M22 30 L15 15" stroke="#2e5cc8"/><path d="M27 26 L24 8" stroke="#2e5cc8"/><path d="M34 24 L34 5" stroke="#2e5cc8"/><path d="M41 26 L46 9" stroke="#2e5cc8"/><path d="M46 30 L54 16" stroke="#2e5cc8"/></g>
<g stroke-width="1.6" stroke-linecap="round" stroke="#e8a030"><path d="M15 15 L14 12"/><path d="M24 8 L23.5 5"/><path d="M34 5 L34 2"/><path d="M46 9 L47 6"/><path d="M54 16 L56 13"/><path d="M19 26 L17 22"/><path d="M49 26 L51 22"/></g>
<rect x="0" y="50" width="52" height="5" fill="#8a8e9a"/><rect x="0" y="55" width="44" height="9" fill="#6a6e7a"/>
<path d="M14 60 L56 56 L60 82 L18 86Z" fill="#2a2e3a"/><path d="M20 62 L52 60 L52 68 L22 70Z" fill="#4a4e5a"/>
<path d="M48 58 L58 57 L60 80 L50 81Z" fill="#8a7060"/>
<rect x="0" y="80" width="68" height="13.6" fill="#a4a8b2"/><path d="M16 84 L42 82 L42 93.6 L20 93.6Z" fill="#22262e"/></svg>
<div class="abs" style="left:1364.0px;top:466.0px;width:21.0px;height:16.6px;background:#fff;"></div>
<div class="abs" style="left:1370.0px;top:470.0px;width:2.0px;height:9.0px;background:#2a2aa8;"></div>
<div class="abs" style="left:1373.0px;top:472.5px;width:2.0px;height:6.5px;background:#2a2aa8;"></div>
<div class="abs" style="left:1376.0px;top:474.0px;width:2.0px;height:5.0px;background:#2a2aa8;"></div>
<div class="abs" style="left:1369.0px;top:479.0px;width:10.0px;height:0.6px;background:#2a2aa8;"></div>
<svg class="abs" style="left:1194px;top:498px" width="47" height="22" viewBox="0 0 47 22"><path d="M27.44,14.96 L29.60,15.77 L29.43,17.21 L27.15,17.51 L26.82,18.68 L28.59,20.15 L27.98,21.45 L25.71,21.00 L25.02,22.00 L26.23,23.96 L25.22,25.00 L23.22,23.84 L22.25,24.55 L22.75,26.80 L21.46,27.45 L19.95,25.71 L18.79,26.07 L18.54,28.36 L17.11,28.55 L16.25,26.41 L15.03,26.38 L14.05,28.46 L12.63,28.18 L12.51,25.88 L11.38,25.45 L9.77,27.10 L8.52,26.38 L9.15,24.16 L8.22,23.39 L6.16,24.43 L5.22,23.34 L6.54,21.45 L5.90,20.41 L3.62,20.73 L3.08,19.39 L4.94,18.03 L4.68,16.85 L2.42,16.40 L2.34,14.96 L4.54,14.28 L4.68,13.07 L2.68,11.92 L3.08,10.53 L5.38,10.60 L5.90,9.51 L4.39,7.77 L5.22,6.58 L7.37,7.40 L8.22,6.53 L7.36,4.39 L8.52,3.54 L10.30,5.01 L11.38,4.47 L11.25,2.17 L12.63,1.74 L13.83,3.71 L15.03,3.54 L15.66,1.32 L17.11,1.37 L17.60,3.62 L18.79,3.85 L20.11,1.96 L21.46,2.47 L21.20,4.76 L22.25,5.37 L24.11,4.01 L25.22,4.92 L24.23,7.01 L25.02,7.92 L27.22,7.24 L27.98,8.47 L26.36,10.12 L26.82,11.24 L29.12,11.31 L29.43,12.71 L27.37,13.75Z" fill="#c6c6c6"/><circle cx="15.98" cy="14.96" r="8.46" fill="#bdbdbd" stroke="#a9a9a9" stroke-width="1.09"/><circle cx="15.98" cy="14.96" r="5.46" fill="#cfcfcf" stroke="#b0b0b0" stroke-width="0.82"/><ellipse cx="16.66" cy="14.96" rx="2.73" ry="3.82" fill="#fff"/><path d="M45.53,16.72 L47.19,17.57 L46.96,19.07 L45.12,19.39 L44.65,20.57 L45.77,22.05 L44.92,23.30 L43.13,22.79 L42.19,23.66 L42.56,25.48 L41.24,26.23 L39.85,25.00 L38.63,25.37 L38.17,27.17 L36.66,27.28 L35.94,25.56 L34.69,25.37 L33.49,26.79 L32.08,26.23 L32.18,24.38 L31.13,23.66 L29.43,24.42 L28.40,23.30 L29.30,21.67 L28.67,20.57 L26.81,20.52 L26.36,19.07 L27.88,17.99 L27.79,16.72 L26.13,15.87 L26.36,14.37 L28.20,14.05 L28.67,12.87 L27.55,11.39 L28.40,10.14 L30.19,10.65 L31.13,9.78 L30.76,7.96 L32.08,7.21 L33.47,8.44 L34.69,8.07 L35.15,6.27 L36.66,6.16 L37.38,7.88 L38.63,8.07 L39.83,6.65 L41.24,7.21 L41.14,9.06 L42.19,9.78 L43.89,9.02 L44.92,10.14 L44.02,11.77 L44.65,12.87 L46.51,12.92 L46.96,14.37 L45.44,15.45Z" fill="#c6c6c6"/><circle cx="36.660000000000004" cy="16.72" r="6.55" fill="#bdbdbd" stroke="#a9a9a9" stroke-width="0.84"/><circle cx="36.660000000000004" cy="16.72" r="4.22" fill="#cfcfcf" stroke="#b0b0b0" stroke-width="0.63"/><ellipse cx="37.19" cy="16.72" rx="2.11" ry="2.96" fill="#fff"/></svg>
<svg class="abs" style="left:1387px;top:497px" width="46" height="23" viewBox="0 0 46 23"><path d="M22.08,12.65 L23.89,13.46 L23.70,14.89 L21.74,15.20 L21.34,16.35 L22.71,17.79 L21.98,19.04 L20.05,18.57 L19.25,19.48 L19.96,21.34 L18.81,22.21 L17.21,21.04 L16.12,21.57 L16.06,23.56 L14.66,23.93 L13.63,22.23 L12.42,22.31 L11.61,24.12 L10.18,23.93 L9.87,21.97 L8.72,21.57 L7.28,22.94 L6.03,22.21 L6.50,20.28 L5.59,19.48 L3.73,20.19 L2.86,19.04 L4.03,17.44 L3.50,16.35 L1.51,16.29 L1.14,14.89 L2.84,13.86 L2.76,12.65 L0.95,11.84 L1.14,10.41 L3.10,10.10 L3.50,8.95 L2.13,7.51 L2.86,6.26 L4.79,6.73 L5.59,5.82 L4.88,3.96 L6.03,3.09 L7.63,4.26 L8.72,3.73 L8.78,1.74 L10.18,1.37 L11.21,3.07 L12.42,2.99 L13.23,1.18 L14.66,1.37 L14.97,3.33 L16.12,3.73 L17.56,2.36 L18.81,3.09 L18.34,5.02 L19.25,5.82 L21.11,5.11 L21.98,6.26 L20.81,7.86 L21.34,8.95 L23.33,9.01 L23.70,10.41 L22.00,11.44Z" fill="#c6c6c6"/><circle cx="12.420000000000002" cy="12.65" r="7.13" fill="#bdbdbd" stroke="#a9a9a9" stroke-width="0.92"/><circle cx="12.420000000000002" cy="12.65" r="4.60" fill="#cfcfcf" stroke="#b0b0b0" stroke-width="0.69"/><ellipse cx="13.00" cy="12.65" rx="2.30" ry="3.22" fill="#fff"/><path d="M41.18,11.50 L43.21,12.31 L43.04,13.74 L40.88,14.04 L40.53,15.20 L42.16,16.66 L41.51,17.94 L39.37,17.49 L38.65,18.45 L39.69,20.38 L38.64,21.37 L36.78,20.21 L35.77,20.87 L36.09,23.04 L34.77,23.60 L33.41,21.88 L32.24,22.15 L31.80,24.30 L30.36,24.38 L29.68,22.30 L28.48,22.15 L27.33,24.02 L25.95,23.60 L26.03,21.41 L24.95,20.87 L23.23,22.23 L22.08,21.37 L22.90,19.33 L22.07,18.45 L19.99,19.14 L19.21,17.94 L20.67,16.31 L20.19,15.20 L18.00,15.14 L17.68,13.74 L19.61,12.71 L19.54,11.50 L17.51,10.69 L17.68,9.26 L19.84,8.96 L20.19,7.80 L18.56,6.34 L19.21,5.06 L21.35,5.51 L22.07,4.55 L21.03,2.62 L22.08,1.63 L23.94,2.79 L24.95,2.13 L24.63,-0.04 L25.95,-0.60 L27.31,1.12 L28.48,0.85 L28.92,-1.30 L30.36,-1.38 L31.04,0.70 L32.24,0.85 L33.39,-1.02 L34.77,-0.60 L34.69,1.59 L35.77,2.13 L37.49,0.77 L38.64,1.63 L37.82,3.67 L38.65,4.55 L40.73,3.86 L41.51,5.06 L40.05,6.69 L40.53,7.80 L42.72,7.86 L43.04,9.26 L41.11,10.29Z" fill="#c6c6c6"/><circle cx="30.360000000000003" cy="11.5" r="7.99" fill="#bdbdbd" stroke="#a9a9a9" stroke-width="1.03"/><circle cx="30.360000000000003" cy="11.5" r="5.15" fill="#cfcfcf" stroke="#b0b0b0" stroke-width="0.77"/><ellipse cx="31.00" cy="11.5" rx="2.58" ry="3.61" fill="#fff"/></svg>
<div class="abs" style="left:1250.0px;top:506.0px;width:130.0px;height:5.04px;overflow:hidden;white-space:nowrap;font-size:4.20px;line-height:5.04px;font-weight:bold;color:#e8904a;opacity:1.00">ería diseño fabricación instalación y mantenimiento de equipos industriales con tecnología de vanguardia calidad certificada y un equipo comprometido con la pro</div>
<svg class="abs" style="left:1488px;top:111px;filter:blur(.3px)" width="129" height="59.5" viewBox="0 0 129 59.5" preserveAspectRatio="none">
<defs><linearGradient id="vh1" x1="0" y1="0" x2="0" y2="1"><stop offset="0" stop-color="#a4aaab"/><stop offset=".6" stop-color="#b8bdbd"/><stop offset="1" stop-color="#aeb3b3"/></linearGradient>
<linearGradient id="vh2" x1="0" y1="0" x2="1" y2="0"><stop offset="0" stop-color="#7a6a62"/><stop offset=".35" stop-color="#a8988e"/><stop offset=".6" stop-color="#5a4a42"/><stop offset="1" stop-color="#2a2220"/></linearGradient></defs>
<rect width="129" height="59.5" fill="url(#vh1)"/>
<path d="M25 0 Q40 -2 50 2 L60 0Z" fill="#e8e8e8"/>
<path d="M38 8 L129 6 L129 8.5 L40 10Z" fill="#8a9090" opacity=".7"/>
<path d="M45 18 L129 31 L129 33 L50 19Z" fill="#6a7070" opacity=".7"/>
<path d="M0 40 L90 48 L129 46 L129 59.5 L0 59.5Z" fill="url(#vh2)"/>
<path d="M0 39 L90 46.5 L115 47 L115 49 L90 49 L0 43Z" fill="#201816"/>
<path d="M88 33 L129 52 L129 56 L86 35Z" fill="#4a4e4e" opacity=".8"/>
</svg>
<div class="t" style="left:1593.5px;top:135.5px;font-size:8px;line-height:9.2px;color:#1a1aa0;font-weight:bold">VISIÓN</div>
<div class="abs" style="left:1535.7px;top:184.4px;width:7.0px;height:3.12px;overflow:hidden;white-space:nowrap;font-size:2.60px;line-height:3.12px;font-weight:normal;color:#333;opacity:1.00"> maquinaria de empaque con impacto global para la industria de alimentos bebidas y productos químicos ofrecemos soluciones integrales de ingeniería diseño fabri</div>
<div class="abs" style="left:1535.7px;top:188.5px;width:55.0px;height:5.04px;overflow:hidden;white-space:nowrap;font-size:4.20px;line-height:5.04px;font-weight:bold;color:#3a3ab4;opacity:1.00">obal para la industria de alimentos bebidas y productos químicos ofrecemos soluciones integrales de ingeniería diseño fabricación instalación y mantenimiento de</div>
<div class="abs" style="left:1535.7px;top:192.8px;width:35.8px;height:5.04px;overflow:hidden;white-space:nowrap;font-size:4.20px;line-height:5.04px;font-weight:bold;color:#3a3ab4;opacity:1.00">ebidas y productos químicos ofrecemos soluciones integrales de ingeniería diseño fabricación instalación y mantenimiento de equipos industriales con tecnología </div>
<div class="abs" style="left:1535.7px;top:199.1px;width:67.0px;height:2.76px;overflow:hidden;white-space:nowrap;font-size:2.30px;line-height:2.76px;font-weight:normal;color:#62626c;opacity:0.95"> soluciones integrales de ingeniería diseño fabricación instalación y mantenimiento de equipos industriales con tecnología de vanguardia calidad certificada y u</div>
<div class="abs" style="left:1535.7px;top:201.4px;width:67.0px;height:2.76px;overflow:hidden;white-space:nowrap;font-size:2.30px;line-height:2.76px;font-weight:normal;color:#62626c;opacity:0.95">diseño fabricación instalación y mantenimiento de equipos industriales con tecnología de vanguardia calidad certificada y un equipo comprometido con la producti</div>
<div class="abs" style="left:1535.7px;top:203.7px;width:67.0px;height:2.76px;overflow:hidden;white-space:nowrap;font-size:2.30px;line-height:2.76px;font-weight:normal;color:#62626c;opacity:0.95">inaria de empaque con impacto global para la industria de alimentos bebidas y productos químicos ofrecemos soluciones integrales de ingeniería diseño fabricació</div>
<div class="abs" style="left:1535.7px;top:206.0px;width:67.0px;height:2.76px;overflow:hidden;white-space:nowrap;font-size:2.30px;line-height:2.76px;font-weight:normal;color:#62626c;opacity:0.95">para la industria de alimentos bebidas y productos químicos ofrecemos soluciones integrales de ingeniería diseño fabricación instalación y mantenimiento de equi</div>
<div class="abs" style="left:1535.7px;top:208.3px;width:60.3px;height:2.76px;overflow:hidden;white-space:nowrap;font-size:2.30px;line-height:2.76px;font-weight:normal;color:#62626c;opacity:0.95">s y productos químicos ofrecemos soluciones integrales de ingeniería diseño fabricación instalación y mantenimiento de equipos industriales con tecnología de va</div>
<div class="abs" style="left:1535.7px;top:212.1px;width:64.0px;height:2.76px;overflow:hidden;white-space:nowrap;font-size:2.30px;line-height:2.76px;font-weight:normal;color:#62626c;opacity:0.95">ciones integrales de ingeniería diseño fabricación instalación y mantenimiento de equipos industriales con tecnología de vanguardia calidad certificada y un equ</div>
<div class="abs" style="left:1535.7px;top:214.4px;width:64.0px;height:2.76px;overflow:hidden;white-space:nowrap;font-size:2.30px;line-height:2.76px;font-weight:normal;color:#62626c;opacity:0.95">o fabricación instalación y mantenimiento de equipos industriales con tecnología de vanguardia calidad certificada y un equipo comprometido con la productividad</div>
<div class="abs" style="left:1535.7px;top:216.7px;width:64.0px;height:2.76px;overflow:hidden;white-space:nowrap;font-size:2.30px;line-height:2.76px;font-weight:normal;color:#62626c;opacity:0.95">a de empaque con impacto global para la industria de alimentos bebidas y productos químicos ofrecemos soluciones integrales de ingeniería diseño fabricación ins</div>
<div class="abs" style="left:1535.7px;top:219.0px;width:44.8px;height:2.76px;overflow:hidden;white-space:nowrap;font-size:2.30px;line-height:2.76px;font-weight:normal;color:#62626c;opacity:0.95">la industria de alimentos bebidas y productos químicos ofrecemos soluciones integrales de ingeniería diseño fabricación instalación y mantenimiento de equipos i</div>
<div class="abs" style="left:1535.7px;top:224.1px;width:67.0px;height:2.76px;overflow:hidden;white-space:nowrap;font-size:2.30px;line-height:2.76px;font-weight:normal;color:#62626c;opacity:0.95">roductos químicos ofrecemos soluciones integrales de ingeniería diseño fabricación instalación y mantenimiento de equipos industriales con tecnología de vanguar</div>
<div class="abs" style="left:1535.7px;top:226.4px;width:67.0px;height:2.76px;overflow:hidden;white-space:nowrap;font-size:2.30px;line-height:2.76px;font-weight:normal;color:#62626c;opacity:0.95">s integrales de ingeniería diseño fabricación instalación y mantenimiento de equipos industriales con tecnología de vanguardia calidad certificada y un equipo c</div>
<div class="abs" style="left:1535.7px;top:228.7px;width:67.0px;height:2.76px;overflow:hidden;white-space:nowrap;font-size:2.30px;line-height:2.76px;font-weight:normal;color:#62626c;opacity:0.95">ricación instalación y mantenimiento de equipos industriales con tecnología de vanguardia calidad certificada y un equipo comprometido con la productividad de s</div>
<div class="abs" style="left:1535.7px;top:231.0px;width:20.1px;height:2.76px;overflow:hidden;white-space:nowrap;font-size:2.30px;line-height:2.76px;font-weight:normal;color:#62626c;opacity:0.95">empaque con impacto global para la industria de alimentos bebidas y productos químicos ofrecemos soluciones integrales de ingeniería diseño fabricación instalac</div>
<div class="abs" style="left:1608px;top:190.75px;width:9px;height:44.75px;background:linear-gradient(180deg,#e0e0dc 0%,#6a8a4a 40%,#3a6a2a 70%,#5a8a4a 100%)"></div>
<div class="abs" style="left:1488.0px;top:253.0px;width:129.0px;height:81.0px;background:#020a24;"></div>
<div class="abs" style="left:1535.7px;top:266.4px;width:26.0px;height:3.12px;overflow:hidden;white-space:nowrap;font-size:2.60px;line-height:3.12px;font-weight:normal;color:#d8dce4;opacity:1.00">dustria de alimentos bebidas y productos químicos ofrecemos soluciones integrales de ingeniería diseño fabricación instalación y mantenimiento de equipos indust</div>
<div class="abs" style="left:1535.7px;top:271.5px;width:48.0px;height:5.04px;overflow:hidden;white-space:nowrap;font-size:4.20px;line-height:5.04px;font-weight:bold;color:#d8782e;opacity:1.00">tos químicos ofrecemos soluciones integrales de ingeniería diseño fabricación instalación y mantenimiento de equipos industriales con tecnología de vanguardia c</div>
<div class="abs" style="left:1535.7px;top:275.8px;width:24.0px;height:5.04px;overflow:hidden;white-space:nowrap;font-size:4.20px;line-height:5.04px;font-weight:bold;color:#d8782e;opacity:1.00">egrales de ingeniería diseño fabricación instalación y mantenimiento de equipos industriales con tecnología de vanguardia calidad certificada y un equipo compro</div>
<div class="abs" style="left:1535.7px;top:282.6px;width:65.0px;height:2.76px;overflow:hidden;white-space:nowrap;font-size:2.30px;line-height:2.76px;font-weight:normal;color:#d4d8e4;opacity:1.00">ión instalación y mantenimiento de equipos industriales con tecnología de vanguardia calidad certificada y un equipo comprometido con la productividad de su pla</div>
<div class="abs" style="left:1535.7px;top:284.9px;width:65.0px;height:2.76px;overflow:hidden;white-space:nowrap;font-size:2.30px;line-height:2.76px;font-weight:normal;color:#d4d8e4;opacity:1.00">ue con impacto global para la industria de alimentos bebidas y productos químicos ofrecemos soluciones integrales de ingeniería diseño fabricación instalación y</div>
<div class="abs" style="left:1535.7px;top:287.2px;width:65.0px;height:2.76px;overflow:hidden;white-space:nowrap;font-size:2.30px;line-height:2.76px;font-weight:normal;color:#d4d8e4;opacity:1.00">ia de alimentos bebidas y productos químicos ofrecemos soluciones integrales de ingeniería diseño fabricación instalación y mantenimiento de equipos industriale</div>
<div class="abs" style="left:1535.7px;top:289.5px;width:65.0px;height:2.76px;overflow:hidden;white-space:nowrap;font-size:2.30px;line-height:2.76px;font-weight:normal;color:#d4d8e4;opacity:1.00">uímicos ofrecemos soluciones integrales de ingeniería diseño fabricación instalación y mantenimiento de equipos industriales con tecnología de vanguardia calida</div>
<div class="abs" style="left:1535.7px;top:291.8px;width:19.5px;height:2.76px;overflow:hidden;white-space:nowrap;font-size:2.30px;line-height:2.76px;font-weight:normal;color:#d4d8e4;opacity:1.00">es de ingeniería diseño fabricación instalación y mantenimiento de equipos industriales con tecnología de vanguardia calidad certificada y un equipo comprometid</div>
<div class="abs" style="left:1614.0px;top:265.0px;width:3.0px;height:38.0px;background:#2e2e2e;"></div>
<svg class="abs" style="left:1491.3px;top:309.9px;filter:blur(.3px)" width="54.7" height="55.1" viewBox="0 0 55 55" preserveAspectRatio="none"><rect width="100%" height="100%" fill="#8a8e96"/><path d="M0 0 L30 0 L30 10 L0 40Z" fill="#c8ccd4"/><path d="M25 0 L55 0 L55 35 L35 30Z" fill="#3a3a40"/>
<circle cx="10" cy="10" r="2" fill="#4a4a50"/><path d="M20 4 L30 2 L34 12 L24 14Z" fill="#2a2a30"/>
<ellipse cx="22" cy="30" rx="14" ry="9" fill="#a8acb4"/><ellipse cx="18" cy="31" rx="6" ry="5" fill="#d0d4dc"/><circle cx="8" cy="33" r="2.5" fill="#2a2a30"/><circle cx="14" cy="33" r="2.5" fill="#2a2a30"/>
<path d="M0 38 L30 36 L34 55 L0 55Z" fill="#2e2e32"/><path d="M30 30 L55 25 L55 55 L40 55Z" fill="#b8bcc4"/><path d="M36 35 L55 32 L55 36 L38 39Z" fill="#e0e4ec"/></svg>
<svg class="abs" style="left:1550.7px;top:309.9px;filter:blur(.3px)" width="54.3" height="55.1" viewBox="0 0 55 55" preserveAspectRatio="none"><rect width="100%" height="100%" fill="#7e7880"/><rect width="55" height="22" fill="#9a9098"/>
<g fill="#c8c0c8"><rect x="6" y="4" width="8" height="10"/><rect x="18" y="4" width="8" height="10"/><rect x="30" y="4" width="8" height="10"/><rect x="42" y="4" width="8" height="10"/></g>
<g fill="#b84040"><rect x="8" y="10" width="3" height="3"/><rect x="20" y="10" width="3" height="3"/><rect x="44" y="10" width="3" height="3"/></g>
<rect x="0" y="22" width="55" height="33" fill="#4e4e56"/><rect x="0" y="22" width="6" height="33" fill="#8a8a92"/>
<rect x="14" y="26" width="20" height="10" fill="#2a2a2e"/><g fill="#a84040"><rect x="10" y="40" width="30" height="2"/><rect x="10" y="46" width="30" height="2"/></g>
<path d="M0 55 L0 46 L12 32 L16 35 L6 55Z" fill="#d8a080"/><path d="M30 55 L38 38 L40 28 L46 28 L46 40 L42 55Z" fill="#e0aa88"/></svg>
<svg class="abs" style="left:1610px;top:309.9px;filter:blur(.3px)" width="7" height="55.1" viewBox="0 0 55 55" preserveAspectRatio="none"><rect width="100%" height="100%" fill="#d4d2cc"/><rect x="0" y="0" width="10" height="55" fill="#e4e2dc"/>
<path d="M8 5 L40 0 L45 15 L12 22Z" fill="#b8b6b0"/><rect x="10" y="22" width="3" height="33" fill="#a8a6a0"/>
<path d="M26 22 Q30 14 38 16 Q46 18 46 30 L46 38 L28 40Z" fill="#4a5a8c"/><path d="M18 28 L30 24 L30 28 L20 32Z" fill="#4a5a8c"/>
<ellipse cx="36" cy="10" rx="3.5" ry="5" fill="#c09078"/><path d="M32 7 Q34 3 38 4 Q40 5 40 8Z" fill="#222"/>
<path d="M10 40 L55 34 L55 50 L10 52Z" fill="#c4c6c8"/><circle cx="25" cy="43" r="5" fill="#9a9c9e"/><circle cx="25" cy="43" r="2.5" fill="#5a5c5e"/>
<path d="M38 30 L55 22 L55 26 L40 34Z" fill="#e0e0e0"/></svg>
<div class="abs" style="left:1535.6px;top:392.4px;width:30.0px;height:3.12px;overflow:hidden;white-space:nowrap;font-size:2.60px;line-height:3.12px;font-weight:normal;color:#333;opacity:1.00">nnovación en maquinaria de empaque con impacto global para la industria de alimentos bebidas y productos químicos ofrecemos soluciones integrales de ingeniería </div>
<div class="abs" style="left:1535.6px;top:396.5px;width:50.0px;height:5.04px;overflow:hidden;white-space:nowrap;font-size:4.20px;line-height:5.04px;font-weight:bold;color:#3a3ab4;opacity:1.00">n impacto global para la industria de alimentos bebidas y productos químicos ofrecemos soluciones integrales de ingeniería diseño fabricación instalación y mant</div>
<div class="abs" style="left:1535.6px;top:400.8px;width:45.0px;height:5.04px;overflow:hidden;white-space:nowrap;font-size:4.20px;line-height:5.04px;font-weight:bold;color:#3a3ab4;opacity:1.00"> alimentos bebidas y productos químicos ofrecemos soluciones integrales de ingeniería diseño fabricación instalación y mantenimiento de equipos industriales con</div>
<div class="abs" style="left:1535.6px;top:407.1px;width:66.0px;height:2.76px;overflow:hidden;white-space:nowrap;font-size:2.30px;line-height:2.76px;font-weight:normal;color:#62626c;opacity:0.95">os ofrecemos soluciones integrales de ingeniería diseño fabricación instalación y mantenimiento de equipos industriales con tecnología de vanguardia calidad cer</div>
<div class="abs" style="left:1535.6px;top:409.4px;width:66.0px;height:2.76px;overflow:hidden;white-space:nowrap;font-size:2.30px;line-height:2.76px;font-weight:normal;color:#62626c;opacity:0.95"> ingeniería diseño fabricación instalación y mantenimiento de equipos industriales con tecnología de vanguardia calidad certificada y un equipo comprometido con</div>
<div class="abs" style="left:1535.6px;top:411.7px;width:66.0px;height:2.76px;overflow:hidden;white-space:nowrap;font-size:2.30px;line-height:2.76px;font-weight:normal;color:#62626c;opacity:0.95">ción en maquinaria de empaque con impacto global para la industria de alimentos bebidas y productos químicos ofrecemos soluciones integrales de ingeniería diseñ</div>
<div class="abs" style="left:1535.6px;top:414.0px;width:66.0px;height:2.76px;overflow:hidden;white-space:nowrap;font-size:2.30px;line-height:2.76px;font-weight:normal;color:#62626c;opacity:0.95">acto global para la industria de alimentos bebidas y productos químicos ofrecemos soluciones integrales de ingeniería diseño fabricación instalación y mantenimi</div>
<div class="abs" style="left:1535.6px;top:416.3px;width:59.4px;height:2.76px;overflow:hidden;white-space:nowrap;font-size:2.30px;line-height:2.76px;font-weight:normal;color:#62626c;opacity:0.95">entos bebidas y productos químicos ofrecemos soluciones integrales de ingeniería diseño fabricación instalación y mantenimiento de equipos industriales con tecn</div>
<div class="abs" style="left:1535.6px;top:428.0px;width:66.4px;height:9.8px;background:#020a24;"></div>
<div class="abs" style="left:1538.0px;top:429.4px;width:50.0px;height:3.12px;overflow:hidden;white-space:nowrap;font-size:2.60px;line-height:3.12px;font-weight:normal;color:#c8782e;opacity:1.00">recemos soluciones integrales de ingeniería diseño fabricación instalación y mantenimiento de equipos industriales con tecnología de vanguardia calidad certific</div>
<div class="abs" style="left:1538.0px;top:432.0px;width:25.0px;height:3.12px;overflow:hidden;white-space:nowrap;font-size:2.60px;line-height:3.12px;font-weight:normal;color:#c8782e;opacity:1.00">niería diseño fabricación instalación y mantenimiento de equipos industriales con tecnología de vanguardia calidad certificada y un equipo comprometido con la p</div>
<div class="abs" style="left:1538.0px;top:439.1px;width:62.0px;height:2.76px;overflow:hidden;white-space:nowrap;font-size:2.30px;line-height:2.76px;font-weight:normal;color:#62626c;opacity:0.95">en maquinaria de empaque con impacto global para la industria de alimentos bebidas y productos químicos ofrecemos soluciones integrales de ingeniería diseño fab</div>
<div class="abs" style="left:1538.0px;top:441.4px;width:62.0px;height:2.76px;overflow:hidden;white-space:nowrap;font-size:2.30px;line-height:2.76px;font-weight:normal;color:#62626c;opacity:0.95">global para la industria de alimentos bebidas y productos químicos ofrecemos soluciones integrales de ingeniería diseño fabricación instalación y mantenimiento </div>
<div class="abs" style="left:1538.0px;top:443.7px;width:62.0px;height:2.76px;overflow:hidden;white-space:nowrap;font-size:2.30px;line-height:2.76px;font-weight:normal;color:#62626c;opacity:0.95"> bebidas y productos químicos ofrecemos soluciones integrales de ingeniería diseño fabricación instalación y mantenimiento de equipos industriales con tecnologí</div>
<div class="abs" style="left:1538.0px;top:446.0px;width:62.0px;height:2.76px;overflow:hidden;white-space:nowrap;font-size:2.30px;line-height:2.76px;font-weight:normal;color:#62626c;opacity:0.95">os soluciones integrales de ingeniería diseño fabricación instalación y mantenimiento de equipos industriales con tecnología de vanguardia calidad certificada y</div>
<div class="abs" style="left:1538.0px;top:448.3px;width:62.0px;height:2.76px;overflow:hidden;white-space:nowrap;font-size:2.30px;line-height:2.76px;font-weight:normal;color:#62626c;opacity:0.95">a diseño fabricación instalación y mantenimiento de equipos industriales con tecnología de vanguardia calidad certificada y un equipo comprometido con la produc</div>
<div class="abs" style="left:1538.0px;top:450.6px;width:18.6px;height:2.76px;overflow:hidden;white-space:nowrap;font-size:2.30px;line-height:2.76px;font-weight:normal;color:#62626c;opacity:0.95">quinaria de empaque con impacto global para la industria de alimentos bebidas y productos químicos ofrecemos soluciones integrales de ingeniería diseño fabricac</div>
<div class="abs" style="left:1535.6px;top:459px;width:66.4px;height:9.5px;border:0.5px solid #c8c8d0;background:#fff"></div>
<div class="abs" style="left:1539.0px;top:460.9px;width:45.0px;height:3.12px;overflow:hidden;white-space:nowrap;font-size:2.60px;line-height:3.12px;font-weight:normal;color:#62626c;opacity:1.00">l para la industria de alimentos bebidas y productos químicos ofrecemos soluciones integrales de ingeniería diseño fabricación instalación y mantenimiento de eq</div>
<div class="abs" style="left:1539.0px;top:463.4px;width:22.5px;height:3.12px;overflow:hidden;white-space:nowrap;font-size:2.60px;line-height:3.12px;font-weight:normal;color:#62626c;opacity:1.00">das y productos químicos ofrecemos soluciones integrales de ingeniería diseño fabricación instalación y mantenimiento de equipos industriales con tecnología de </div>
<div class="abs" style="left:1535.6px;top:471.7px;width:66.4px;height:8.3px;border:0.5px solid #c8c8d0;background:#fff"></div>
<div class="abs" style="left:1539.0px;top:473.6px;width:45.0px;height:3.12px;overflow:hidden;white-space:nowrap;font-size:2.60px;line-height:3.12px;font-weight:normal;color:#62626c;opacity:1.00">luciones integrales de ingeniería diseño fabricación instalación y mantenimiento de equipos industriales con tecnología de vanguardia calidad certificada y un e</div>
<div class="abs" style="left:1539.0px;top:476.1px;width:22.5px;height:3.12px;overflow:hidden;white-space:nowrap;font-size:2.60px;line-height:3.12px;font-weight:normal;color:#62626c;opacity:1.00">eño fabricación instalación y mantenimiento de equipos industriales con tecnología de vanguardia calidad certificada y un equipo comprometido con la productivid</div>
<div class="abs" style="left:1535.6px;top:481.6px;width:66.4px;height:9.4px;border:0.5px solid #c8c8d0;background:#fff"></div>
<div class="abs" style="left:1539.0px;top:483.5px;width:45.0px;height:3.12px;overflow:hidden;white-space:nowrap;font-size:2.60px;line-height:3.12px;font-weight:normal;color:#62626c;opacity:1.00">ria de empaque con impacto global para la industria de alimentos bebidas y productos químicos ofrecemos soluciones integrales de ingeniería diseño fabricación i</div>
<div class="abs" style="left:1539.0px;top:486.0px;width:22.5px;height:3.12px;overflow:hidden;white-space:nowrap;font-size:2.60px;line-height:3.12px;font-weight:normal;color:#62626c;opacity:1.00">a la industria de alimentos bebidas y productos químicos ofrecemos soluciones integrales de ingeniería diseño fabricación instalación y mantenimiento de equipos</div>
<div class="abs" style="left:1610.7px;top:391.6px;width:6.3px;height:92.4px;background:linear-gradient(180deg,#d8e0d0 0%,#7a9a6a 25%,#3a5a2a 60%,#5a7a4a 100%)"></div>
<svg class="abs" style="left:1488.7px;top:507px" width="45" height="19" viewBox="0 0 45 19"><path d="M27.51,15.80 L29.78,16.61 L29.62,18.04 L27.24,18.35 L26.92,19.51 L28.83,20.98 L28.24,22.29 L25.88,21.85 L25.22,22.86 L26.58,24.85 L25.61,25.91 L23.50,24.76 L22.56,25.52 L23.24,27.83 L21.99,28.54 L20.34,26.79 L19.21,27.22 L19.14,29.63 L17.74,29.92 L16.71,27.75 L15.50,27.81 L14.69,30.08 L13.26,29.92 L12.95,27.54 L11.79,27.22 L10.32,29.13 L9.01,28.54 L9.45,26.18 L8.44,25.52 L6.45,26.88 L5.39,25.91 L6.54,23.80 L5.78,22.86 L3.47,23.54 L2.76,22.29 L4.51,20.64 L4.08,19.51 L1.67,19.44 L1.38,18.04 L3.55,17.01 L3.49,15.80 L1.22,14.99 L1.38,13.56 L3.76,13.25 L4.08,12.09 L2.17,10.62 L2.76,9.31 L5.12,9.75 L5.78,8.74 L4.42,6.75 L5.39,5.69 L7.50,6.84 L8.44,6.08 L7.76,3.77 L9.01,3.06 L10.66,4.81 L11.79,4.38 L11.86,1.97 L13.26,1.68 L14.29,3.85 L15.50,3.79 L16.31,1.52 L17.74,1.68 L18.05,4.06 L19.21,4.38 L20.68,2.47 L21.99,3.06 L21.55,5.42 L22.56,6.08 L24.55,4.72 L25.61,5.69 L24.46,7.80 L25.22,8.74 L27.53,8.06 L28.24,9.31 L26.49,10.96 L26.92,12.09 L29.33,12.16 L29.62,13.56 L27.45,14.59Z" fill="#c6c6c6"/><circle cx="15.5" cy="15.8" r="8.87" fill="#bdbdbd" stroke="#a9a9a9" stroke-width="1.14"/><circle cx="15.5" cy="15.8" r="5.72" fill="#cfcfcf" stroke="#b0b0b0" stroke-width="0.86"/><ellipse cx="16.21" cy="15.8" rx="2.86" ry="4.00" fill="#fff"/><path d="M42.90,17.00 L44.47,17.81 L44.25,19.23 L42.51,19.52 L42.07,20.64 L43.13,22.05 L42.32,23.23 L40.62,22.75 L39.74,23.57 L40.08,25.30 L38.84,26.01 L37.52,24.84 L36.37,25.19 L35.93,26.90 L34.50,27.00 L33.82,25.37 L32.63,25.19 L31.50,26.54 L30.16,26.01 L30.26,24.25 L29.26,23.57 L27.65,24.29 L26.68,23.23 L27.53,21.69 L26.93,20.64 L25.17,20.60 L24.75,19.23 L26.19,18.20 L26.10,17.00 L24.53,16.19 L24.75,14.77 L26.49,14.48 L26.93,13.36 L25.87,11.95 L26.68,10.77 L28.38,11.25 L29.26,10.43 L28.92,8.70 L30.16,7.99 L31.48,9.16 L32.63,8.81 L33.07,7.10 L34.50,7.00 L35.18,8.63 L36.37,8.81 L37.50,7.46 L38.84,7.99 L38.74,9.75 L39.74,10.43 L41.35,9.71 L42.32,10.77 L41.47,12.31 L42.07,13.36 L43.83,13.40 L44.25,14.77 L42.81,15.80Z" fill="#c6c6c6"/><circle cx="34.5" cy="17" r="6.20" fill="#bdbdbd" stroke="#a9a9a9" stroke-width="0.80"/><circle cx="34.5" cy="17" r="4.00" fill="#cfcfcf" stroke="#b0b0b0" stroke-width="0.60"/><ellipse cx="35.00" cy="17" rx="2.00" ry="2.80" fill="#fff"/></svg>
<div class="abs" style="left:1540.0px;top:513.0px;width:77.0px;height:5.04px;overflow:hidden;white-space:nowrap;font-size:4.20px;line-height:5.04px;font-weight:bold;color:#3a3ab4;opacity:1.00"> productos químicos ofrecemos soluciones integrales de ingeniería diseño fabricación instalación y mantenimiento de equipos industriales con tecnología de vangu</div>
<div class="abs" style="left:1485.3px;top:108.7px;width:140px;height:420px;border:2px solid #1e88e0;box-shadow:inset 0 0 0 .8px #6ab8f8"></div>
</div>

<!-- LEFT PANEL -->
<div id="left">

<svg class="abs" style="left:22px;top:17px" width="14" height="18" viewBox="0 0 14 18" fill="none" stroke="#1e1e1e" stroke-width="1.15">
<path d="M4.2 1.45h2.45v4.9h-2.45a2.45 2.45 0 0 1 0-4.9z"/><path d="M6.65 1.45h2.45a2.45 2.45 0 0 1 0 4.9h-2.45z"/>
<path d="M4.2 6.3500000000000005h2.45v4.9h-2.45a2.45 2.45 0 0 1 0-4.9z"/><circle cx="9.100000000000001" cy="8.8" r="2.45"/>
<path d="M4.2 11.25h2.45v2.45a2.45 2.45 0 1 1 -2.45-2.45z"/></svg>
<svg class="abs" style="left:40px;top:23.5px" width="8" height="6" viewBox="0 0 8 6" fill="none" stroke="#1e1e1e" stroke-width="1.2"><path d="M1 1.5l3 3 3-3"/></svg>
<svg class="abs" style="left:268px;top:18px" width="18" height="15" viewBox="0 0 18 15" fill="none" stroke="#1e1e1e" stroke-width="1.2"><rect x="1.5" y="2" width="15" height="11" rx="2"/><path d="M6 2v11"/></svg>
<div class="t sb" style="left:21px;top:50px;font-size:14px;font-weight:bold;line-height:18px">Inversiones INNA</div>
<svg class="abs" style="left:142px;top:55px" width="8" height="6" viewBox="0 0 8 6" fill="none" stroke="#1e1e1e" stroke-width="1.2"><path d="M1 1.5l3 3 3-3"/></svg>
<div class="t" style="left:20px;top:70px;color:#8a8a8a;font-size:12px">Proyecto de equipo</div>
<div class="t" style="left:130px;top:71px;width:39px;height:15px;background:#e5f4ff;border-radius:3px;color:#0d84d9;font-size:12px;line-height:15px;text-align:center">Gratis</div>
<div class="hl" style="left:0;top:98px;width:302px"></div>
<div class="abs" style="left:12px;top:107px;width:57px;height:24px;background:#f0f0f0;border-radius:5px"></div>
<div class="t sb" style="left:21px;top:111px;font-size:12px;font-weight:bold">Archivo</div>
<div class="t" style="left:81px;top:111px;font-size:12px;color:#8a8a8a">Recursos</div>
<svg class="abs" style="left:273px;top:111px" width="16" height="16" viewBox="0 0 16 16" fill="none" stroke="#1e1e1e" stroke-width="1.3"><circle cx="7" cy="7" r="5.3"/><path d="M11 11l3.5 3.5"/></svg>
<div class="hl" style="left:0;top:139px;width:302px"></div>
<div class="t sb" style="left:20px;top:152px;font-size:12px;font-weight:bold">Páginas</div>
<svg class="abs" style="left:273px;top:152px" width="14" height="14" viewBox="0 0 14 14" fill="none" stroke="#1e1e1e" stroke-width="1.2"><path d="M7 1v12M1 7h12"/></svg>
<div class="abs" style="left:12px;top:184px;width:281px;height:24px;background:#f5f5f5;border-radius:5px"></div>
<div class="t sb" style="left:20px;top:188px;font-size:12px;font-weight:bold">Empresa</div>
<div class="t" style="left:20px;top:220px;font-size:12px">Servicios</div>
<div class="t" style="left:20px;top:252px;font-size:12px">Productos</div>
<div class="abs" style="left:12px;top:280px;width:281px;height:63px;background:#f5f5f5;border-radius:6px;border-top:3px solid #f5b82e"></div>
<div class="t" style="left:28px;top:296px;font-size:12px">Se usaron las 3 páginas gratis.</div>
<div class="t" style="left:28px;top:312px;font-size:12px;color:#0d84d9">Obtén páginas ilimitadas y más</div>
<div class="hl" style="left:0;top:355px;width:302px"></div>
<div class="t sb" style="left:20px;top:369px;font-size:12px;font-weight:bold">Capas</div>
<svg class="abs" style="left:274px;top:371px" width="14" height="13" viewBox="0 0 14 13" fill="none" stroke="#1e1e1e" stroke-width="1.1"><path d="M1 1.5h7M1 4.5h7M1 7.5h7M1 10.5h7M10 1l1.5 1.5L13 1M10 11l1.5-1.5L13 11"/></svg>
<svg class="abs" style="left:22.5px;top:407.5px" width="12" height="12" viewBox="0 0 12 12" fill="none" stroke="#1e1e1e" stroke-width="1.15"><rect x="0.6" y="0.6" width="9.2" height="9.2" rx="0.6"/><path d="M0.6 4.3h4.8v-3.7"/></svg><div class="t sb" style="left:44px;top:405px;font-size:12px;font-weight:bold">Valores</div>
<svg class="abs" style="left:47px;top:439px" width="12" height="12" viewBox="0 0 12 12" fill="none" stroke="#9a9a9a" stroke-width="1"><rect x="0.5" y="1.5" width="9.5" height="3.2" rx="0.6"/><rect x="0.5" y="7.2" width="5.5" height="3.2" rx="0.6"/></svg><div class="t" style="left:68px;top:437px;font-size:12px;font-weight:normal">1920w light</div>
<svg class="abs" style="left:71px;top:471px" width="12" height="12" viewBox="0 0 12 12" fill="none" stroke="#9a9a9a" stroke-width="1"><rect x="0.5" y="1.5" width="9.5" height="3.2" rx="0.6"/><rect x="0.5" y="7.2" width="5.5" height="3.2" rx="0.6"/></svg><div class="t" style="left:92px;top:469px;font-size:12px;font-weight:normal">Container</div>
<svg class="abs" style="left:95px;top:503px" width="12" height="12" viewBox="0 0 12 12" fill="none" stroke="#9a9a9a" stroke-width="1"><rect x="0.5" y="1.5" width="9.5" height="3.2" rx="0.6"/><rect x="0.5" y="7.2" width="5.5" height="3.2" rx="0.6"/></svg><div class="t" style="left:116px;top:501px;font-size:12px;font-weight:normal">Background</div>
<svg class="abs" style="left:119px;top:535px" width="12" height="12" viewBox="0 0 12 12" fill="none" stroke="#9a9a9a" stroke-width="1"><rect x="0.5" y="1.5" width="9.5" height="3.2" rx="0.6"/><rect x="0.5" y="7.2" width="5.5" height="3.2" rx="0.6"/></svg><div class="t" style="left:140px;top:533px;font-size:12px;font-weight:normal">Container</div>
<svg class="abs" style="left:143px;top:567px" width="12" height="12" viewBox="0 0 12 12" fill="none" stroke="#9a9a9a" stroke-width="1"><rect x="0.5" y="1.5" width="9.5" height="3.2" rx="0.6"/><rect x="0.5" y="7.2" width="5.5" height="3.2" rx="0.6"/></svg><div class="t" style="left:164px;top:565px;font-size:12px;font-weight:normal">Container</div>
<svg class="abs" style="left:167px;top:599px" width="12" height="12" viewBox="0 0 12 12" fill="none" stroke="#9a9a9a" stroke-width="1"><rect x="0.5" y="1.5" width="9.5" height="3.2" rx="0.6"/><rect x="0.5" y="7.2" width="5.5" height="3.2" rx="0.6"/></svg><div class="t" style="left:188px;top:597px;font-size:12px;font-weight:normal">Container</div>
<svg class="abs" style="left:191px;top:631px" width="12" height="12" viewBox="0 0 12 12" fill="none" stroke="#9a9a9a" stroke-width="1"><rect x="0.5" y="1.5" width="9.5" height="3.2" rx="0.6"/><rect x="0.5" y="7.2" width="5.5" height="3.2" rx="0.6"/></svg><div class="t" style="left:212px;top:629px;font-size:12px;font-weight:normal">Heading 2</div>
<svg class="abs" style="left:215px;top:663px" width="12" height="12" viewBox="0 0 12 12" fill="none" stroke="#9a9a9a" stroke-width="1"><path d="M1.5 2h9M6 2v9M1.5 2v1.5M10.5 2v1.5M4.5 11h3"/></svg><div class="t" style="left:236px;top:661px;font-size:12px;font-weight:normal">Valores</div>
<svg class="abs" style="left:95px;top:695px" width="12" height="12" viewBox="0 0 12 12" fill="none" stroke="#9a9a9a" stroke-width="1"><rect x="0.5" y="1.5" width="9.5" height="3.2" rx="0.6"/><rect x="0.5" y="7.2" width="5.5" height="3.2" rx="0.6"/></svg><div class="t" style="left:116px;top:693px;font-size:12px;font-weight:normal">Container</div>
<svg class="abs" style="left:119px;top:727px" width="12" height="12" viewBox="0 0 12 12" fill="none" stroke="#9a9a9a" stroke-width="1"><rect x="1.5" y="1.5" width="3" height="9" rx="1"/><rect x="7" y="1.5" width="3" height="5" rx="1"/></svg><div class="t" style="left:140px;top:725px;font-size:12px;font-weight:normal">Container</div>
<svg class="abs" style="left:143px;top:759px" width="12" height="12" viewBox="0 0 12 12" fill="none" stroke="#9a9a9a" stroke-width="1"><rect x="0.5" y="1.5" width="9.5" height="3.2" rx="0.6"/><rect x="0.5" y="7.2" width="5.5" height="3.2" rx="0.6"/></svg><div class="t" style="left:164px;top:757px;font-size:12px;font-weight:normal">Margin</div>
<svg class="abs" style="left:167px;top:791px" width="12" height="12" viewBox="0 0 12 12" fill="none" stroke="#9a9a9a" stroke-width="1"><rect x="0.5" y="1.5" width="9.5" height="3.2" rx="0.6"/><rect x="0.5" y="7.2" width="5.5" height="3.2" rx="0.6"/></svg><div class="t" style="left:188px;top:789px;font-size:12px;font-weight:normal">Container</div>
<svg class="abs" style="left:191px;top:823px" width="12" height="12" viewBox="0 0 12 12" fill="none" stroke="#9a9a9a" stroke-width="1"><rect x="0.5" y="1.5" width="9.5" height="3.2" rx="0.6"/><rect x="0.5" y="7.2" width="5.5" height="3.2" rx="0.6"/></svg><div class="t" style="left:212px;top:821px;font-size:12px;font-weight:normal">Container</div>
<svg class="abs" style="left:215px;top:855px" width="12" height="12" viewBox="0 0 12 12" fill="none" stroke="#9a9a9a" stroke-width="1"><rect x="0.5" y="1.5" width="9.5" height="3.2" rx="0.6"/><rect x="0.5" y="7.2" width="5.5" height="3.2" rx="0.6"/></svg><div class="t" style="left:236px;top:853px;font-size:12px;font-weight:normal">Container</div>
<svg class="abs" style="left:239px;top:887px" width="12" height="12" viewBox="0 0 12 12" fill="none" stroke="#9a9a9a" stroke-width="1"><path d="M4 1v10M8 1v10M1 4h10M1 8h10"/></svg><div class="t" style="left:260px;top:885px;font-size:12px;font-weight:normal">Picture</div>
</div>

<!-- RIGHT PANEL -->
<div id="right"></div>

<div class="abs" style="left:1630px;top:15px;width:23px;height:23px;border-radius:50%;background:#1d86e6;color:#fff;font-size:12px;line-height:23px;text-align:center;-webkit-text-stroke:0.3px #fff">A</div>
<svg class="abs" style="left:1658px;top:23px" width="8" height="6" viewBox="0 0 8 6" fill="none" stroke="#1e1e1e" stroke-width="1.2"><path d="M1 1.5l3 3 3-3"/></svg>
<svg class="abs" style="left:1727px;top:17px" width="20" height="19" viewBox="0 0 20 19" fill="none" stroke="#1e1e1e" stroke-width="1.3" stroke-linejoin="round"><path d="M3 2.2v14.6L16.5 9.5z"/></svg>
<svg class="abs" style="left:1756px;top:23px" width="8" height="6" viewBox="0 0 8 6" fill="none" stroke="#1e1e1e" stroke-width="1.2"><path d="M1 1.5l3 3 3-3"/></svg>
<div class="abs" style="left:1773px;top:10px;width:77px;height:32px;border-radius:6px;background:#0d99ff;color:#fff;font-size:12px;line-height:32px;text-align:center;-webkit-text-stroke:0.3px #fff">Compartir</div>
<div class="abs" style="left:1626px;top:50px;width:53px;height:24px;background:#f5f5f5;border-radius:5px"></div>
<div class="t sb" style="left:1634px;top:54px;font-size:12px">Diseño</div>
<div class="t" style="left:1691px;top:54px;font-size:12px;color:#8a8a8a">Prototipo</div>
<div class="t" style="left:1809px;top:54px;font-size:12px;letter-spacing:-0.5px">13%</div>
<svg class="abs" style="left:1835px;top:59px" width="8" height="6" viewBox="0 0 8 6" fill="none" stroke="#1e1e1e" stroke-width="1.2"><path d="M1 1.5l3 3 3-3"/></svg>
<div class="hl" style="left:1617px;top:82px;width:244px"></div>
<div class="t sb" style="left:1634px;top:95px;font-size:12px">Página</div>
<div class="abs" style="left:1634px;top:127px;width:183px;height:24px;background:#f5f5f5;border-radius:5px"></div>
<div class="abs" style="left:1763px;top:127px;width:1px;height:24px;background:#fff"></div>
<div class="abs" style="left:1639px;top:133px;width:14px;height:13px;background:#f5f5f5;border:1px solid #e0e0e0;border-radius:2px"></div>
<div class="t" style="left:1658px;top:131px;font-size:12px">F5F5F5</div>
<div class="t" style="left:1772px;top:131px;font-size:12px">100</div>
<div class="t" style="left:1802px;top:131px;font-size:12px;color:#8a8a8a">%</div>
<svg class="abs" style="left:1829px;top:132px" width="18" height="14" viewBox="0 0 18 14" fill="none" stroke="#1e1e1e" stroke-width="1.3"><path d="M1.5 7C3.5 3.5 6 2 9 2s5.5 1.5 7.5 5c-2 3.5-4.5 5-7.5 5S3.5 10.5 1.5 7z"/><circle cx="9" cy="7" r="1.8"/></svg>
<div class="hl" style="left:1617px;top:167px;width:244px"></div>
<div class="t" style="left:1634px;top:180px;font-size:12px;color:#8a8a8a">Variables</div>
<svg class="abs" style="left:1830px;top:181px" width="16" height="14" viewBox="0 0 16 14" fill="none" stroke="#555" stroke-width="1.1"><path d="M5 1v12M11 1v12"/><circle cx="5" cy="9" r="1.8" fill="#fff"/><circle cx="11" cy="5" r="1.8" fill="#fff"/></svg>
<div class="hl" style="left:1617px;top:208px;width:244px"></div>
<div class="t sb" style="left:1634px;top:221px;font-size:12px">Estilos</div>
<svg class="abs" style="left:1830px;top:222px" width="14" height="14" viewBox="0 0 14 14" fill="none" stroke="#555" stroke-width="1.1"><path d="M7 1.5v11M1.5 7h11"/></svg>
<div class="hl" style="left:1617px;top:249px;width:244px"></div>
<div class="t" style="left:1634px;top:262px;font-size:12px;color:#8a8a8a">Exportar</div>
<svg class="abs" style="left:1830px;top:263px" width="14" height="14" viewBox="0 0 14 14" fill="none" stroke="#555" stroke-width="1.1"><path d="M7 1.5v11M1.5 7h11"/></svg>
<div class="hl" style="left:1617px;top:290px;width:244px"></div>
<div class="abs" style="left:1802px;top:866px;width:32px;height:32px;border-radius:50%;background:#fff;box-shadow:0 1px 4px rgba(0,0,0,.18);font-size:16px;line-height:32px;text-align:center;color:#333">?</div>

<!-- toolbar -->
<div class="abs" style="left:338px;top:910px;width:962px;height:3.8px;border-radius:2px;background:#a6a6a6"></div>
<div id="tb" class="abs" style="left:699px;top:858px;width:465px;height:48px;background:#fff;border-radius:13px;box-shadow:0 1px 3px rgba(0,0,0,.14),0 0 0 0.5px rgba(0,0,0,.08)"></div>
<div class="abs" style="left:707px;top:866px;width:32px;height:32px;border-radius:5px;background:#0d99ff"></div>
<svg class="abs" style="left:713px;top:872px" width="20" height="20" viewBox="0 0 20 20" fill="none" stroke="#fff" stroke-width="1.25" stroke-linejoin="round"><path d="M2.2 2.6Q1.6 1.8 2.6 2.1L18.6 8.9Q19.4 9.4 18.5 9.9L12.2 12.1L9.9 18Q9.4 18.8 9 18Z"/></svg>
<svg class="abs" style="left:744px;top:879px" width="8" height="6" viewBox="0 0 8 6" fill="none" stroke="#1e1e1e" stroke-width="1.1"><path d="M1 1.5l3 3 3-3"/></svg>
<svg class="abs" style="left:770px;top:873px" width="20" height="18" viewBox="0 0 20 18" fill="none" stroke="#1e1e1e" stroke-width="1.2"><path d="M5.4 1.2v15.5M14.7 1.2v15.5M2.3 4.3h15.7M2.3 13.2h15.7"/></svg>
<svg class="abs" style="left:801px;top:879px" width="8" height="6" viewBox="0 0 8 6" fill="none" stroke="#1e1e1e" stroke-width="1.1"><path d="M1 1.5l3 3 3-3"/></svg>
<svg class="abs" style="left:828px;top:873px" width="18" height="18" viewBox="0 0 18 18" fill="none" stroke="#1e1e1e" stroke-width="1.4"><rect x="1.5" y="1.5" width="15" height="15" rx="1"/></svg>
<svg class="abs" style="left:857px;top:879px" width="8" height="6" viewBox="0 0 8 6" fill="none" stroke="#1e1e1e" stroke-width="1.1"><path d="M1 1.5l3 3 3-3"/></svg>
<svg class="abs" style="left:884px;top:872px" width="20" height="20" viewBox="0 0 20 20" fill="none" stroke="#1e1e1e" stroke-width="1.2" stroke-linejoin="round"><path d="M1.6 3.2Q1 1.8 2.6 1.6Q9 1.8 13.5 5.5Q16 8 18.5 12.2L12.5 18.3Q8 15.5 5.5 13Q2.5 9 1.6 3.2Z"/><circle cx="10" cy="10.2" r="2"/><path d="M2.2 2.3L8.6 8.7"/></svg>
<svg class="abs" style="left:914px;top:879px" width="8" height="6" viewBox="0 0 8 6" fill="none" stroke="#1e1e1e" stroke-width="1.1"><path d="M1 1.5l3 3 3-3"/></svg>
<svg class="abs" style="left:941px;top:873px" width="18" height="18" viewBox="0 0 18 18" fill="none" stroke="#1e1e1e" stroke-width="1.15"><path d="M2 4.2V2.2h14v2M9 2.2v13.8M6 16h6"/></svg>
<svg class="abs" style="left:981px;top:872px" width="20" height="20" viewBox="0 0 20 20" fill="none" stroke="#1e1e1e" stroke-width="1.2" stroke-linejoin="round"><path d="M2 18V9.3A8.5 8.5 0 1 1 10.5 18Z"/></svg>
<svg class="abs" style="left:1021px;top:872px" width="20" height="20" viewBox="0 0 20 20" fill="none" stroke="#1e1e1e" stroke-width="1.15" stroke-linejoin="round"><path d="M5.6 1.3L9.3 5 5.6 8.7 1.9 5Z"/><circle cx="14.5" cy="5.3" r="3.3"/><rect x="2.2" y="11.4" width="6.4" height="6.3" rx="1"/><path d="M14.5 11.2v6.6M11.2 14.5h6.6"/></svg>
<div class="abs" style="left:1055px;top:858px;width:1px;height:48px;background:#e6e6e6"></div>
<div class="abs" style="left:1064px;top:866px;width:92px;height:32px;border-radius:7px;background:#f0f0f0"></div>
<div class="abs" style="left:1096px;top:868px;width:28px;height:28px;border-radius:5px;background:#fff;box-shadow:0 0 0 .5px rgba(0,0,0,.08)"></div>
<svg class="abs" style="left:1069px;top:872px" width="20" height="20" viewBox="0 0 20 20" fill="none" stroke="#8a8a8a" stroke-width="1.2" stroke-linecap="round" stroke-linejoin="round"><path d="M4.5 12.5C7 9 10.5 5 12 5.5C13.5 6 8.5 11.5 9.5 13C10.5 14.5 14.5 9.5 15.8 10.3C17 11 13 14.5 14 15.5C14.8 16.2 16 15.2 16.5 14.8"/></svg>
<svg class="abs" style="left:1100px;top:872px" width="20" height="20" viewBox="0 0 20 20" fill="none" stroke="#1a80d0" stroke-width="1.2" stroke-linejoin="round"><path d="M4.2 3.8h12.6v2.8H7v9.8H4.2Z"/><path d="M9 3.8v1.4M11.5 3.8v1.4M14 3.8v1.4M4.2 9h1.4M4.2 11.5h1.4M4.2 14h1.4"/><path d="M10.5 9.8L17.2 12.2 14.2 13.4 13 16.6Z"/></svg>
<svg class="abs" style="left:1130px;top:873px" width="20" height="18" viewBox="0 0 20 18" fill="none" stroke="#8a8a8a" stroke-width="1.2" stroke-linecap="round" stroke-linejoin="round"><path d="M7.5 5L3.3 9 7.5 13M12 3L9 14.2M13.5 5L17.6 9 13.5 13"/></svg>
</div>
</body></html>
